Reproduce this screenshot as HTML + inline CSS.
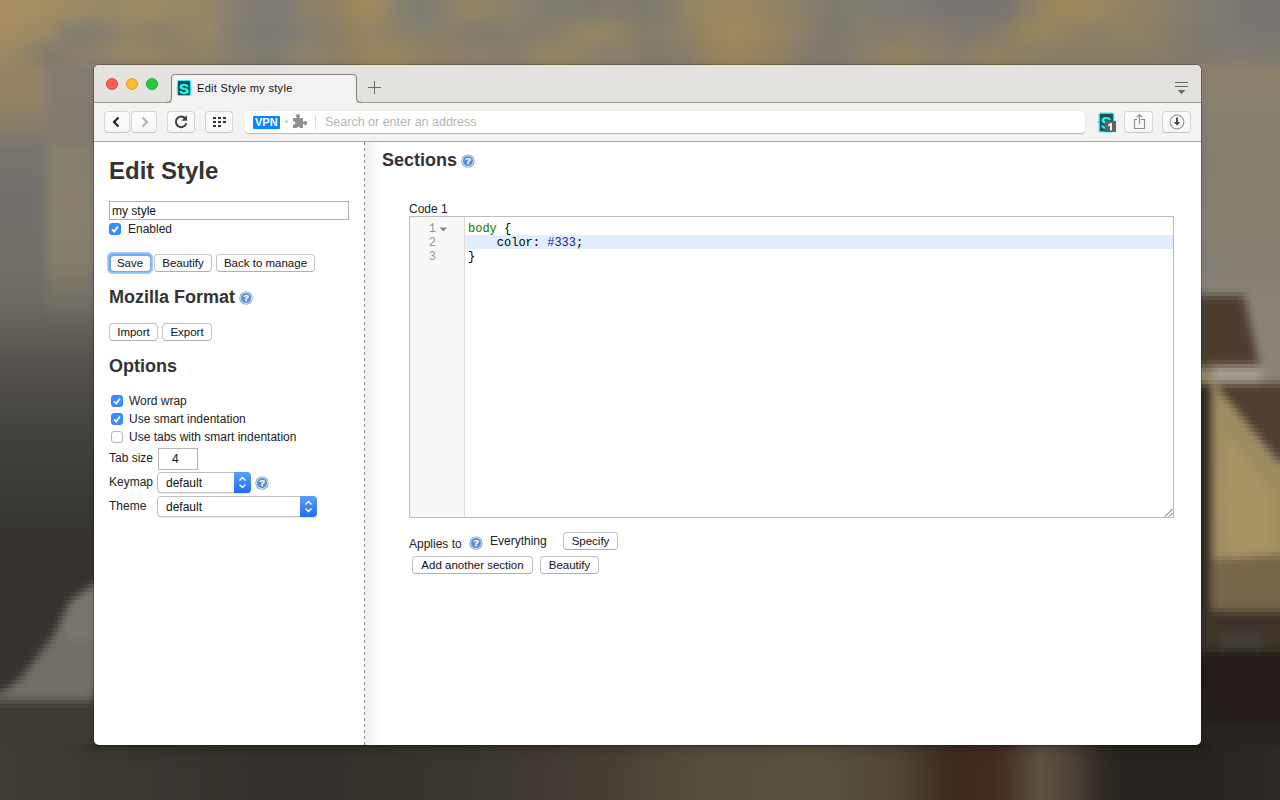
<!DOCTYPE html>
<html><head><meta charset="utf-8">
<style>
*{box-sizing:border-box;margin:0;padding:0}
html,body{width:1280px;height:800px;overflow:hidden;background:#5a554c;font-family:"Liberation Sans",sans-serif}
.a{position:absolute}
#bg{position:absolute;left:0;top:0;width:1280px;height:800px;overflow:hidden}
#bg div{position:absolute}
#win{position:absolute;left:94px;top:65px;width:1107px;height:680px;border-radius:5px;overflow:hidden;background:#fff;box-shadow:0 0 0 1px rgba(0,0,0,.25)}
#tabs{position:absolute;left:0;top:0;width:1107px;height:38px;background:#e4e2de;border-bottom:1px solid #9c9a97}
#tb{position:absolute;left:0;top:38px;width:1107px;height:39px;background:#f4f3f2;border-bottom:1px solid #a8a8a8}
.dot{position:absolute;top:13px;width:12px;height:12px;border-radius:50%}
.btn{position:absolute;background:linear-gradient(#fefefe,#f6f6f6);border:1px solid #d6d6d6;border-bottom-color:#c4c4c4;border-radius:4px}
.t{position:absolute;white-space:nowrap;line-height:1;color:#222}
.pb{position:absolute;height:18px;background:#fff;border:1px solid #c4c4c4;border-bottom-color:#b0b0b0;border-radius:4px;font-size:11.5px;line-height:16px;text-align:center;color:#111}
.cb{position:absolute;width:12px;height:12px;border-radius:3px;background:#3a8cff;border:1px solid #3583f5}
.cb svg{position:absolute;left:0px;top:0px}
.cbu{position:absolute;width:12px;height:12px;border-radius:3px;background:#fff;border:1px solid #b8b8b8}
.help{position:absolute;width:14px;height:14px;border-radius:50%;background:radial-gradient(circle,#5f8fcd 0,#5b8ccb 4.3px,#e2ebf7 4.6px,#d6e3f4 5.6px,#6c9ad3 6px,#4a7ec4 7px)}
.help:after{content:"?";position:absolute;left:0;top:1px;width:14px;height:12px;line-height:12px;text-align:center;font-size:9px;font-weight:bold;color:#fff}
h1,h2{position:absolute;white-space:nowrap;line-height:1;color:#333;font-weight:bold}
.cm{font-family:"Liberation Mono",monospace;font-size:12px;line-height:14px;white-space:pre;position:absolute}
</style></head><body>
<div id="bg"><div style="left:0px;top:0px;width:1280px;height:4px;background:linear-gradient(90deg,#a79162 0.0%,#a79163 1.3%,#a58f65 2.5%,#a38d62 3.8%,#a08d64 5.0%,#9c8b64 6.3%,#988964 7.5%,#968966 8.8%,#998b66 10.0%,#9b8b64 11.3%,#988a65 12.5%,#978965 13.8%,#988963 15.0%,#938665 16.3%,#8c836c 17.5%,#857f71 18.8%,#807c73 20.0%,#7f7a73 21.3%,#827d72 22.5%,#88816d 23.8%,#8c8269 25.0%,#918364 26.3%,#9a865d 27.5%,#9f895d 28.8%,#968762 30.0%,#87816c 31.3%,#7e7d73 32.5%,#817e72 33.8%,#89826c 35.0%,#918566 36.3%,#918566 37.5%,#8d8468 38.8%,#8a826b 40.0%,#86806f 41.3%,#807c71 42.5%,#7f7b70 43.8%,#807c70 45.0%,#7f7a71 46.3%,#827d70 47.5%,#817b70 48.8%,#7f7a71 50.0%,#807b6f 51.3%,#857f6b 52.5%,#918565 53.8%,#978762 55.0%,#9b8861 56.3%,#9b8861 57.5%,#988761 58.8%,#938464 60.0%,#8f8266 61.3%,#89816a 62.5%,#847e6e 63.8%,#7e7a71 65.0%,#807b70 66.3%,#827d70 67.5%,#807c72 68.8%,#7e7b73 70.0%,#7d7a73 71.3%,#7a7773 72.5%,#787572 73.8%,#777470 75.0%,#77746f 76.3%,#78746f 77.5%,#7b776f 78.8%,#877e68 80.0%,#938461 81.3%,#9a875d 82.5%,#9a875d 83.8%,#9c895e 85.0%,#988760 86.3%,#938463 87.5%,#8f8265 88.8%,#8c8267 90.0%,#87806a 91.3%,#847e6c 92.5%,#807c6f 93.8%,#7e7b70 95.0%,#7b7871 96.3%,#78756f 97.5%,#75726f 98.8%,#75726f 100.0%)"></div>
<div style="left:0px;top:4px;width:1280px;height:4px;background:linear-gradient(90deg,#a79162 0.0%,#a79163 1.3%,#a58f65 2.5%,#a38d62 3.8%,#a08d64 5.0%,#9c8b64 6.3%,#988964 7.5%,#968966 8.8%,#998b66 10.0%,#9b8b64 11.3%,#988a65 12.5%,#978965 13.8%,#988963 15.0%,#938665 16.3%,#8c836c 17.5%,#857f71 18.8%,#807c73 20.0%,#7f7a73 21.3%,#827d72 22.5%,#88816d 23.8%,#8c8269 25.0%,#918364 26.3%,#9a865d 27.5%,#9f895d 28.8%,#968762 30.0%,#87816c 31.3%,#7e7d73 32.5%,#817e72 33.8%,#89826c 35.0%,#918566 36.3%,#918566 37.5%,#8d8468 38.8%,#8a826b 40.0%,#86806f 41.3%,#807c71 42.5%,#7f7b70 43.8%,#807c70 45.0%,#7f7a71 46.3%,#827d70 47.5%,#817b70 48.8%,#7f7a71 50.0%,#807b6f 51.3%,#857f6b 52.5%,#918565 53.8%,#978762 55.0%,#9b8861 56.3%,#9b8861 57.5%,#988761 58.8%,#938464 60.0%,#8f8266 61.3%,#89816a 62.5%,#847e6e 63.8%,#7e7a71 65.0%,#807b70 66.3%,#827d70 67.5%,#807c72 68.8%,#7e7b73 70.0%,#7d7a73 71.3%,#7a7773 72.5%,#787572 73.8%,#777470 75.0%,#77746f 76.3%,#78746f 77.5%,#7b776f 78.8%,#877e68 80.0%,#938461 81.3%,#9a875d 82.5%,#9a875d 83.8%,#9c895e 85.0%,#988760 86.3%,#938463 87.5%,#8f8265 88.8%,#8c8267 90.0%,#87806a 91.3%,#847e6c 92.5%,#807c6f 93.8%,#7e7b70 95.0%,#7b7871 96.3%,#78756f 97.5%,#75726f 98.8%,#75726f 100.0%)"></div>
<div style="left:0px;top:8px;width:1280px;height:4px;background:linear-gradient(90deg,#a79162 0.0%,#a79163 1.3%,#a58f65 2.5%,#a38d62 3.8%,#9f8c64 5.0%,#9b8a65 6.3%,#978865 7.5%,#958966 8.8%,#998b66 10.0%,#9a8b64 11.3%,#978a65 12.5%,#978965 13.8%,#988963 15.0%,#938665 16.3%,#8c836c 17.5%,#857f71 18.8%,#807c73 20.0%,#7f7a73 21.3%,#827d72 22.5%,#88816d 23.8%,#8c8269 25.0%,#918364 26.3%,#9a865d 27.5%,#9e895d 28.8%,#968762 30.0%,#87816c 31.3%,#7e7d73 32.5%,#817e72 33.8%,#89826c 35.0%,#908566 36.3%,#908566 37.5%,#8c8468 38.8%,#8a826b 40.0%,#86806f 41.3%,#807c71 42.5%,#807b70 43.8%,#817c6f 45.0%,#807b70 46.3%,#837d6f 47.5%,#827b70 48.8%,#7f7a71 50.0%,#807b6f 51.3%,#857f6b 52.5%,#918565 53.8%,#978762 55.0%,#9b8861 56.3%,#9b8861 57.5%,#988761 58.8%,#938464 60.0%,#8f8266 61.3%,#89816a 62.5%,#847e6e 63.8%,#7e7a71 65.0%,#807b70 66.3%,#827d70 67.5%,#807c72 68.8%,#7e7b73 70.0%,#7d7a73 71.3%,#7b7773 72.5%,#797572 73.8%,#777470 75.0%,#77746f 76.3%,#79746f 77.5%,#7c776e 78.8%,#887e68 80.0%,#938461 81.3%,#9a875d 82.5%,#99875d 83.8%,#9b895e 85.0%,#978760 86.3%,#938463 87.5%,#8f8265 88.8%,#8c8267 90.0%,#87806a 91.3%,#847e6c 92.5%,#807c6f 93.8%,#7e7b70 95.0%,#7b7871 96.3%,#78756f 97.5%,#75726f 98.8%,#75726f 100.0%)"></div>
<div style="left:0px;top:12px;width:1280px;height:4px;background:linear-gradient(90deg,#a79162 0.0%,#a69063 1.3%,#a48e65 2.5%,#a28c62 3.8%,#9c8b65 5.0%,#988966 6.3%,#958766 7.5%,#948867 8.8%,#988a66 10.0%,#998a64 11.3%,#968965 12.5%,#968866 13.8%,#978864 15.0%,#938665 16.3%,#8c836c 17.5%,#857f71 18.8%,#807c73 20.0%,#7f7a73 21.3%,#827d72 22.5%,#87816d 23.8%,#8b816a 25.0%,#908265 26.3%,#99855e 27.5%,#9d885e 28.8%,#958663 30.0%,#87816c 31.3%,#7f7e72 32.5%,#827e71 33.8%,#89826c 35.0%,#8f8467 36.3%,#8f8467 37.5%,#8b8369 38.8%,#89826b 40.0%,#86806f 41.3%,#817c70 42.5%,#817c6f 43.8%,#837d6e 45.0%,#837c6f 46.3%,#857e6e 47.5%,#837c6f 48.8%,#807a70 50.0%,#807b6f 51.3%,#857f6b 52.5%,#918565 53.8%,#978762 55.0%,#9b8860 56.3%,#9c8860 57.5%,#988761 58.8%,#948464 60.0%,#908266 61.3%,#8a8169 62.5%,#847e6d 63.8%,#7e7a71 65.0%,#807b70 66.3%,#827d70 67.5%,#817c71 68.8%,#7f7b72 70.0%,#7e7b72 71.3%,#7c7872 72.5%,#7a7671 73.8%,#787570 75.0%,#78756f 76.3%,#7a756e 77.5%,#7e786d 78.8%,#897f67 80.0%,#948461 81.3%,#99875d 82.5%,#98865e 83.8%,#9a885f 85.0%,#968661 86.3%,#928463 87.5%,#8f8265 88.8%,#8c8267 90.0%,#87806a 91.3%,#847e6c 92.5%,#807c6f 93.8%,#7e7b70 95.0%,#7b7871 96.3%,#78756f 97.5%,#76736f 98.8%,#76736f 100.0%)"></div>
<div style="left:0px;top:16px;width:1280px;height:4px;background:linear-gradient(90deg,#a79062 0.0%,#a69063 1.3%,#a38e65 2.5%,#a08c62 3.8%,#988967 5.0%,#938669 6.3%,#918568 7.5%,#928768 8.8%,#978966 10.0%,#978964 11.3%,#948766 12.5%,#948767 13.8%,#968864 15.0%,#938665 16.3%,#8c836c 17.5%,#847f71 18.8%,#807c73 20.0%,#7f7a73 21.3%,#827d72 22.5%,#87816e 23.8%,#8a816a 25.0%,#8f8266 26.3%,#98855f 27.5%,#9b885f 28.8%,#948663 30.0%,#87816c 31.3%,#807f71 32.5%,#837e70 33.8%,#89826b 35.0%,#8d8368 36.3%,#8c8269 37.5%,#89826a 38.8%,#88816b 40.0%,#857f6f 41.3%,#827d70 42.5%,#837d6e 43.8%,#857e6c 45.0%,#877e6c 46.3%,#87806c 47.5%,#857d6d 48.8%,#817b6f 50.0%,#817b6f 51.3%,#857f6b 52.5%,#908465 53.8%,#978761 55.0%,#9b8860 56.3%,#9c8860 57.5%,#998760 58.8%,#948463 60.0%,#918265 61.3%,#8a8169 62.5%,#847e6d 63.8%,#7e7a70 65.0%,#807b70 66.3%,#827d70 67.5%,#817c70 68.8%,#807c71 70.0%,#807c71 71.3%,#7e7971 72.5%,#7c7770 73.8%,#79766f 75.0%,#79766f 76.3%,#7c766d 77.5%,#807a6b 78.8%,#8b8065 80.0%,#948561 81.3%,#98875e 82.5%,#96855f 83.8%,#978660 85.0%,#948562 86.3%,#928463 87.5%,#8f8265 88.8%,#8c8267 90.0%,#87806a 91.3%,#847e6c 92.5%,#807c6f 93.8%,#7e7b70 95.0%,#7b7871 96.3%,#78756f 97.5%,#76746f 98.8%,#76746f 100.0%)"></div>
<div style="left:0px;top:20px;width:1280px;height:4px;background:linear-gradient(90deg,#a68f62 0.0%,#a58f62 1.3%,#a18d64 2.5%,#9e8b63 3.8%,#938669 5.0%,#8e836c 6.3%,#8c836b 7.5%,#8f856a 8.8%,#958865 10.0%,#958765 11.3%,#918567 12.5%,#928568 13.8%,#958765 15.0%,#948765 16.3%,#8b826c 17.5%,#837e71 18.8%,#7f7b73 20.0%,#7e7a73 21.3%,#817c73 22.5%,#86806f 23.8%,#89806b 25.0%,#8e8167 26.3%,#968460 27.5%,#998761 28.8%,#928564 30.0%,#88826b 31.3%,#82806f 32.5%,#847f6e 33.8%,#89816a 35.0%,#8b816a 36.3%,#89806b 37.5%,#87806c 38.8%,#87806c 40.0%,#847e6f 41.3%,#837e6f 42.5%,#857e6c 43.8%,#89806a 45.0%,#8c8169 46.3%,#8b826a 47.5%,#877f6b 48.8%,#827c6e 50.0%,#827c6e 51.3%,#86806b 52.5%,#8f8365 53.8%,#978660 55.0%,#9c885f 56.3%,#9d895f 57.5%,#9a885f 58.8%,#958562 60.0%,#928364 61.3%,#8b8168 62.5%,#847d6c 63.8%,#7e796f 65.0%,#807b70 66.3%,#837e6f 67.5%,#827d6f 68.8%,#817d70 70.0%,#827d6f 71.3%,#817a6f 72.5%,#7e786f 73.8%,#7b776e 75.0%,#7b776e 76.3%,#7e786c 77.5%,#847c69 78.8%,#8e8163 80.0%,#958660 81.3%,#97865f 82.5%,#948460 83.8%,#948462 85.0%,#918363 86.3%,#918363 87.5%,#908364 88.8%,#8b8166 90.0%,#877f69 91.3%,#837d6c 92.5%,#7f7b6e 93.8%,#7e7a6f 95.0%,#7c7971 96.3%,#797670 97.5%,#777570 98.8%,#777570 100.0%)"></div>
<div style="left:0px;top:24px;width:1280px;height:4px;background:linear-gradient(90deg,#a58f62 0.0%,#a48e62 1.3%,#a08c63 2.5%,#9c8a64 3.8%,#8e836b 5.0%,#88806f 6.3%,#88806e 7.5%,#8c836c 8.8%,#938765 10.0%,#928565 11.3%,#8e8367 12.5%,#908469 13.8%,#948666 15.0%,#958865 16.3%,#8a826c 17.5%,#837d71 18.8%,#7e7a73 20.0%,#7e7a73 21.3%,#807b73 22.5%,#857f6f 23.8%,#887f6c 25.0%,#8d8068 26.3%,#958361 27.5%,#968662 28.8%,#918465 30.0%,#89826a 31.3%,#84816e 32.5%,#85806d 33.8%,#89806a 35.0%,#88806c 36.3%,#857e6d 37.5%,#857e6d 38.8%,#86806d 40.0%,#847e6f 41.3%,#847e6e 42.5%,#877f6b 43.8%,#8c8268 45.0%,#918466 46.3%,#8e8467 47.5%,#898069 48.8%,#837c6d 50.0%,#827d6e 51.3%,#87806b 52.5%,#8f8365 53.8%,#978560 55.0%,#9d885e 56.3%,#9e895e 57.5%,#9a885f 58.8%,#968562 60.0%,#938464 61.3%,#8c8167 62.5%,#847c6b 63.8%,#7e796f 65.0%,#807b70 66.3%,#847f6e 67.5%,#837e6e 68.8%,#827d6f 70.0%,#847e6e 71.3%,#847b6d 72.5%,#80796e 73.8%,#7d786e 75.0%,#7d786d 76.3%,#80796b 77.5%,#877e67 78.8%,#918261 80.0%,#96865f 81.3%,#96855f 82.5%,#928361 83.8%,#908263 85.0%,#8e8264 86.3%,#908363 87.5%,#908363 88.8%,#8b8065 90.0%,#877e68 91.3%,#837c6c 92.5%,#7f7a6e 93.8%,#7e796f 95.0%,#7d7971 96.3%,#7a7671 97.5%,#787671 98.8%,#787671 100.0%)"></div>
<div style="left:0px;top:28px;width:1280px;height:4px;background:linear-gradient(90deg,#a58e62 0.0%,#a38d62 1.3%,#9e8b63 2.5%,#998964 3.8%,#8b816d 5.0%,#847e71 6.3%,#857e70 7.5%,#8a826d 8.8%,#928665 10.0%,#908465 11.3%,#8d8268 12.5%,#8e8369 13.8%,#938567 15.0%,#958865 16.3%,#8a826c 17.5%,#827d71 18.8%,#7e7a73 20.0%,#7e7a73 21.3%,#807b73 22.5%,#857f70 23.8%,#887e6d 25.0%,#8c7f68 26.3%,#948261 27.5%,#948563 28.8%,#908365 30.0%,#89826a 31.3%,#85816d 32.5%,#86806c 33.8%,#898069 35.0%,#867f6d 36.3%,#837c6f 37.5%,#837d6e 38.8%,#867f6d 40.0%,#837d6f 41.3%,#857f6d 42.5%,#89806a 43.8%,#8f8366 45.0%,#958664 46.3%,#918566 47.5%,#8b8168 48.8%,#847d6c 50.0%,#837d6e 51.3%,#87806b 52.5%,#8e8265 53.8%,#97855f 55.0%,#9d885d 56.3%,#9e895d 57.5%,#9b885e 58.8%,#978561 60.0%,#938463 61.3%,#8c8166 62.5%,#847c6a 63.8%,#7e796e 65.0%,#807b70 66.3%,#847f6e 67.5%,#847e6d 68.8%,#847e6d 70.0%,#857f6d 71.3%,#867c6c 72.5%,#827a6e 73.8%,#7e796d 75.0%,#7e796d 76.3%,#827a6a 77.5%,#8a7f65 78.8%,#928360 80.0%,#96875f 81.3%,#958560 82.5%,#908362 83.8%,#8e8164 85.0%,#8c8164 86.3%,#8f8363 87.5%,#908363 88.8%,#8b8065 90.0%,#877e68 91.3%,#837c6c 92.5%,#7f7a6e 93.8%,#7e796f 95.0%,#7d7971 96.3%,#7a7671 97.5%,#797671 98.8%,#797671 100.0%)"></div>
<div style="left:0px;top:32px;width:1280px;height:4px;background:linear-gradient(90deg,#a48e62 0.0%,#a28d62 1.3%,#9d8a63 2.5%,#978865 3.8%,#89806e 5.0%,#837d72 6.3%,#847e71 7.5%,#89826d 8.8%,#928565 10.0%,#908365 11.3%,#8c8268 12.5%,#8d826a 13.8%,#938567 15.0%,#948865 16.3%,#8a826c 17.5%,#827d71 18.8%,#7e7a73 20.0%,#7e7a73 21.3%,#807b73 22.5%,#857f70 23.8%,#877e6d 25.0%,#8b7f69 26.3%,#938262 27.5%,#948563 28.8%,#908365 30.0%,#8a8269 31.3%,#87826b 32.5%,#87806b 33.8%,#898069 35.0%,#867e6d 36.3%,#827c6f 37.5%,#837c6e 38.8%,#857f6d 40.0%,#847d6e 41.3%,#867f6c 42.5%,#8a8169 43.8%,#908465 45.0%,#968763 46.3%,#918565 47.5%,#8b8268 48.8%,#857d6b 50.0%,#837d6e 51.3%,#87806b 52.5%,#8d8265 53.8%,#96855f 55.0%,#9d885d 56.3%,#9e895d 57.5%,#9b885e 58.8%,#978561 60.0%,#938463 61.3%,#8c8166 62.5%,#847c6a 63.8%,#7e796e 65.0%,#807b70 66.3%,#847f6e 67.5%,#857e6d 68.8%,#857e6c 70.0%,#86806c 71.3%,#877d6b 72.5%,#837b6d 73.8%,#807a6d 75.0%,#80796c 76.3%,#847b6a 77.5%,#8b8064 78.8%,#938460 80.0%,#968660 81.3%,#948461 82.5%,#8f8262 83.8%,#8c8065 85.0%,#8b8065 86.3%,#8e8363 87.5%,#8f8363 88.8%,#8b8065 90.0%,#877e68 91.3%,#837c6c 92.5%,#7f7a6e 93.8%,#7e796f 95.0%,#7d7971 96.3%,#7a7671 97.5%,#797771 98.8%,#797771 100.0%)"></div>
<div style="left:0px;top:36px;width:1280px;height:4px;background:linear-gradient(90deg,#a28d62 0.0%,#a08c62 1.3%,#9a8964 2.5%,#938667 3.8%,#877f6e 5.0%,#837d71 6.3%,#857e70 7.5%,#8b826c 8.8%,#928565 10.0%,#908465 11.3%,#8c8268 12.5%,#8d8269 13.8%,#928467 15.0%,#938765 16.3%,#8a826c 17.5%,#827d70 18.8%,#7f7b72 20.0%,#7f7a72 21.3%,#817c72 22.5%,#85806f 23.8%,#887f6c 25.0%,#8b7f68 26.3%,#938262 27.5%,#948563 28.8%,#918464 30.0%,#8c8368 31.3%,#89826a 32.5%,#88806a 33.8%,#8a8068 35.0%,#867e6d 36.3%,#837c6f 37.5%,#837c6e 38.8%,#857e6d 40.0%,#857e6d 41.3%,#88806b 42.5%,#8c8268 43.8%,#918465 45.0%,#958763 46.3%,#908566 47.5%,#8b8268 48.8%,#857d6b 50.0%,#827d6e 51.3%,#86806b 52.5%,#8c8166 53.8%,#958460 55.0%,#9c875d 56.3%,#9e885d 57.5%,#9a875e 58.8%,#968461 60.0%,#928363 61.3%,#8b8067 62.5%,#837b6b 63.8%,#7e796f 65.0%,#817b70 66.3%,#857f6d 67.5%,#877f6b 68.8%,#877f6b 70.0%,#88806a 71.3%,#887e6a 72.5%,#847c6c 73.8%,#817b6c 75.0%,#827b6b 76.3%,#867d68 77.5%,#8c8064 78.8%,#928360 80.0%,#948561 81.3%,#928362 82.5%,#8d8163 83.8%,#8b8066 85.0%,#8a8066 86.3%,#8d8264 87.5%,#8e8264 88.8%,#8a8066 90.0%,#867d69 91.3%,#837c6c 92.5%,#7f7a6e 93.8%,#7e796f 95.0%,#7e7971 96.3%,#7b7771 97.5%,#7a7771 98.8%,#7a7771 100.0%)"></div>
<div style="left:0px;top:40px;width:1280px;height:4px;background:linear-gradient(90deg,#a08c62 0.0%,#9d8a62 1.3%,#968765 2.5%,#8e8369 3.8%,#877e6e 5.0%,#847d70 6.3%,#877f6e 7.5%,#8d836a 8.8%,#938665 10.0%,#918465 11.3%,#8d8267 12.5%,#8d8269 13.8%,#908466 15.0%,#928665 16.3%,#89826b 17.5%,#837d70 18.8%,#807b72 20.0%,#7f7b72 21.3%,#837d71 22.5%,#87816e 23.8%,#89806b 25.0%,#8b7f68 26.3%,#928262 27.5%,#948561 28.8%,#938562 30.0%,#8e8466 31.3%,#8b8268 32.5%,#8a8068 33.8%,#8b8067 35.0%,#877e6c 36.3%,#847d6d 37.5%,#857d6c 38.8%,#857e6c 40.0%,#877f6b 41.3%,#8a8269 42.5%,#8d8367 43.8%,#908465 45.0%,#938565 46.3%,#8e8367 47.5%,#8b8168 48.8%,#857d6b 50.0%,#827c6e 51.3%,#857f6b 52.5%,#8b8066 53.8%,#948361 55.0%,#9a865e 56.3%,#9c885d 57.5%,#99865e 58.8%,#958461 60.0%,#918263 61.3%,#8a7f67 62.5%,#827b6c 63.8%,#7e796f 65.0%,#817b70 66.3%,#867f6c 67.5%,#897f6a 68.8%,#8a8069 70.0%,#898169 71.3%,#887e6a 72.5%,#857c6c 73.8%,#837c6b 75.0%,#857c69 76.3%,#887e67 77.5%,#8c8064 78.8%,#908262 80.0%,#918462 81.3%,#8f8263 82.5%,#8c8065 83.8%,#8a7f66 85.0%,#897f66 86.3%,#8c8165 87.5%,#8c8165 88.8%,#897f66 90.0%,#857d69 91.3%,#827b6c 92.5%,#7f7a6e 93.8%,#7e796f 95.0%,#7e7a71 96.3%,#7d7871 97.5%,#7b7871 98.8%,#7a7871 100.0%)"></div>
<div style="left:0px;top:44px;width:1280px;height:4px;background:linear-gradient(90deg,#9d8b63 0.0%,#9a8963 1.3%,#928566 2.5%,#89806b 3.8%,#867d6d 5.0%,#867e6e 6.3%,#89806c 7.5%,#8f8468 8.8%,#948664 10.0%,#928564 11.3%,#8e8367 12.5%,#8d8268 13.8%,#8f8366 15.0%,#918565 16.3%,#89816b 17.5%,#837e6f 18.8%,#817c71 20.0%,#807b71 21.3%,#847e70 22.5%,#88826d 23.8%,#8a816a 25.0%,#8c8067 26.3%,#928162 27.5%,#958560 28.8%,#958660 30.0%,#918564 31.3%,#8d8366 32.5%,#8b8067 33.8%,#8c8066 35.0%,#887e6b 36.3%,#867e6c 37.5%,#867d6b 38.8%,#857d6c 40.0%,#898069 41.3%,#8d8367 42.5%,#8e8466 43.8%,#908465 45.0%,#908466 46.3%,#8b8268 47.5%,#8a8169 48.8%,#847c6c 50.0%,#817c6e 51.3%,#847f6b 52.5%,#8a7f67 53.8%,#938262 55.0%,#99855e 56.3%,#9b875d 57.5%,#98855f 58.8%,#948362 60.0%,#908164 61.3%,#897e68 62.5%,#817a6d 63.8%,#7f7870 65.0%,#827c70 66.3%,#877f6b 67.5%,#8b8068 68.8%,#8d8167 70.0%,#8b8168 71.3%,#897f69 72.5%,#867d6b 73.8%,#857d6a 75.0%,#887d67 76.3%,#8b7f65 77.5%,#8d8063 78.8%,#8e8163 80.0%,#8e8264 81.3%,#8c8165 82.5%,#8a7f66 83.8%,#897f67 85.0%,#887f67 86.3%,#8a8066 87.5%,#8a8066 88.8%,#887f67 90.0%,#847c6a 91.3%,#827b6d 92.5%,#7f796e 93.8%,#7e796e 95.0%,#7f7a70 96.3%,#7e7970 97.5%,#7c7871 98.8%,#7b7871 100.0%)"></div>
<div style="left:0px;top:48px;width:1280px;height:4px;background:linear-gradient(90deg,#9b8a63 0.0%,#978863 1.3%,#8f8366 2.5%,#857e6d 3.8%,#857d6d 5.0%,#887f6c 6.3%,#8b816b 7.5%,#918566 8.8%,#958764 10.0%,#938664 11.3%,#8f8466 12.5%,#8d8267 13.8%,#8e8265 15.0%,#8f8565 16.3%,#88816a 17.5%,#847e6e 18.8%,#817d70 20.0%,#817c70 21.3%,#857f70 22.5%,#89826d 23.8%,#8a816a 25.0%,#8c8066 26.3%,#918162 27.5%,#96855f 28.8%,#97865f 30.0%,#948562 31.3%,#8f8365 32.5%,#8c8066 33.8%,#8c8066 35.0%,#887e6b 36.3%,#887e6b 37.5%,#877e6a 38.8%,#857c6b 40.0%,#8a8068 41.3%,#8f8466 42.5%,#908466 43.8%,#8f8465 45.0%,#8e8367 46.3%,#89816a 47.5%,#89806a 48.8%,#847c6c 50.0%,#807b6e 51.3%,#847e6b 52.5%,#887f68 53.8%,#918263 55.0%,#98855f 56.3%,#9a865d 57.5%,#97855f 58.8%,#948262 60.0%,#8e8164 61.3%,#877e69 62.5%,#81796d 63.8%,#7f7871 65.0%,#837c70 66.3%,#877f6b 67.5%,#8d8166 68.8%,#908165 70.0%,#8d8266 71.3%,#8a8068 72.5%,#877e6a 73.8%,#877e69 75.0%,#8b7f66 76.3%,#8d8163 77.5%,#8d8063 78.8%,#8d8164 80.0%,#8b8066 81.3%,#897f67 82.5%,#887f67 83.8%,#887e68 85.0%,#887e68 86.3%,#887f67 87.5%,#897f67 88.8%,#877e68 90.0%,#847c6b 91.3%,#817a6d 92.5%,#7f796e 93.8%,#7e796e 95.0%,#807b70 96.3%,#7f7a70 97.5%,#7c7971 98.8%,#7c7971 100.0%)"></div>
<div style="left:0px;top:52px;width:1280px;height:4px;background:linear-gradient(90deg,#9a8963 0.0%,#968763 1.3%,#8d8267 2.5%,#827c6e 3.8%,#857c6d 5.0%,#887f6c 6.3%,#8b816a 7.5%,#918566 8.8%,#948665 10.0%,#938664 11.3%,#908466 12.5%,#8d8267 13.8%,#8d8265 15.0%,#8e8465 16.3%,#88816a 17.5%,#847e6e 18.8%,#827d70 20.0%,#817c70 21.3%,#86806f 22.5%,#8a836c 23.8%,#8b8269 25.0%,#8c8066 26.3%,#918162 27.5%,#96855e 28.8%,#98875e 30.0%,#958661 31.3%,#908364 32.5%,#8d8065 33.8%,#8d8065 35.0%,#897e6a 36.3%,#897f6a 37.5%,#887e69 38.8%,#857c6b 40.0%,#8b8167 41.3%,#908565 42.5%,#918565 43.8%,#8f8465 45.0%,#8d8268 46.3%,#88806b 47.5%,#89806a 48.8%,#847c6c 50.0%,#807b6e 51.3%,#837e6b 52.5%,#877e68 53.8%,#908164 55.0%,#97845f 56.3%,#99865d 57.5%,#96845f 58.8%,#938262 60.0%,#8d8064 61.3%,#867d69 62.5%,#80796e 63.8%,#7f7871 65.0%,#837c70 66.3%,#887f6a 67.5%,#8e8165 68.8%,#918264 70.0%,#8e8265 71.3%,#8a8068 72.5%,#887e6a 73.8%,#887f68 75.0%,#8c8065 76.3%,#8e8262 77.5%,#8d8063 78.8%,#8c8065 80.0%,#8a7f67 81.3%,#887e68 82.5%,#877e68 83.8%,#877e68 85.0%,#877e68 86.3%,#877e68 87.5%,#887e68 88.8%,#877e68 90.0%,#847c6b 91.3%,#827a6d 92.5%,#807a6e 93.8%,#7f7a6e 95.0%,#817b70 96.3%,#807b70 97.5%,#7e7a71 98.8%,#7d7a71 100.0%)"></div>
<div style="left:0px;top:56px;width:1280px;height:4px;background:linear-gradient(90deg,#988863 0.0%,#958763 1.3%,#8d8267 2.5%,#827c6f 3.8%,#857c6e 5.0%,#887f6c 6.3%,#8a806a 7.5%,#8f8366 8.8%,#928465 10.0%,#928564 11.3%,#8f8365 12.5%,#8c8166 13.8%,#8c8164 15.0%,#8d8364 16.3%,#878069 17.5%,#837d6d 18.8%,#817c6f 20.0%,#807b6f 21.3%,#857f6e 22.5%,#89826b 23.8%,#8a8168 25.0%,#8b7f65 26.3%,#908061 27.5%,#95845d 28.8%,#98865c 30.0%,#95855f 31.3%,#908262 32.5%,#8c7f64 33.8%,#8c7f64 35.0%,#887d69 36.3%,#887e69 37.5%,#877d68 38.8%,#847b6a 40.0%,#8b8065 41.3%,#908463 42.5%,#908464 43.8%,#8e8364 45.0%,#8b8167 46.3%,#867f6a 47.5%,#887f69 48.8%,#837b6b 50.0%,#7f7a6d 51.3%,#827d6a 52.5%,#867d67 53.8%,#8f8063 55.0%,#96835e 56.3%,#98855c 57.5%,#95835e 58.8%,#928161 60.0%,#8c7f63 61.3%,#857c68 62.5%,#7f786d 63.8%,#7e7770 65.0%,#827b6f 66.3%,#877e69 67.5%,#8e8064 68.8%,#918162 70.0%,#8d8164 71.3%,#897f67 72.5%,#877d69 73.8%,#887e67 75.0%,#8c7f63 76.3%,#8e8161 77.5%,#8c7f62 78.8%,#8a7f64 80.0%,#887e66 81.3%,#867d67 82.5%,#867d67 83.8%,#867d67 85.0%,#867d67 86.3%,#867d67 87.5%,#867d67 88.8%,#867d67 90.0%,#847b6a 91.3%,#827a6c 92.5%,#807a6d 93.8%,#817b6e 95.0%,#827c6f 96.3%,#827c6f 97.5%,#807b70 98.8%,#7f7b70 100.0%)"></div>
<div style="left:0px;top:60px;width:1280px;height:4px;background:linear-gradient(90deg,#978764 0.0%,#958664 1.3%,#8e8266 2.5%,#837d6e 3.8%,#847c6e 5.0%,#877e6d 6.3%,#857c69 7.5%,#897f66 8.8%,#8b7f66 10.0%,#8e8162 11.3%,#8c8063 12.5%,#897e64 13.8%,#897e62 15.0%,#8a8062 16.3%,#847d67 17.5%,#807a6b 18.8%,#7e796d 20.0%,#7d786d 21.3%,#827c6c 22.5%,#867f69 23.8%,#877e66 25.0%,#887c63 26.3%,#8d7d5f 27.5%,#92815b 28.8%,#94835a 30.0%,#92825d 31.3%,#8d7f60 32.5%,#897c62 33.8%,#897c62 35.0%,#857a67 36.3%,#857b67 37.5%,#847a66 38.8%,#817868 40.0%,#887d63 41.3%,#8d8161 42.5%,#8d8162 43.8%,#8b8062 45.0%,#887e65 46.3%,#837c68 47.5%,#857c67 48.8%,#807869 50.0%,#7c776b 51.3%,#7f7a68 52.5%,#837a65 53.8%,#8c7d61 55.0%,#92805c 56.3%,#94825a 57.5%,#92805c 58.8%,#8f7e5f 60.0%,#897c61 61.3%,#827966 62.5%,#7c756b 63.8%,#7b746e 65.0%,#7f786d 66.3%,#847b67 67.5%,#8b7d62 68.8%,#8e7e60 70.0%,#8a7e62 71.3%,#867c65 72.5%,#847a67 73.8%,#857b65 75.0%,#897c61 76.3%,#8b7e5f 77.5%,#897c60 78.8%,#877c62 80.0%,#857b64 81.3%,#837a65 82.5%,#837a65 83.8%,#837a65 85.0%,#837a65 86.3%,#837a65 87.5%,#837a65 88.8%,#847b66 90.0%,#827a68 91.3%,#817969 92.5%,#80786a 93.8%,#837c6d 95.0%,#847e6e 96.3%,#847e6e 97.5%,#837c6f 98.8%,#827c6f 100.0%)"></div>
<div style="left:0px;top:64px;width:1280px;height:4px;background:linear-gradient(90deg,#968664 0.0%,#948564 1.3%,#908366 2.5%,#857e6e 3.8%,#847d6f 5.0%,#867e6e 6.3%,#88806f 7.5%,#8b826d 8.8%,#8d826d 10.0%,#928567 11.3%,#918567 12.5%,#8e8368 13.8%,#8e8366 15.0%,#8f8566 16.3%,#89826b 17.5%,#857f6f 18.8%,#837e71 20.0%,#827d71 21.3%,#878170 22.5%,#8b846d 23.8%,#8c836a 25.0%,#8d8167 26.3%,#928263 27.5%,#97865f 28.8%,#9a885e 30.0%,#978761 31.3%,#928464 32.5%,#8e8166 33.8%,#8e8166 35.0%,#8a7f6b 36.3%,#8a806b 37.5%,#897f6a 38.8%,#867d6c 40.0%,#8d8267 41.3%,#928665 42.5%,#928666 43.8%,#908566 45.0%,#8d8369 46.3%,#88816c 47.5%,#8a816b 48.8%,#857d6d 50.0%,#817c6f 51.3%,#847f6c 52.5%,#887f69 53.8%,#918265 55.0%,#988560 56.3%,#9a875e 57.5%,#978560 58.8%,#948363 60.0%,#8e8165 61.3%,#877e6a 62.5%,#817a6f 63.8%,#807972 65.0%,#847d71 66.3%,#89806b 67.5%,#908266 68.8%,#938364 70.0%,#8f8366 71.3%,#8b8169 72.5%,#897f6b 73.8%,#8a8069 75.0%,#8e8165 76.3%,#908363 77.5%,#8e8164 78.8%,#8c8166 80.0%,#8a8068 81.3%,#887f69 82.5%,#887f69 83.8%,#887f69 85.0%,#887f69 86.3%,#887f69 87.5%,#887f69 88.8%,#89816a 90.0%,#89806c 91.3%,#88806d 92.5%,#887f6d 93.8%,#867e6c 95.0%,#877f6d 96.3%,#877f6d 97.5%,#867e6e 98.8%,#857e6e 100.0%)"></div>
<div style="left:0px;top:68px;width:96px;height:4px;background:linear-gradient(90deg,#948465 0.5%,#948465 4.7%,#948465 8.9%,#948465 13.0%,#948465 17.2%,#948465 21.4%,#948465 25.5%,#938465 29.7%,#938465 33.9%,#938465 38.0%,#918366 42.2%,#8d8169 46.4%,#877f6e 50.5%,#847d70 54.7%,#837d71 58.9%,#837d71 63.0%,#837d71 67.2%,#837d71 71.4%,#837d71 75.5%,#837d71 79.7%,#837d71 83.9%,#847d71 88.0%,#827c70 92.2%,#7f786d 96.4%,#857e71 99.5%)"></div>
<div style="left:1199px;top:68px;width:81px;height:4px;background:linear-gradient(90deg,#8c826c 0.6%,#867c67 5.6%,#897f6a 10.5%,#8b816b 15.4%,#8b816b 20.4%,#8b816b 25.3%,#8b816c 30.2%,#8b816c 35.2%,#8b816c 40.1%,#8b816c 45.1%,#8b816c 50.0%,#8b816c 54.9%,#8b816c 59.9%,#8b816c 64.8%,#8b816c 69.8%,#8b816c 74.7%,#8b816c 79.6%,#8a816c 84.6%,#8a816c 89.5%,#8a816c 94.4%,#8a816c 99.4%)"></div>
<div style="left:0px;top:72px;width:96px;height:4px;background:linear-gradient(90deg,#948465 0.5%,#948465 4.7%,#948465 8.9%,#948465 13.0%,#948465 17.2%,#948465 21.4%,#948465 25.5%,#948465 29.7%,#948465 33.9%,#948465 38.0%,#928366 42.2%,#8e8169 46.4%,#887f6e 50.5%,#847d70 54.7%,#837d71 58.9%,#837d71 63.0%,#837d71 67.2%,#837d71 71.4%,#837d71 75.5%,#837d71 79.7%,#837d71 83.9%,#837d71 88.0%,#817c70 92.2%,#7e786d 96.4%,#847e72 99.5%)"></div>
<div style="left:1199px;top:72px;width:81px;height:4px;background:linear-gradient(90deg,#8d836d 0.6%,#877d68 5.6%,#8a806b 10.5%,#8c826c 15.4%,#8c826c 20.4%,#8c826c 25.3%,#8c826c 30.2%,#8c826c 35.2%,#8c826c 40.1%,#8c826c 45.1%,#8c826c 50.0%,#8c826c 54.9%,#8c826c 59.9%,#8c826c 64.8%,#8c826c 69.8%,#8c826c 74.7%,#8c826c 79.6%,#8c826c 84.6%,#8c826c 89.5%,#8c826c 94.4%,#8c826c 99.4%)"></div>
<div style="left:0px;top:76px;width:96px;height:4px;background:linear-gradient(90deg,#948465 0.5%,#948465 4.7%,#948465 8.9%,#948465 13.0%,#948465 17.2%,#948465 21.4%,#948465 25.5%,#948465 29.7%,#948465 33.9%,#948465 38.0%,#928366 42.2%,#8e8169 46.4%,#887f6e 50.5%,#847d70 54.7%,#837d71 58.9%,#837d71 63.0%,#837d71 67.2%,#837d71 71.4%,#837d71 75.5%,#837d71 79.7%,#837d71 83.9%,#837d71 88.0%,#817c70 92.2%,#7e786d 96.4%,#847e72 99.5%)"></div>
<div style="left:1199px;top:76px;width:81px;height:4px;background:linear-gradient(90deg,#8c836d 0.6%,#867d68 5.6%,#89806b 10.5%,#8b826c 15.4%,#8b826c 20.4%,#8b826c 25.3%,#8b826c 30.2%,#8b826c 35.2%,#8b826c 40.1%,#8b826c 45.1%,#8b826c 50.0%,#8b826c 54.9%,#8b826c 59.9%,#8b826c 64.8%,#8b826c 69.8%,#8b826c 74.7%,#8b826c 79.6%,#8b826c 84.6%,#8b826c 89.5%,#8b826c 94.4%,#8b826c 99.4%)"></div>
<div style="left:0px;top:80px;width:96px;height:4px;background:linear-gradient(90deg,#948465 0.5%,#948465 4.7%,#948465 8.9%,#948465 13.0%,#948465 17.2%,#948465 21.4%,#948465 25.5%,#948465 29.7%,#948465 33.9%,#948465 38.0%,#928366 42.2%,#8e8169 46.4%,#887f6e 50.5%,#847d70 54.7%,#837d71 58.9%,#837d71 63.0%,#837d71 67.2%,#837d71 71.4%,#837d71 75.5%,#837d71 79.7%,#837d71 83.9%,#837d71 88.0%,#817c70 92.2%,#7e786d 96.4%,#847e72 99.5%)"></div>
<div style="left:1199px;top:80px;width:81px;height:4px;background:linear-gradient(90deg,#8c836e 0.6%,#867d69 5.6%,#89806c 10.5%,#8b826d 15.4%,#8b826d 20.4%,#8b826d 25.3%,#8b826d 30.2%,#8b826d 35.2%,#8b826d 40.1%,#8b826d 45.1%,#8b826d 50.0%,#8b826d 54.9%,#8b826d 59.9%,#8b826d 64.8%,#8b826d 69.8%,#8b826d 74.7%,#8b826d 79.6%,#8b826d 84.6%,#8b826d 89.5%,#8b826d 94.4%,#8b826d 99.4%)"></div>
<div style="left:0px;top:84px;width:96px;height:4px;background:linear-gradient(90deg,#938465 0.5%,#938465 4.7%,#938465 8.9%,#938465 13.0%,#938465 17.2%,#938465 21.4%,#938465 25.5%,#938465 29.7%,#938465 33.9%,#938465 38.0%,#918366 42.2%,#8d8169 46.4%,#887f6e 50.5%,#847d70 54.7%,#837d71 58.9%,#837d71 63.0%,#837d71 67.2%,#837d71 71.4%,#837d71 75.5%,#837d71 79.7%,#837d71 83.9%,#837d71 88.0%,#817c70 92.2%,#7e786d 96.4%,#847e72 99.5%)"></div>
<div style="left:1199px;top:84px;width:81px;height:4px;background:linear-gradient(90deg,#8c836e 0.6%,#867d69 5.6%,#89806c 10.5%,#8b826d 15.4%,#8b826d 20.4%,#8b826d 25.3%,#8b826d 30.2%,#8b826d 35.2%,#8b826d 40.1%,#8b826d 45.1%,#8b826d 50.0%,#8b826d 54.9%,#8b826d 59.9%,#8b826d 64.8%,#8b826d 69.8%,#8b826d 74.7%,#8b826d 79.6%,#8b826d 84.6%,#8b826d 89.5%,#8b826d 94.4%,#8b826d 99.4%)"></div>
<div style="left:0px;top:88px;width:96px;height:4px;background:linear-gradient(90deg,#938465 0.5%,#938465 4.7%,#938465 8.9%,#938465 13.0%,#938465 17.2%,#938465 21.4%,#938465 25.5%,#938465 29.7%,#938465 33.9%,#938465 38.0%,#918366 42.2%,#8d8169 46.4%,#887f6e 50.5%,#847d70 54.7%,#837d71 58.9%,#837d71 63.0%,#837d71 67.2%,#837d71 71.4%,#837d71 75.5%,#837d71 79.7%,#837d71 83.9%,#837d71 88.0%,#817c70 92.2%,#7e786d 96.4%,#847e72 99.5%)"></div>
<div style="left:1199px;top:88px;width:81px;height:4px;background:linear-gradient(90deg,#8b826f 0.6%,#857c6a 5.6%,#887f6d 10.5%,#8a816e 15.4%,#8a816e 20.4%,#8a816e 25.3%,#8a816e 30.2%,#8a816e 35.2%,#8a816e 40.1%,#8a816e 45.1%,#8a816e 50.0%,#8a816e 54.9%,#8a816e 59.9%,#8a816e 64.8%,#8a816e 69.8%,#8a816e 74.7%,#8a816e 79.6%,#8a816e 84.6%,#8a816e 89.5%,#8a816e 94.4%,#8a816e 99.4%)"></div>
<div style="left:0px;top:92px;width:96px;height:4px;background:linear-gradient(90deg,#938465 0.5%,#938465 4.7%,#938465 8.9%,#938465 13.0%,#938465 17.2%,#938465 21.4%,#938465 25.5%,#938465 29.7%,#938465 33.9%,#938465 38.0%,#918366 42.2%,#8d8169 46.4%,#887f6e 50.5%,#847d70 54.7%,#837d71 58.9%,#837d71 63.0%,#837d71 67.2%,#837d71 71.4%,#837d71 75.5%,#837d71 79.7%,#837d71 83.9%,#837d71 88.0%,#817c70 92.2%,#7e786d 96.4%,#847e72 99.5%)"></div>
<div style="left:1199px;top:92px;width:81px;height:4px;background:linear-gradient(90deg,#8b826f 0.6%,#857c6a 5.6%,#887f6d 10.5%,#8a816e 15.4%,#8a816e 20.4%,#8a816e 25.3%,#8a816e 30.2%,#8a816e 35.2%,#8a816e 40.1%,#8a816e 45.1%,#8a816e 50.0%,#8a816e 54.9%,#8a816e 59.9%,#8a816e 64.8%,#8a816e 69.8%,#8a816e 74.7%,#8a816e 79.6%,#8a816e 84.6%,#8a816e 89.5%,#8a816e 94.4%,#8a816e 99.4%)"></div>
<div style="left:0px;top:96px;width:96px;height:4px;background:linear-gradient(90deg,#938465 0.5%,#938465 4.7%,#938465 8.9%,#938465 13.0%,#938465 17.2%,#938465 21.4%,#938465 25.5%,#938465 29.7%,#938465 33.9%,#938465 38.0%,#918366 42.2%,#8d8169 46.4%,#887f6e 50.5%,#847d70 54.7%,#837d71 58.9%,#837d71 63.0%,#837d71 67.2%,#837d71 71.4%,#837d71 75.5%,#837d71 79.7%,#837d71 83.9%,#837d71 88.0%,#817c70 92.2%,#7e786d 96.4%,#847e72 99.5%)"></div>
<div style="left:1199px;top:96px;width:81px;height:4px;background:linear-gradient(90deg,#8b8270 0.6%,#857c6b 5.6%,#887f6e 10.5%,#8a816f 15.4%,#8a816f 20.4%,#8a816f 25.3%,#8a816f 30.2%,#8a816f 35.2%,#8a816f 40.1%,#8a816f 45.1%,#8a816f 50.0%,#8a816f 54.9%,#8a816f 59.9%,#8a816f 64.8%,#8a816f 69.8%,#8a816f 74.7%,#8a816f 79.6%,#8a816f 84.6%,#8a816f 89.5%,#8a816f 94.4%,#8a816f 99.4%)"></div>
<div style="left:0px;top:100px;width:96px;height:4px;background:linear-gradient(90deg,#928365 0.5%,#928365 4.7%,#928365 8.9%,#928365 13.0%,#928365 17.2%,#928365 21.4%,#928365 25.5%,#928365 29.7%,#928365 33.9%,#928365 38.0%,#908266 42.2%,#8c8069 46.4%,#877e6d 50.5%,#837c6f 54.7%,#827c70 58.9%,#827c70 63.0%,#827c70 67.2%,#827c70 71.4%,#827c70 75.5%,#827c70 79.7%,#827c70 83.9%,#827c70 88.0%,#807b6f 92.2%,#7d776c 96.4%,#837d71 99.5%)"></div>
<div style="left:1199px;top:100px;width:81px;height:4px;background:linear-gradient(90deg,#8a8270 0.6%,#847c6b 5.6%,#877f6e 10.5%,#89816f 15.4%,#89816f 20.4%,#89816f 25.3%,#89816f 30.2%,#89816f 35.2%,#89816f 40.1%,#89816f 45.1%,#89816f 50.0%,#89816f 54.9%,#89816f 59.9%,#89816f 64.8%,#89816f 69.8%,#89816f 74.7%,#89816f 79.6%,#89816f 84.6%,#89816f 89.5%,#89816f 94.4%,#89816f 99.4%)"></div>
<div style="left:0px;top:104px;width:96px;height:4px;background:linear-gradient(90deg,#908266 0.5%,#908266 4.7%,#908266 8.9%,#908266 13.0%,#908266 17.2%,#908266 21.4%,#908266 25.5%,#908266 29.7%,#908266 33.9%,#908266 38.0%,#8f8267 42.2%,#8b806a 46.4%,#867e6d 50.5%,#837c6f 54.7%,#827c70 58.9%,#827c70 63.0%,#827c70 67.2%,#827c70 71.4%,#827c70 75.5%,#827c70 79.7%,#827c70 83.9%,#827c70 88.0%,#807b6f 92.2%,#7d776c 96.4%,#837d71 99.5%)"></div>
<div style="left:1199px;top:104px;width:81px;height:4px;background:linear-gradient(90deg,#8a8271 0.6%,#847c6c 5.6%,#877f6f 10.5%,#898170 15.4%,#898170 20.4%,#898170 25.3%,#898170 30.2%,#898170 35.2%,#898170 40.1%,#898170 45.1%,#898170 50.0%,#898170 54.9%,#898170 59.9%,#898170 64.8%,#898170 69.8%,#898170 74.7%,#898170 79.6%,#898170 84.6%,#898170 89.5%,#898170 94.4%,#898170 99.4%)"></div>
<div style="left:0px;top:108px;width:96px;height:4px;background:linear-gradient(90deg,#8e8166 0.5%,#8e8166 4.7%,#8e8166 8.9%,#8e8166 13.0%,#8e8166 17.2%,#8e8166 21.4%,#8e8166 25.5%,#8e8166 29.7%,#8e8166 33.9%,#8e8166 38.0%,#8d8167 42.2%,#8a7f6a 46.4%,#857d6d 50.5%,#837c6f 54.7%,#827c70 58.9%,#827c70 63.0%,#827c70 67.2%,#827c70 71.4%,#827c70 75.5%,#827c70 79.7%,#827c70 83.9%,#827c70 88.0%,#807b6f 92.2%,#7d776c 96.4%,#837d71 99.5%)"></div>
<div style="left:1199px;top:108px;width:81px;height:4px;background:linear-gradient(90deg,#8a8272 0.6%,#847c6d 5.6%,#877f70 10.5%,#898171 15.4%,#898171 20.4%,#898171 25.3%,#898171 30.2%,#898171 35.2%,#898171 40.1%,#898171 45.1%,#898171 50.0%,#898171 54.9%,#898171 59.9%,#898171 64.8%,#898171 69.8%,#898171 74.7%,#898171 79.6%,#898171 84.6%,#898171 89.5%,#898171 94.4%,#898171 99.4%)"></div>
<div style="left:0px;top:112px;width:96px;height:4px;background:linear-gradient(90deg,#8c8067 0.5%,#8c8067 4.7%,#8c8067 8.9%,#8c8067 13.0%,#8c8067 17.2%,#8c8067 21.4%,#8c8067 25.5%,#8c8067 29.7%,#8c8067 33.9%,#8c8067 38.0%,#8b8068 42.2%,#887f6a 46.4%,#857d6d 50.5%,#837c6f 54.7%,#827c70 58.9%,#827c70 63.0%,#827c70 67.2%,#827c70 71.4%,#827c70 75.5%,#827c70 79.7%,#827c70 83.9%,#827c70 88.0%,#807b6f 92.2%,#7d776c 96.4%,#837d71 99.5%)"></div>
<div style="left:1199px;top:112px;width:81px;height:4px;background:linear-gradient(90deg,#898172 0.6%,#837b6d 5.6%,#867e70 10.5%,#888071 15.4%,#888071 20.4%,#888071 25.3%,#888071 30.2%,#888071 35.2%,#888071 40.1%,#888071 45.1%,#888071 50.0%,#888071 54.9%,#888071 59.9%,#888071 64.8%,#888071 69.8%,#888071 74.7%,#888071 79.6%,#888071 84.6%,#888071 89.5%,#888071 94.4%,#888071 99.4%)"></div>
<div style="left:0px;top:116px;width:96px;height:4px;background:linear-gradient(90deg,#8a7f68 0.5%,#8a7f68 4.7%,#8a7f68 8.9%,#8a7f68 13.0%,#8a7f68 17.2%,#8a7f68 21.4%,#8a7f68 25.5%,#8a7f68 29.7%,#8a7f68 33.9%,#8a7f68 38.0%,#897f69 42.2%,#877e6b 46.4%,#847c6d 50.5%,#827b6f 54.7%,#817b6f 58.9%,#817b6f 63.0%,#817b6f 67.2%,#817b6f 71.4%,#817b6f 75.5%,#817b6f 79.7%,#817b6f 83.9%,#817b6f 88.0%,#7f7a6e 92.2%,#7c766b 96.4%,#827c70 99.5%)"></div>
<div style="left:1199px;top:116px;width:81px;height:4px;background:linear-gradient(90deg,#898172 0.6%,#837b6d 5.6%,#867e70 10.5%,#888071 15.4%,#888071 20.4%,#888071 25.3%,#888071 30.2%,#888071 35.2%,#888071 40.1%,#888071 45.1%,#888071 50.0%,#888071 54.9%,#888071 59.9%,#888071 64.8%,#888071 69.8%,#888071 74.7%,#888071 79.6%,#888071 84.6%,#888071 89.5%,#888071 94.4%,#888071 99.4%)"></div>
<div style="left:0px;top:120px;width:96px;height:4px;background:linear-gradient(90deg,#887e68 0.5%,#887e68 4.7%,#887e68 8.9%,#887e68 13.0%,#887e68 17.2%,#887e68 21.4%,#887e68 25.5%,#887e68 29.7%,#887e68 33.9%,#887e68 38.0%,#887e69 42.2%,#867d6b 46.4%,#837c6d 50.5%,#817b6f 54.7%,#817b6f 58.9%,#817b6f 63.0%,#817b6f 67.2%,#817b6f 71.4%,#817b6f 75.5%,#817b6f 79.7%,#817b6f 83.9%,#817b6f 88.0%,#7f7a6e 92.2%,#7c766b 96.4%,#827c70 99.5%)"></div>
<div style="left:1199px;top:120px;width:81px;height:4px;background:linear-gradient(90deg,#898172 0.6%,#837b6d 5.6%,#867e70 10.5%,#888071 15.4%,#888071 20.4%,#888071 25.3%,#888071 30.2%,#888071 35.2%,#888071 40.1%,#888071 45.1%,#888071 50.0%,#888071 54.9%,#888071 59.9%,#888071 64.8%,#888071 69.8%,#888071 74.7%,#888071 79.6%,#888071 84.6%,#888071 89.5%,#888071 94.4%,#888071 99.4%)"></div>
<div style="left:0px;top:124px;width:96px;height:4px;background:linear-gradient(90deg,#877d69 0.5%,#877d69 4.7%,#877d69 8.9%,#877d69 13.0%,#877d69 17.2%,#877d69 21.4%,#877d69 25.5%,#877d69 29.7%,#877d69 33.9%,#877d69 38.0%,#867d69 42.2%,#857c6b 46.4%,#837b6d 50.5%,#817b6f 54.7%,#817b6f 58.9%,#817b6f 63.0%,#817b6f 67.2%,#817b6f 71.4%,#817b6f 75.5%,#817b6f 79.7%,#817b6f 83.9%,#817b6f 88.0%,#7f7a6e 92.2%,#7c766b 96.4%,#827c70 99.5%)"></div>
<div style="left:1199px;top:124px;width:81px;height:4px;background:linear-gradient(90deg,#888172 0.6%,#827b6d 5.6%,#857e70 10.5%,#878071 15.4%,#878071 20.4%,#878071 25.3%,#878071 30.2%,#878071 35.2%,#878071 40.1%,#878071 45.1%,#878071 50.0%,#878071 54.9%,#878071 59.9%,#878071 64.8%,#878071 69.8%,#878071 74.7%,#878071 79.6%,#878071 84.6%,#878071 89.5%,#878071 94.4%,#878071 99.4%)"></div>
<div style="left:0px;top:128px;width:96px;height:4px;background:linear-gradient(90deg,#857c6a 0.5%,#857c6a 4.7%,#857c6a 8.9%,#857c6a 13.0%,#857c6a 17.2%,#857c6a 21.4%,#857c6a 25.5%,#857c6a 29.7%,#857c6a 33.9%,#857c6a 38.0%,#857c6a 42.2%,#837c6c 46.4%,#827b6e 50.5%,#817b6f 54.7%,#817b6f 58.9%,#817b6f 63.0%,#817b6f 67.2%,#817b6f 71.4%,#817b6f 75.5%,#817b6f 79.7%,#817b6f 83.9%,#817b6f 88.0%,#7f7a6e 92.2%,#7c766b 96.4%,#827c70 99.5%)"></div>
<div style="left:1199px;top:128px;width:81px;height:4px;background:linear-gradient(90deg,#888172 0.6%,#827b6d 5.6%,#857e70 10.5%,#878071 15.4%,#878071 20.4%,#878071 25.3%,#878071 30.2%,#878071 35.2%,#878071 40.1%,#878071 45.1%,#878071 50.0%,#878071 54.9%,#878071 59.9%,#878071 64.8%,#878071 69.8%,#878071 74.7%,#878071 79.6%,#878071 84.6%,#878071 89.5%,#878071 94.4%,#878071 99.4%)"></div>
<div style="left:0px;top:132px;width:96px;height:4px;background:linear-gradient(90deg,#837b6a 0.5%,#837b6a 4.7%,#837b6a 8.9%,#837b6a 13.0%,#837b6a 17.2%,#837b6a 21.4%,#837b6a 25.5%,#837b6a 29.7%,#837b6a 33.9%,#837b6a 38.0%,#837b6a 42.2%,#827b6c 46.4%,#817b6e 50.5%,#817b6f 54.7%,#817b6f 58.9%,#817b6f 63.0%,#817b6f 67.2%,#817b6f 71.4%,#817b6f 75.5%,#817b6f 79.7%,#817b6f 83.9%,#817b6f 88.0%,#7f7a6e 92.2%,#7c766b 96.4%,#827c70 99.5%)"></div>
<div style="left:1199px;top:132px;width:81px;height:4px;background:linear-gradient(90deg,#888172 0.6%,#827b6d 5.6%,#857e70 10.5%,#878071 15.4%,#878071 20.4%,#878071 25.3%,#878071 30.2%,#878071 35.2%,#878071 40.1%,#878071 45.1%,#878071 50.0%,#878071 54.9%,#878071 59.9%,#878071 64.8%,#878071 69.8%,#878071 74.7%,#878071 79.6%,#878071 84.6%,#878071 89.5%,#878071 94.4%,#878071 99.4%)"></div>
<div style="left:0px;top:136px;width:96px;height:4px;background:linear-gradient(90deg,#80796b 0.5%,#80796b 4.7%,#80796b 8.9%,#80796b 13.0%,#80796b 17.2%,#80796b 21.4%,#80796b 25.5%,#80796b 29.7%,#80796b 33.9%,#80796b 38.0%,#80796b 42.2%,#817a6c 46.4%,#817b6e 50.5%,#817b6f 54.7%,#817b6f 58.9%,#817b6f 63.0%,#817b6f 67.2%,#817b6f 71.4%,#817b6f 75.5%,#817b6f 79.7%,#817b6f 83.9%,#817b6f 88.0%,#7f7a6e 92.2%,#7c766b 96.4%,#827c70 99.5%)"></div>
<div style="left:1199px;top:136px;width:81px;height:4px;background:linear-gradient(90deg,#878073 0.6%,#817a6e 5.6%,#847e71 10.5%,#867f72 15.4%,#867f72 20.4%,#867f72 25.3%,#867f72 30.2%,#867f72 35.2%,#867f72 40.1%,#867f72 45.1%,#867f72 50.0%,#867f72 54.9%,#867f72 59.9%,#867f72 64.8%,#867f72 69.8%,#867f72 74.7%,#867f72 79.6%,#867f72 84.6%,#867f72 89.5%,#867f72 94.4%,#867f72 99.4%)"></div>
<div style="left:0px;top:140px;width:96px;height:4px;background:linear-gradient(90deg,#7d776c 0.5%,#7d776c 4.7%,#7d776c 8.9%,#7d776c 13.0%,#7d776c 17.2%,#7d776c 21.4%,#7d776c 25.5%,#7d776c 29.7%,#7d776c 33.9%,#7d776c 38.0%,#7d786c 42.2%,#7f796d 46.4%,#817b6e 50.5%,#827c6f 54.7%,#827c6f 58.9%,#827c6f 63.0%,#827c6f 67.2%,#827c6f 71.4%,#827c6f 75.5%,#827c6f 79.7%,#827c6f 83.9%,#827c6f 88.0%,#807b6e 92.2%,#7d776b 96.4%,#837d70 99.5%)"></div>
<div style="left:1199px;top:140px;width:81px;height:4px;background:linear-gradient(90deg,#878073 0.6%,#817a6e 5.6%,#847e71 10.5%,#867f72 15.4%,#867f72 20.4%,#867f72 25.3%,#867f72 30.2%,#867f72 35.2%,#867f72 40.1%,#867f72 45.1%,#867f72 50.0%,#867f72 54.9%,#867f72 59.9%,#867f72 64.8%,#867f72 69.8%,#867f72 74.7%,#867f72 79.6%,#867f72 84.6%,#867f72 89.5%,#867f72 94.4%,#867f72 99.4%)"></div>
<div style="left:0px;top:144px;width:96px;height:4px;background:linear-gradient(90deg,#7a756d 0.5%,#7a756d 4.7%,#7a756d 8.9%,#7a756d 13.0%,#7a756d 17.2%,#7a756d 21.4%,#7a756d 25.5%,#7a756d 29.7%,#7a756d 33.9%,#7a756d 38.0%,#7b766d 42.2%,#7d786e 46.4%,#817b6f 50.5%,#837d6f 54.7%,#837d6f 58.9%,#837d6f 63.0%,#837d6f 67.2%,#837d6f 71.4%,#837d6f 75.5%,#837d6f 79.7%,#837d6f 83.9%,#837d6f 88.0%,#817c6e 92.2%,#7e786b 96.4%,#847e70 99.5%)"></div>
<div style="left:1199px;top:144px;width:81px;height:4px;background:linear-gradient(90deg,#878073 0.6%,#817a6e 5.6%,#847e71 10.5%,#867f72 15.4%,#867f72 20.4%,#867f72 25.3%,#867f72 30.2%,#867f72 35.2%,#867f72 40.1%,#867f72 45.1%,#867f72 50.0%,#867f72 54.9%,#867f72 59.9%,#867f72 64.8%,#867f72 69.8%,#867f72 74.7%,#867f72 79.6%,#867f72 84.6%,#867f72 89.5%,#867f72 94.4%,#867f72 99.4%)"></div>
<div style="left:0px;top:148px;width:96px;height:4px;background:linear-gradient(90deg,#78746d 0.5%,#78746d 4.7%,#78746d 8.9%,#78746d 13.0%,#78746d 17.2%,#78746d 21.4%,#78746d 25.5%,#78746d 29.7%,#78746d 33.9%,#78746d 38.0%,#78756d 42.2%,#7c786e 46.4%,#817c6f 50.5%,#847e6f 54.7%,#857f6f 58.9%,#857f6f 63.0%,#857f6f 67.2%,#857f6f 71.4%,#857f6f 75.5%,#857f6f 79.7%,#857f6f 83.9%,#857f6f 88.0%,#837e6e 92.2%,#807a6b 96.4%,#868070 99.5%)"></div>
<div style="left:1199px;top:148px;width:81px;height:4px;background:linear-gradient(90deg,#868073 0.6%,#807a6e 5.6%,#837e71 10.5%,#857f72 15.4%,#857f72 20.4%,#857f72 25.3%,#857f72 30.2%,#857f72 35.2%,#857f72 40.1%,#857f72 45.1%,#857f72 50.0%,#857f72 54.9%,#857f72 59.9%,#857f72 64.8%,#857f72 69.8%,#857f72 74.7%,#857f72 79.6%,#857f72 84.6%,#857f72 89.5%,#857f72 94.4%,#857f72 99.4%)"></div>
<div style="left:0px;top:152px;width:96px;height:4px;background:linear-gradient(90deg,#76736d 0.5%,#76736d 4.7%,#76736d 8.9%,#76736d 13.0%,#76736d 17.2%,#76736d 21.4%,#76736d 25.5%,#76736d 29.7%,#76736d 33.9%,#76736d 38.0%,#77746d 42.2%,#7b776d 46.4%,#817c6e 50.5%,#847e6e 54.7%,#857f6e 58.9%,#857f6e 63.0%,#857f6e 67.2%,#857f6e 71.4%,#857f6e 75.5%,#857f6e 79.7%,#857f6e 83.9%,#857f6e 88.0%,#837e6d 92.2%,#807a6a 96.4%,#86806f 99.5%)"></div>
<div style="left:1199px;top:152px;width:81px;height:4px;background:linear-gradient(90deg,#868073 0.6%,#807a6e 5.6%,#837e71 10.5%,#857f72 15.4%,#857f72 20.4%,#857f72 25.3%,#857f72 30.2%,#857f72 35.2%,#857f72 40.1%,#857f72 45.1%,#857f72 50.0%,#857f72 54.9%,#857f72 59.9%,#857f72 64.8%,#857f72 69.8%,#857f72 74.7%,#857f72 79.6%,#857f72 84.6%,#857f72 89.5%,#857f72 94.4%,#857f72 99.4%)"></div>
<div style="left:0px;top:156px;width:96px;height:4px;background:linear-gradient(90deg,#76736d 0.5%,#76736d 4.7%,#76736d 8.9%,#76736d 13.0%,#76736d 17.2%,#76736d 21.4%,#76736d 25.5%,#76736d 29.7%,#76736d 33.9%,#76736d 38.0%,#77746d 42.2%,#7b776d 46.4%,#817c6e 50.5%,#847e6e 54.7%,#857f6e 58.9%,#857f6e 63.0%,#857f6e 67.2%,#857f6e 71.4%,#857f6e 75.5%,#857f6e 79.7%,#857f6e 83.9%,#857f6e 88.0%,#837e6d 92.2%,#807a6a 96.4%,#86806f 99.5%)"></div>
<div style="left:1199px;top:156px;width:81px;height:4px;background:linear-gradient(90deg,#868073 0.6%,#807a6e 5.6%,#837e71 10.5%,#857f72 15.4%,#857f72 20.4%,#857f72 25.3%,#857f72 30.2%,#857f72 35.2%,#857f72 40.1%,#857f72 45.1%,#857f72 50.0%,#857f72 54.9%,#857f72 59.9%,#857f72 64.8%,#857f72 69.8%,#857f72 74.7%,#857f72 79.6%,#857f72 84.6%,#857f72 89.5%,#857f72 94.4%,#857f72 99.4%)"></div>
<div style="left:0px;top:160px;width:96px;height:4px;background:linear-gradient(90deg,#76736d 0.5%,#76736d 4.7%,#76736d 8.9%,#76736d 13.0%,#76736d 17.2%,#76736d 21.4%,#76736d 25.5%,#76736d 29.7%,#76736d 33.9%,#76736d 38.0%,#77746d 42.2%,#7b776d 46.4%,#817c6e 50.5%,#847e6e 54.7%,#857f6e 58.9%,#857f6e 63.0%,#857f6e 67.2%,#857f6e 71.4%,#857f6e 75.5%,#857f6e 79.7%,#857f6e 83.9%,#857f6e 88.0%,#837e6d 92.2%,#807a6a 96.4%,#86806f 99.5%)"></div>
<div style="left:1199px;top:160px;width:81px;height:4px;background:linear-gradient(90deg,#868073 0.6%,#807a6e 5.6%,#837e71 10.5%,#857f72 15.4%,#857f72 20.4%,#857f72 25.3%,#857f72 30.2%,#857f72 35.2%,#857f72 40.1%,#857f72 45.1%,#857f72 50.0%,#857f72 54.9%,#857f72 59.9%,#857f72 64.8%,#857f72 69.8%,#857f72 74.7%,#857f72 79.6%,#857f72 84.6%,#857f72 89.5%,#857f72 94.4%,#857f72 99.4%)"></div>
<div style="left:0px;top:164px;width:96px;height:4px;background:linear-gradient(90deg,#75726d 0.5%,#75726d 4.7%,#75726d 8.9%,#75726d 13.0%,#75726d 17.2%,#75726d 21.4%,#75726d 25.5%,#75726d 29.7%,#75726d 33.9%,#75726d 38.0%,#77736d 42.2%,#7b776d 46.4%,#817b6e 50.5%,#857e6e 54.7%,#867f6e 58.9%,#867f6e 63.0%,#867f6e 67.2%,#867f6e 71.4%,#867f6e 75.5%,#867f6e 79.7%,#867f6e 83.9%,#867f6e 88.0%,#847e6d 92.2%,#817a6a 96.4%,#87806f 99.5%)"></div>
<div style="left:1199px;top:164px;width:81px;height:4px;background:linear-gradient(90deg,#868073 0.6%,#807a6e 5.6%,#837e71 10.5%,#857f72 15.4%,#857f72 20.4%,#857f72 25.3%,#857f72 30.2%,#857f72 35.2%,#857f72 40.1%,#857f72 45.1%,#857f72 50.0%,#857f72 54.9%,#857f72 59.9%,#857f72 64.8%,#857f72 69.8%,#857f72 74.7%,#857f72 79.6%,#857f72 84.6%,#857f72 89.5%,#857f72 94.4%,#857f72 99.4%)"></div>
<div style="left:0px;top:168px;width:96px;height:4px;background:linear-gradient(90deg,#75726c 0.5%,#75726c 4.7%,#75726c 8.9%,#75726c 13.0%,#75726c 17.2%,#75726c 21.4%,#75726c 25.5%,#75726c 29.7%,#75726c 33.9%,#75726c 38.0%,#77736c 42.2%,#7b776d 46.4%,#817b6e 50.5%,#857e6e 54.7%,#867f6e 58.9%,#867f6e 63.0%,#867f6e 67.2%,#867f6e 71.4%,#867f6e 75.5%,#867f6e 79.7%,#867f6e 83.9%,#867f6e 88.0%,#847e6d 92.2%,#817a6a 96.4%,#87806f 99.5%)"></div>
<div style="left:1199px;top:168px;width:81px;height:4px;background:linear-gradient(90deg,#868073 0.6%,#807a6e 5.6%,#837e71 10.5%,#857f72 15.4%,#857f72 20.4%,#857f72 25.3%,#857f72 30.2%,#857f72 35.2%,#857f72 40.1%,#857f72 45.1%,#857f72 50.0%,#857f72 54.9%,#857f72 59.9%,#857f72 64.8%,#857f72 69.8%,#857f72 74.7%,#857f72 79.6%,#857f72 84.6%,#857f72 89.5%,#857f72 94.4%,#857f72 99.4%)"></div>
<div style="left:0px;top:172px;width:96px;height:4px;background:linear-gradient(90deg,#75726c 0.5%,#75726c 4.7%,#75726c 8.9%,#75726c 13.0%,#75726c 17.2%,#75726c 21.4%,#75726c 25.5%,#75726c 29.7%,#75726c 33.9%,#75726c 38.0%,#77736c 42.2%,#7b776d 46.4%,#817b6e 50.5%,#857e6e 54.7%,#867f6e 58.9%,#867f6e 63.0%,#867f6e 67.2%,#867f6e 71.4%,#867f6e 75.5%,#867f6e 79.7%,#867f6e 83.9%,#867f6e 88.0%,#847e6d 92.2%,#817a6a 96.4%,#87806f 99.5%)"></div>
<div style="left:1199px;top:172px;width:81px;height:4px;background:linear-gradient(90deg,#868073 0.6%,#807a6e 5.6%,#837e71 10.5%,#857f72 15.4%,#857f72 20.4%,#857f72 25.3%,#857f72 30.2%,#857f72 35.2%,#857f72 40.1%,#857f72 45.1%,#857f72 50.0%,#857f72 54.9%,#857f72 59.9%,#857f72 64.8%,#857f72 69.8%,#857f72 74.7%,#857f72 79.6%,#857f72 84.6%,#857f72 89.5%,#857f72 94.4%,#857f72 99.4%)"></div>
<div style="left:0px;top:176px;width:96px;height:4px;background:linear-gradient(90deg,#74716c 0.5%,#74716c 4.7%,#74716c 8.9%,#74716c 13.0%,#74716c 17.2%,#74716c 21.4%,#74716c 25.5%,#74716c 29.7%,#74716c 33.9%,#74716c 38.0%,#76726c 42.2%,#7b766c 46.4%,#827c6d 50.5%,#867f6d 54.7%,#87806d 58.9%,#87806d 63.0%,#87806d 67.2%,#87806d 71.4%,#87806d 75.5%,#87806d 79.7%,#87806d 83.9%,#87806d 88.0%,#857e6c 92.2%,#827b69 96.4%,#88816e 99.5%)"></div>
<div style="left:1199px;top:176px;width:81px;height:4px;background:linear-gradient(90deg,#878073 0.6%,#817a6e 5.6%,#847e71 10.5%,#867f72 15.4%,#867f72 20.4%,#867f72 25.3%,#867f72 30.2%,#867f72 35.2%,#867f72 40.1%,#867f72 45.1%,#867f72 50.0%,#867f72 54.9%,#867f72 59.9%,#867f72 64.8%,#867f72 69.8%,#867f72 74.7%,#867f72 79.6%,#867f72 84.6%,#867f72 89.5%,#867f72 94.4%,#867f72 99.4%)"></div>
<div style="left:0px;top:180px;width:96px;height:4px;background:linear-gradient(90deg,#74716c 0.5%,#74716c 4.7%,#74716c 8.9%,#74716c 13.0%,#74716c 17.2%,#74716c 21.4%,#74716c 25.5%,#74716c 29.7%,#74716c 33.9%,#74716c 38.0%,#76726c 42.2%,#7b766c 46.4%,#827c6d 50.5%,#867f6d 54.7%,#87806d 58.9%,#87806d 63.0%,#87806d 67.2%,#87806d 71.4%,#87806d 75.5%,#87806d 79.7%,#87806d 83.9%,#87806d 88.0%,#857e6c 92.2%,#827b69 96.4%,#88816e 99.5%)"></div>
<div style="left:1199px;top:180px;width:81px;height:4px;background:linear-gradient(90deg,#878073 0.6%,#817a6e 5.6%,#847e71 10.5%,#867f72 15.4%,#867f72 20.4%,#867f72 25.3%,#867f72 30.2%,#867f72 35.2%,#867f72 40.1%,#867f72 45.1%,#867f72 50.0%,#867f72 54.9%,#867f72 59.9%,#867f72 64.8%,#867f72 69.8%,#867f72 74.7%,#867f72 79.6%,#867f72 84.6%,#867f72 89.5%,#867f72 94.4%,#867f72 99.4%)"></div>
<div style="left:0px;top:184px;width:96px;height:4px;background:linear-gradient(90deg,#74716b 0.5%,#74716b 4.7%,#74716b 8.9%,#74716b 13.0%,#74716b 17.2%,#74716b 21.4%,#74716b 25.5%,#74716b 29.7%,#74716b 33.9%,#74716b 38.0%,#76726b 42.2%,#7b766c 46.4%,#827c6d 50.5%,#867f6d 54.7%,#87806d 58.9%,#87806d 63.0%,#87806d 67.2%,#87806d 71.4%,#87806d 75.5%,#87806d 79.7%,#87806d 83.9%,#87806d 88.0%,#857e6c 92.2%,#827b69 96.4%,#88816e 99.5%)"></div>
<div style="left:1199px;top:184px;width:81px;height:4px;background:linear-gradient(90deg,#878073 0.6%,#817a6e 5.6%,#847e71 10.5%,#867f72 15.4%,#867f72 20.4%,#867f72 25.3%,#867f72 30.2%,#867f72 35.2%,#867f72 40.1%,#867f72 45.1%,#867f72 50.0%,#867f72 54.9%,#867f72 59.9%,#867f72 64.8%,#867f72 69.8%,#867f72 74.7%,#867f72 79.6%,#867f72 84.6%,#867f72 89.5%,#867f72 94.4%,#867f72 99.4%)"></div>
<div style="left:0px;top:188px;width:96px;height:4px;background:linear-gradient(90deg,#73706b 0.5%,#73706b 4.7%,#73706b 8.9%,#73706b 13.0%,#73706b 17.2%,#73706b 21.4%,#73706b 25.5%,#73706b 29.7%,#73706b 33.9%,#73706b 38.0%,#75726b 42.2%,#7b766c 46.4%,#827b6d 50.5%,#877f6d 54.7%,#88806d 58.9%,#88806d 63.0%,#88806d 67.2%,#88806d 71.4%,#88806d 75.5%,#88806d 79.7%,#88806d 83.9%,#88806d 88.0%,#867e6c 92.2%,#837b69 96.4%,#89816e 99.5%)"></div>
<div style="left:1199px;top:188px;width:81px;height:4px;background:linear-gradient(90deg,#888173 0.6%,#827b6e 5.6%,#857e71 10.5%,#878072 15.4%,#878072 20.4%,#878072 25.3%,#878072 30.2%,#878072 35.2%,#878072 40.1%,#878072 45.1%,#878072 50.0%,#878072 54.9%,#878072 59.9%,#878072 64.8%,#878072 69.8%,#878072 74.7%,#878072 79.6%,#878072 84.6%,#878072 89.5%,#878072 94.4%,#878072 99.4%)"></div>
<div style="left:0px;top:192px;width:96px;height:4px;background:linear-gradient(90deg,#73706b 0.5%,#73706b 4.7%,#73706b 8.9%,#73706b 13.0%,#73706b 17.2%,#73706b 21.4%,#73706b 25.5%,#73706b 29.7%,#73706b 33.9%,#73706b 38.0%,#75726b 42.2%,#7b766c 46.4%,#827b6d 50.5%,#877f6d 54.7%,#88806d 58.9%,#88806d 63.0%,#88806d 67.2%,#88806d 71.4%,#88806d 75.5%,#88806d 79.7%,#88806d 83.9%,#88806d 88.0%,#867e6c 92.2%,#837b69 96.4%,#89816e 99.5%)"></div>
<div style="left:1199px;top:192px;width:81px;height:4px;background:linear-gradient(90deg,#888172 0.6%,#827b6d 5.6%,#857e70 10.5%,#878071 15.4%,#878071 20.4%,#878071 25.3%,#878071 30.2%,#878071 35.2%,#878071 40.1%,#878071 45.1%,#878071 50.0%,#878071 54.9%,#878071 59.9%,#878071 64.8%,#878071 69.8%,#878071 74.7%,#878071 79.6%,#878071 84.6%,#878071 89.5%,#878071 94.4%,#878071 99.4%)"></div>
<div style="left:0px;top:196px;width:96px;height:4px;background:linear-gradient(90deg,#73706b 0.5%,#73706b 4.7%,#73706b 8.9%,#73706b 13.0%,#73706b 17.2%,#73706b 21.4%,#73706b 25.5%,#73706b 29.7%,#73706b 33.9%,#73706b 38.0%,#75726b 42.2%,#7b766c 46.4%,#827b6d 50.5%,#877f6d 54.7%,#88806d 58.9%,#88806d 63.0%,#88806d 67.2%,#88806d 71.4%,#88806d 75.5%,#88806d 79.7%,#88806d 83.9%,#88806d 88.0%,#867e6c 92.2%,#837b69 96.4%,#89816e 99.5%)"></div>
<div style="left:1199px;top:196px;width:81px;height:4px;background:linear-gradient(90deg,#888172 0.6%,#827b6d 5.6%,#857e70 10.5%,#878071 15.4%,#878071 20.4%,#878071 25.3%,#878071 30.2%,#878071 35.2%,#878071 40.1%,#878071 45.1%,#878071 50.0%,#878071 54.9%,#878071 59.9%,#878071 64.8%,#878071 69.8%,#878071 74.7%,#878071 79.6%,#878071 84.6%,#878071 89.5%,#878071 94.4%,#878071 99.4%)"></div>
<div style="left:0px;top:200px;width:96px;height:4px;background:linear-gradient(90deg,#736f6a 0.5%,#736f6a 4.7%,#736f6a 8.9%,#736f6a 13.0%,#736f6a 17.2%,#736f6a 21.4%,#736f6a 25.5%,#736f6a 29.7%,#736f6a 33.9%,#736f6a 38.0%,#75716a 42.2%,#7b756b 46.4%,#827b6c 50.5%,#877f6d 54.7%,#88806d 58.9%,#88806d 63.0%,#88806d 67.2%,#88806d 71.4%,#88806d 75.5%,#88806d 79.7%,#88806d 83.9%,#88806d 88.0%,#867e6c 92.2%,#837b69 96.4%,#89816e 99.5%)"></div>
<div style="left:1199px;top:200px;width:81px;height:4px;background:linear-gradient(90deg,#888172 0.6%,#827b6d 5.6%,#857e70 10.5%,#878071 15.4%,#878071 20.4%,#878071 25.3%,#878071 30.2%,#878071 35.2%,#878071 40.1%,#878071 45.1%,#878071 50.0%,#878071 54.9%,#878071 59.9%,#878071 64.8%,#878071 69.8%,#878071 74.7%,#878071 79.6%,#878071 84.6%,#878071 89.5%,#878071 94.4%,#878071 99.4%)"></div>
<div style="left:0px;top:204px;width:96px;height:4px;background:linear-gradient(90deg,#736f6a 0.5%,#736f6a 4.7%,#736f6a 8.9%,#736f6a 13.0%,#736f6a 17.2%,#736f6a 21.4%,#736f6a 25.5%,#736f6a 29.7%,#736f6a 33.9%,#736f6a 38.0%,#75716a 42.2%,#7b756b 46.4%,#827b6c 50.5%,#877f6d 54.7%,#88806d 58.9%,#88806d 63.0%,#88806d 67.2%,#88806d 71.4%,#88806d 75.5%,#88806d 79.7%,#88806d 83.9%,#88806d 88.0%,#867e6c 92.2%,#837b69 96.4%,#89816e 99.5%)"></div>
<div style="left:1199px;top:204px;width:81px;height:4px;background:linear-gradient(90deg,#898172 0.6%,#837b6d 5.6%,#867e70 10.5%,#888071 15.4%,#888071 20.4%,#888071 25.3%,#888071 30.2%,#888071 35.2%,#888071 40.1%,#888071 45.1%,#888071 50.0%,#888071 54.9%,#888071 59.9%,#888071 64.8%,#888071 69.8%,#888071 74.7%,#888071 79.6%,#888071 84.6%,#888071 89.5%,#888071 94.4%,#888071 99.4%)"></div>
<div style="left:0px;top:208px;width:96px;height:4px;background:linear-gradient(90deg,#736f6a 0.5%,#736f6a 4.7%,#736f6a 8.9%,#736f6a 13.0%,#736f6a 17.2%,#736f6a 21.4%,#736f6a 25.5%,#736f6a 29.7%,#736f6a 33.9%,#736f6a 38.0%,#75716a 42.2%,#7b756b 46.4%,#827b6c 50.5%,#877f6d 54.7%,#88806d 58.9%,#88806d 63.0%,#88806d 67.2%,#88806d 71.4%,#88806d 75.5%,#88806d 79.7%,#88806d 83.9%,#88806d 88.0%,#867e6c 92.2%,#837b69 96.4%,#89816e 99.5%)"></div>
<div style="left:1199px;top:208px;width:81px;height:4px;background:linear-gradient(90deg,#898172 0.6%,#837b6d 5.6%,#867e70 10.5%,#888071 15.4%,#888071 20.4%,#888071 25.3%,#888071 30.2%,#888071 35.2%,#888071 40.1%,#888071 45.1%,#888071 50.0%,#888071 54.9%,#888071 59.9%,#888071 64.8%,#888071 69.8%,#888071 74.7%,#888071 79.6%,#888071 84.6%,#888071 89.5%,#888071 94.4%,#888071 99.4%)"></div>
<div style="left:0px;top:212px;width:96px;height:4px;background:linear-gradient(90deg,#736f6a 0.5%,#736f6a 4.7%,#736f6a 8.9%,#736f6a 13.0%,#736f6a 17.2%,#736f6a 21.4%,#736f6a 25.5%,#736f6a 29.7%,#736f6a 33.9%,#736f6a 38.0%,#75716a 42.2%,#7b756b 46.4%,#827b6c 50.5%,#877f6d 54.7%,#88806d 58.9%,#88806d 63.0%,#88806d 67.2%,#88806d 71.4%,#88806d 75.5%,#88806d 79.7%,#88806d 83.9%,#88806d 88.0%,#867e6c 92.2%,#837b69 96.4%,#89816e 99.5%)"></div>
<div style="left:1199px;top:212px;width:81px;height:4px;background:linear-gradient(90deg,#898172 0.6%,#837b6d 5.6%,#867e70 10.5%,#888071 15.4%,#888071 20.4%,#888071 25.3%,#888071 30.2%,#888071 35.2%,#888071 40.1%,#888071 45.1%,#888071 50.0%,#888071 54.9%,#888071 59.9%,#888071 64.8%,#888071 69.8%,#888071 74.7%,#888071 79.6%,#888071 84.6%,#888071 89.5%,#888071 94.4%,#888071 99.4%)"></div>
<div style="left:0px;top:216px;width:96px;height:4px;background:linear-gradient(90deg,#736f6a 0.5%,#736f6a 4.7%,#736f6a 8.9%,#736f6a 13.0%,#736f6a 17.2%,#736f6a 21.4%,#736f6a 25.5%,#736f6a 29.7%,#736f6a 33.9%,#736f6a 38.0%,#75716a 42.2%,#7a756b 46.4%,#817b6c 50.5%,#867f6d 54.7%,#87806d 58.9%,#87806d 63.0%,#87806d 67.2%,#87806d 71.4%,#87806d 75.5%,#87806d 79.7%,#87806d 83.9%,#87806d 88.0%,#857e6c 92.2%,#827b69 96.4%,#88816e 99.5%)"></div>
<div style="left:1199px;top:216px;width:81px;height:4px;background:linear-gradient(90deg,#898172 0.6%,#837b6d 5.6%,#867e70 10.5%,#888071 15.4%,#888071 20.4%,#888071 25.3%,#888071 30.2%,#888071 35.2%,#888071 40.1%,#888071 45.1%,#888071 50.0%,#888071 54.9%,#888071 59.9%,#888071 64.8%,#888071 69.8%,#888071 74.7%,#888071 79.6%,#888071 84.6%,#888071 89.5%,#888071 94.4%,#888071 99.4%)"></div>
<div style="left:0px;top:220px;width:96px;height:4px;background:linear-gradient(90deg,#736f6a 0.5%,#736f6a 4.7%,#736f6a 8.9%,#736f6a 13.0%,#736f6a 17.2%,#736f6a 21.4%,#736f6a 25.5%,#736f6a 29.7%,#736f6a 33.9%,#736f6a 38.0%,#75716a 42.2%,#7a756b 46.4%,#817a6c 50.5%,#867e6d 54.7%,#877f6d 58.9%,#877f6d 63.0%,#877f6d 67.2%,#877f6d 71.4%,#877f6d 75.5%,#877f6d 79.7%,#877f6d 83.9%,#877f6d 88.0%,#857e6c 92.2%,#827a69 96.4%,#88806e 99.5%)"></div>
<div style="left:1199px;top:220px;width:81px;height:4px;background:linear-gradient(90deg,#898172 0.6%,#837b6d 5.6%,#867e70 10.5%,#888071 15.4%,#888071 20.4%,#888071 25.3%,#888071 30.2%,#888071 35.2%,#888071 40.1%,#888071 45.1%,#888071 50.0%,#888071 54.9%,#888071 59.9%,#888071 64.8%,#888071 69.8%,#888071 74.7%,#888071 79.6%,#888071 84.6%,#888071 89.5%,#888071 94.4%,#888071 99.4%)"></div>
<div style="left:0px;top:224px;width:96px;height:4px;background:linear-gradient(90deg,#736f6a 0.5%,#736f6a 4.7%,#736f6a 8.9%,#736f6a 13.0%,#736f6a 17.2%,#736f6a 21.4%,#736f6a 25.5%,#736f6a 29.7%,#736f6a 33.9%,#736f6a 38.0%,#75716a 42.2%,#7a756b 46.4%,#817a6c 50.5%,#867e6d 54.7%,#877f6d 58.9%,#877f6d 63.0%,#877f6d 67.2%,#877f6d 71.4%,#877f6d 75.5%,#877f6d 79.7%,#877f6d 83.9%,#877f6d 88.0%,#857e6c 92.2%,#827a69 96.4%,#88806e 99.5%)"></div>
<div style="left:1199px;top:224px;width:81px;height:4px;background:linear-gradient(90deg,#898172 0.6%,#837b6d 5.6%,#867e70 10.5%,#888071 15.4%,#888071 20.4%,#888071 25.3%,#888071 30.2%,#888071 35.2%,#888071 40.1%,#888071 45.1%,#888071 50.0%,#888071 54.9%,#888071 59.9%,#888071 64.8%,#888071 69.8%,#888071 74.7%,#888071 79.6%,#888071 84.6%,#888071 89.5%,#888071 94.4%,#888071 99.4%)"></div>
<div style="left:0px;top:228px;width:96px;height:4px;background:linear-gradient(90deg,#736f6a 0.5%,#736f6a 4.7%,#736f6a 8.9%,#736f6a 13.0%,#736f6a 17.2%,#736f6a 21.4%,#736f6a 25.5%,#736f6a 29.7%,#736f6a 33.9%,#736f6a 38.0%,#75716a 42.2%,#7a756b 46.4%,#817a6c 50.5%,#867e6d 54.7%,#877f6d 58.9%,#877f6d 63.0%,#877f6d 67.2%,#877f6d 71.4%,#877f6d 75.5%,#877f6d 79.7%,#877f6d 83.9%,#877f6d 88.0%,#857e6c 92.2%,#827a69 96.4%,#88806e 99.5%)"></div>
<div style="left:1199px;top:228px;width:81px;height:4px;background:linear-gradient(90deg,#898173 0.6%,#837b6e 5.6%,#867e71 10.5%,#888072 15.4%,#888072 20.4%,#888072 25.3%,#888072 30.2%,#888072 35.2%,#888072 40.1%,#888072 45.1%,#888072 50.0%,#888072 54.9%,#888072 59.9%,#888072 64.8%,#888072 69.8%,#888072 74.7%,#888072 79.6%,#888072 84.6%,#888072 89.5%,#888072 94.4%,#888072 99.4%)"></div>
<div style="left:0px;top:232px;width:96px;height:4px;background:linear-gradient(90deg,#736f69 0.5%,#736f69 4.7%,#736f69 8.9%,#736f69 13.0%,#736f69 17.2%,#736f69 21.4%,#736f69 25.5%,#736f69 29.7%,#736f69 33.9%,#736f69 38.0%,#757169 42.2%,#7a756a 46.4%,#817a6c 50.5%,#857e6d 54.7%,#867f6d 58.9%,#867f6d 63.0%,#867f6d 67.2%,#867f6d 71.4%,#867f6d 75.5%,#867f6d 79.7%,#867f6d 83.9%,#867f6d 88.0%,#847e6c 92.2%,#817a69 96.4%,#87806e 99.5%)"></div>
<div style="left:1199px;top:232px;width:81px;height:4px;background:linear-gradient(90deg,#888173 0.6%,#827b6e 5.6%,#857e71 10.5%,#878072 15.4%,#878072 20.4%,#878072 25.3%,#878072 30.2%,#878072 35.2%,#878072 40.1%,#878072 45.1%,#878072 50.0%,#878072 54.9%,#878072 59.9%,#878072 64.8%,#878072 69.8%,#878072 74.7%,#878072 79.6%,#878072 84.6%,#878072 89.5%,#878072 94.4%,#878072 99.4%)"></div>
<div style="left:0px;top:236px;width:96px;height:4px;background:linear-gradient(90deg,#736f69 0.5%,#736f69 4.7%,#736f69 8.9%,#736f69 13.0%,#736f69 17.2%,#736f69 21.4%,#736f69 25.5%,#736f69 29.7%,#736f69 33.9%,#736f69 38.0%,#757169 42.2%,#7a756a 46.4%,#817a6c 50.5%,#857e6d 54.7%,#867f6d 58.9%,#867f6d 63.0%,#867f6d 67.2%,#867f6d 71.4%,#867f6d 75.5%,#867f6d 79.7%,#867f6d 83.9%,#867f6d 88.0%,#847e6c 92.2%,#817a69 96.4%,#87806e 99.5%)"></div>
<div style="left:1199px;top:236px;width:81px;height:4px;background:linear-gradient(90deg,#888173 0.6%,#827b6e 5.6%,#857e71 10.5%,#878072 15.4%,#878072 20.4%,#878072 25.3%,#878072 30.2%,#878072 35.2%,#878072 40.1%,#878072 45.1%,#878072 50.0%,#878072 54.9%,#878072 59.9%,#878072 64.8%,#878072 69.8%,#878072 74.7%,#878072 79.6%,#878072 84.6%,#878072 89.5%,#878072 94.4%,#878072 99.4%)"></div>
<div style="left:0px;top:240px;width:96px;height:4px;background:linear-gradient(90deg,#736f69 0.5%,#736f69 4.7%,#736f69 8.9%,#736f69 13.0%,#736f69 17.2%,#736f69 21.4%,#736f69 25.5%,#736f69 29.7%,#736f69 33.9%,#736f69 38.0%,#757069 42.2%,#7a746a 46.4%,#817a6c 50.5%,#857d6d 54.7%,#867e6d 58.9%,#867e6d 63.0%,#867e6d 67.2%,#867e6d 71.4%,#867e6d 75.5%,#867e6d 79.7%,#867e6d 83.9%,#867e6d 88.0%,#847d6c 92.2%,#817969 96.4%,#877f6e 99.5%)"></div>
<div style="left:1199px;top:240px;width:81px;height:4px;background:linear-gradient(90deg,#878074 0.6%,#817a6f 5.6%,#847e72 10.5%,#867f73 15.4%,#867f73 20.4%,#867f73 25.3%,#867f73 30.2%,#867f73 35.2%,#867f73 40.1%,#867f73 45.1%,#867f73 50.0%,#867f73 54.9%,#867f73 59.9%,#867f73 64.8%,#867f73 69.8%,#867f73 74.7%,#867f73 79.6%,#867f73 84.6%,#867f73 89.5%,#867f73 94.4%,#867f73 99.4%)"></div>
<div style="left:0px;top:244px;width:96px;height:4px;background:linear-gradient(90deg,#736f69 0.5%,#736f69 4.7%,#736f69 8.9%,#736f69 13.0%,#736f69 17.2%,#736f69 21.4%,#736f69 25.5%,#736f69 29.7%,#736f69 33.9%,#736f69 38.0%,#757069 42.2%,#7a746a 46.4%,#807a6c 50.5%,#847d6d 54.7%,#857e6d 58.9%,#857e6d 63.0%,#857e6d 67.2%,#857e6d 71.4%,#857e6d 75.5%,#857e6d 79.7%,#857e6d 83.9%,#857e6d 88.0%,#837d6c 92.2%,#807969 96.4%,#867f6e 99.5%)"></div>
<div style="left:1199px;top:244px;width:81px;height:4px;background:linear-gradient(90deg,#878074 0.6%,#817a6f 5.6%,#847e72 10.5%,#867f73 15.4%,#867f73 20.4%,#867f73 25.3%,#867f73 30.2%,#867f73 35.2%,#867f73 40.1%,#867f73 45.1%,#867f73 50.0%,#867f73 54.9%,#867f73 59.9%,#867f73 64.8%,#867f73 69.8%,#867f73 74.7%,#867f73 79.6%,#867f73 84.6%,#867f73 89.5%,#867f73 94.4%,#867f73 99.4%)"></div>
<div style="left:0px;top:248px;width:96px;height:4px;background:linear-gradient(90deg,#736f69 0.5%,#736f69 4.7%,#736f69 8.9%,#736f69 13.0%,#736f69 17.2%,#736f69 21.4%,#736f69 25.5%,#736f69 29.7%,#736f69 33.9%,#736f69 38.0%,#757069 42.2%,#7a746a 46.4%,#807a6c 50.5%,#847d6d 54.7%,#857e6d 58.9%,#857e6d 63.0%,#857e6d 67.2%,#857e6d 71.4%,#857e6d 75.5%,#857e6d 79.7%,#857e6d 83.9%,#857e6d 88.0%,#837d6c 92.2%,#807969 96.4%,#867f6e 99.5%)"></div>
<div style="left:1199px;top:248px;width:81px;height:4px;background:linear-gradient(90deg,#878075 0.6%,#817a70 5.6%,#847e73 10.5%,#867f74 15.4%,#867f74 20.4%,#867f74 25.3%,#867f74 30.2%,#867f74 35.2%,#867f74 40.1%,#867f74 45.1%,#867f74 50.0%,#867f74 54.9%,#867f74 59.9%,#867f74 64.8%,#867f74 69.8%,#867f74 74.7%,#867f74 79.6%,#867f74 84.6%,#867f74 89.5%,#867f74 94.4%,#867f74 99.4%)"></div>
<div style="left:0px;top:252px;width:96px;height:4px;background:linear-gradient(90deg,#736f69 0.5%,#736f69 4.7%,#736f69 8.9%,#736f69 13.0%,#736f69 17.2%,#736f69 21.4%,#736f69 25.5%,#736f69 29.7%,#736f69 33.9%,#736f69 38.0%,#757069 42.2%,#7a746a 46.4%,#807a6c 50.5%,#847d6d 54.7%,#857e6d 58.9%,#857e6d 63.0%,#857e6d 67.2%,#857e6d 71.4%,#857e6d 75.5%,#857e6d 79.7%,#857e6d 83.9%,#857e6d 88.0%,#837d6c 92.2%,#807969 96.4%,#867f6e 99.5%)"></div>
<div style="left:1199px;top:252px;width:81px;height:4px;background:linear-gradient(90deg,#868075 0.6%,#807a70 5.6%,#837e73 10.5%,#857f74 15.4%,#857f74 20.4%,#857f74 25.3%,#857f74 30.2%,#857f74 35.2%,#857f74 40.1%,#857f74 45.1%,#857f74 50.0%,#857f74 54.9%,#857f74 59.9%,#857f74 64.8%,#857f74 69.8%,#857f74 74.7%,#857f74 79.6%,#857f74 84.6%,#857f74 89.5%,#857f74 94.4%,#857f74 99.4%)"></div>
<div style="left:0px;top:256px;width:96px;height:4px;background:linear-gradient(90deg,#736f69 0.5%,#736f69 4.7%,#736f69 8.9%,#736f69 13.0%,#736f69 17.2%,#736f69 21.4%,#736f69 25.5%,#736f69 29.7%,#736f69 33.9%,#736f69 38.0%,#757069 42.2%,#7a746a 46.4%,#807a6c 50.5%,#847d6d 54.7%,#857e6d 58.9%,#857e6d 63.0%,#857e6d 67.2%,#857e6d 71.4%,#857e6d 75.5%,#857e6d 79.7%,#857e6d 83.9%,#857e6d 88.0%,#837d6c 92.2%,#807969 96.4%,#867f6e 99.5%)"></div>
<div style="left:1199px;top:256px;width:81px;height:4px;background:linear-gradient(90deg,#868075 0.6%,#807a70 5.6%,#837e73 10.5%,#857f74 15.4%,#857f74 20.4%,#857f74 25.3%,#857f74 30.2%,#857f74 35.2%,#857f74 40.1%,#857f74 45.1%,#857f74 50.0%,#857f74 54.9%,#857f74 59.9%,#857f74 64.8%,#857f74 69.8%,#857f74 74.7%,#857f74 79.6%,#857f74 84.6%,#857f74 89.5%,#857f74 94.4%,#857f74 99.4%)"></div>
<div style="left:0px;top:260px;width:96px;height:4px;background:linear-gradient(90deg,#726e68 0.5%,#726e68 4.7%,#726e68 8.9%,#726e68 13.0%,#726e68 17.2%,#726e68 21.4%,#726e68 25.5%,#726e68 29.7%,#726e68 33.9%,#726e68 38.0%,#746f68 42.2%,#797369 46.4%,#7f796b 50.5%,#837c6c 54.7%,#847d6c 58.9%,#847d6c 63.0%,#847d6c 67.2%,#847d6c 71.4%,#847d6c 75.5%,#847d6c 79.7%,#847d6c 83.9%,#847d6c 88.0%,#827c6b 92.2%,#7f7868 96.4%,#857e6d 99.5%)"></div>
<div style="left:1199px;top:260px;width:81px;height:4px;background:linear-gradient(90deg,#868076 0.6%,#807a70 5.6%,#837e74 10.5%,#857f75 15.4%,#857f75 20.4%,#857f75 25.3%,#857f75 30.2%,#857f75 35.2%,#857f75 40.1%,#857f75 45.1%,#857f75 50.0%,#857f75 54.9%,#857f75 59.9%,#857f75 64.8%,#857f75 69.8%,#857f75 74.7%,#857f75 79.6%,#857f75 84.6%,#857f75 89.5%,#857f75 94.4%,#857f75 99.4%)"></div>
<div style="left:0px;top:264px;width:96px;height:4px;background:linear-gradient(90deg,#726e68 0.5%,#726e68 4.7%,#726e68 8.9%,#726e68 13.0%,#726e68 17.2%,#726e68 21.4%,#726e68 25.5%,#726e68 29.7%,#726e68 33.9%,#726e68 38.0%,#746f68 42.2%,#787369 46.4%,#7d776b 50.5%,#817a6c 54.7%,#827b6c 58.9%,#827b6c 63.0%,#827b6c 67.2%,#827b6c 71.4%,#827b6c 75.5%,#827b6c 79.7%,#827b6c 83.9%,#827b6c 88.0%,#807a6b 92.2%,#7d7668 96.4%,#837c6d 99.5%)"></div>
<div style="left:1199px;top:264px;width:81px;height:4px;background:linear-gradient(90deg,#868076 0.6%,#807a70 5.6%,#837e74 10.5%,#857f75 15.4%,#857f75 20.4%,#857f75 25.3%,#857f75 30.2%,#857f75 35.2%,#857f75 40.1%,#857f75 45.1%,#857f75 50.0%,#857f75 54.9%,#857f75 59.9%,#857f75 64.8%,#857f75 69.8%,#857f75 74.7%,#857f75 79.6%,#857f75 84.6%,#857f75 89.5%,#857f75 94.4%,#857f75 99.4%)"></div>
<div style="left:0px;top:268px;width:96px;height:4px;background:linear-gradient(90deg,#726e67 0.5%,#726e67 4.7%,#726e67 8.9%,#726e67 13.0%,#726e67 17.2%,#726e67 21.4%,#726e67 25.5%,#726e67 29.7%,#726e67 33.9%,#726e67 38.0%,#736f67 42.2%,#777268 46.4%,#7c776a 50.5%,#80796b 54.7%,#817a6b 58.9%,#817a6b 63.0%,#817a6b 67.2%,#817a6b 71.4%,#817a6b 75.5%,#817a6b 79.7%,#817a6b 83.9%,#817a6b 88.0%,#7f796a 92.2%,#7c7567 96.4%,#827b6c 99.5%)"></div>
<div style="left:1199px;top:268px;width:81px;height:4px;background:linear-gradient(90deg,#878177 0.6%,#817b71 5.6%,#847e75 10.5%,#868076 15.4%,#868076 20.4%,#868076 25.3%,#868076 30.2%,#868076 35.2%,#868076 40.1%,#868076 45.1%,#868076 50.0%,#868076 54.9%,#868076 59.9%,#868076 64.8%,#868076 69.8%,#868076 74.7%,#868076 79.6%,#868076 84.6%,#868076 89.5%,#868076 94.4%,#868076 99.4%)"></div>
<div style="left:0px;top:272px;width:96px;height:4px;background:linear-gradient(90deg,#716d67 0.5%,#716d67 4.7%,#716d67 8.9%,#716d67 13.0%,#716d67 17.2%,#716d67 21.4%,#716d67 25.5%,#716d67 29.7%,#716d67 33.9%,#716d67 38.0%,#726e67 42.2%,#767168 46.4%,#7b7669 50.5%,#7e786a 54.7%,#7f796a 58.9%,#7f796a 63.0%,#7f796a 67.2%,#7f796a 71.4%,#7f796a 75.5%,#7f796a 79.7%,#7f796a 83.9%,#7f796a 88.0%,#7e7869 92.2%,#7a7466 96.4%,#807a6b 99.5%)"></div>
<div style="left:1199px;top:272px;width:81px;height:4px;background:linear-gradient(90deg,#878177 0.6%,#817b71 5.6%,#847e75 10.5%,#868076 15.4%,#868076 20.4%,#868076 25.3%,#868076 30.2%,#868076 35.2%,#868076 40.1%,#868076 45.1%,#868076 50.0%,#868076 54.9%,#868076 59.9%,#868076 64.8%,#868076 69.8%,#868076 74.7%,#868076 79.6%,#868076 84.6%,#868076 89.5%,#868076 94.4%,#868076 99.4%)"></div>
<div style="left:0px;top:276px;width:96px;height:4px;background:linear-gradient(90deg,#716d66 0.5%,#716d66 4.7%,#716d66 8.9%,#716d66 13.0%,#716d66 17.2%,#716d66 21.4%,#716d66 25.5%,#716d66 29.7%,#716d66 33.9%,#716d66 38.0%,#726e66 42.2%,#757167 46.4%,#7a7469 50.5%,#7c766a 54.7%,#7d776a 58.9%,#7d776a 63.0%,#7d776a 67.2%,#7d776a 71.4%,#7d776a 75.5%,#7d776a 79.7%,#7d776a 83.9%,#7d776a 88.0%,#7c7669 92.2%,#787266 96.4%,#7e786b 99.5%)"></div>
<div style="left:1199px;top:276px;width:81px;height:4px;background:linear-gradient(90deg,#878177 0.6%,#817b71 5.6%,#847e75 10.5%,#868076 15.4%,#868076 20.4%,#868076 25.3%,#868076 30.2%,#868076 35.2%,#868076 40.1%,#868076 45.1%,#868076 50.0%,#868076 54.9%,#868076 59.9%,#868076 64.8%,#868076 69.8%,#868076 74.7%,#868076 79.6%,#868076 84.6%,#868076 89.5%,#868076 94.4%,#868076 99.4%)"></div>
<div style="left:0px;top:280px;width:96px;height:4px;background:linear-gradient(90deg,#706c66 0.5%,#706c66 4.7%,#706c66 8.9%,#706c66 13.0%,#706c66 17.2%,#706c66 21.4%,#706c66 25.5%,#706c66 29.7%,#706c66 33.9%,#706c66 38.0%,#716d66 42.2%,#747067 46.4%,#797368 50.5%,#7b7569 54.7%,#7c7669 58.9%,#7c7669 63.0%,#7c7669 67.2%,#7c7669 71.4%,#7c7669 75.5%,#7c7669 79.7%,#7c7669 83.9%,#7c7669 88.0%,#7b7568 92.2%,#777165 96.4%,#7d776a 99.5%)"></div>
<div style="left:1199px;top:280px;width:81px;height:4px;background:linear-gradient(90deg,#888278 0.6%,#827c72 5.6%,#857f76 10.5%,#878177 15.4%,#878177 20.4%,#878177 25.3%,#878177 30.2%,#878177 35.2%,#878177 40.1%,#878177 45.1%,#878177 50.0%,#878177 54.9%,#878177 59.9%,#878177 64.8%,#878177 69.8%,#878177 74.7%,#878177 79.6%,#878177 84.6%,#878177 89.5%,#878177 94.4%,#878177 99.4%)"></div>
<div style="left:0px;top:284px;width:96px;height:4px;background:linear-gradient(90deg,#706c65 0.5%,#706c65 4.7%,#706c65 8.9%,#706c65 13.0%,#706c65 17.2%,#706c65 21.4%,#706c65 25.5%,#706c65 29.7%,#706c65 33.9%,#706c65 38.0%,#716d65 42.2%,#746f66 46.4%,#777268 50.5%,#797469 54.7%,#7a7469 58.9%,#7a7469 63.0%,#7a7469 67.2%,#7a7469 71.4%,#7a7469 75.5%,#7a7469 79.7%,#7a7469 83.9%,#7a7469 88.0%,#797368 92.2%,#757065 96.4%,#7b756a 99.5%)"></div>
<div style="left:1199px;top:284px;width:81px;height:4px;background:linear-gradient(90deg,#888278 0.6%,#827c72 5.6%,#857f76 10.5%,#878177 15.4%,#878177 20.4%,#878177 25.3%,#878177 30.2%,#878177 35.2%,#878177 40.1%,#878177 45.1%,#878177 50.0%,#878177 54.9%,#878177 59.9%,#878177 64.8%,#878177 69.8%,#878177 74.7%,#878177 79.6%,#878177 84.6%,#878177 89.5%,#878177 94.4%,#878177 99.4%)"></div>
<div style="left:0px;top:288px;width:96px;height:4px;background:linear-gradient(90deg,#706c65 0.5%,#706c65 4.7%,#706c65 8.9%,#706c65 13.0%,#706c65 17.2%,#706c65 21.4%,#706c65 25.5%,#706c65 29.7%,#706c65 33.9%,#706c65 38.0%,#716d65 42.2%,#736f66 46.4%,#767167 50.5%,#787368 54.7%,#797368 58.9%,#797368 63.0%,#797368 67.2%,#797368 71.4%,#797368 75.5%,#797368 79.7%,#797368 83.9%,#797368 88.0%,#787267 92.2%,#746f64 96.4%,#7a7469 99.5%)"></div>
<div style="left:1199px;top:288px;width:81px;height:4px;background:linear-gradient(90deg,#837c72 0.6%,#7d766d 5.6%,#807a70 10.5%,#827b71 15.4%,#827b71 20.4%,#827b71 25.3%,#827b71 30.2%,#827b71 35.2%,#827b71 40.1%,#827b71 45.1%,#837c72 50.0%,#857e74 54.9%,#868076 59.9%,#878177 64.8%,#888278 69.8%,#888278 74.7%,#888278 79.6%,#888278 84.6%,#888278 89.5%,#888278 94.4%,#888278 99.4%)"></div>
<div style="left:0px;top:292px;width:96px;height:4px;background:linear-gradient(90deg,#6f6b64 0.5%,#6f6b64 4.7%,#6f6b64 8.9%,#6f6b64 13.0%,#6f6b64 17.2%,#6f6b64 21.4%,#6f6b64 25.5%,#6f6b64 29.7%,#6f6b64 33.9%,#6f6b64 38.0%,#706c64 42.2%,#726e65 46.4%,#757066 50.5%,#777267 54.7%,#777267 58.9%,#777267 63.0%,#777267 67.2%,#777267 71.4%,#777267 75.5%,#777267 79.7%,#777267 83.9%,#777267 88.0%,#767166 92.2%,#726e63 96.4%,#787368 99.5%)"></div>
<div style="left:1199px;top:292px;width:81px;height:4px;background:linear-gradient(90deg,#746a5f 0.6%,#6f655a 5.6%,#72685d 10.5%,#73695e 15.4%,#73695e 20.4%,#73695e 25.3%,#73695e 30.2%,#73695e 35.2%,#73695e 40.1%,#73695e 45.1%,#756c61 50.0%,#7c7369 54.9%,#837c72 59.9%,#878177 64.8%,#888278 69.8%,#888278 74.7%,#888278 79.6%,#888278 84.6%,#888278 89.5%,#888278 94.4%,#888278 99.4%)"></div>
<div style="left:0px;top:296px;width:96px;height:4px;background:linear-gradient(90deg,#6f6b64 0.5%,#6f6b64 4.7%,#6f6b64 8.9%,#6f6b64 13.0%,#6f6b64 17.2%,#6f6b64 21.4%,#6f6b64 25.5%,#6f6b64 29.7%,#6f6b64 33.9%,#6f6b64 38.0%,#6f6b64 42.2%,#716d65 46.4%,#736f66 50.5%,#757067 54.7%,#757067 58.9%,#757067 63.0%,#757067 67.2%,#757067 71.4%,#757067 75.5%,#757067 79.7%,#757067 83.9%,#757067 88.0%,#746f66 92.2%,#706c63 96.4%,#767168 99.5%)"></div>
<div style="left:1199px;top:296px;width:81px;height:4px;background:linear-gradient(90deg,#5e5145 0.6%,#5a4d42 5.6%,#5c4f43 10.5%,#5d5044 15.4%,#5d5044 20.4%,#5d5044 25.3%,#5d5044 30.2%,#5d5044 35.2%,#5d5044 40.1%,#5e5044 45.1%,#62554a 50.0%,#6e6358 54.9%,#7d756a 59.9%,#868076 64.8%,#888278 69.8%,#888278 74.7%,#888278 79.6%,#888278 84.6%,#888278 89.5%,#888278 94.4%,#888278 99.4%)"></div>
<div style="left:0px;top:300px;width:96px;height:4px;background:linear-gradient(90deg,#6e6a63 0.5%,#6e6a63 4.7%,#6e6a63 8.9%,#6e6a63 13.0%,#6e6a63 17.2%,#6e6a63 21.4%,#6e6a63 25.5%,#6e6a63 29.7%,#6e6a63 33.9%,#6e6a63 38.0%,#6e6a63 42.2%,#706b64 46.4%,#726d65 50.5%,#736e66 54.7%,#736e66 58.9%,#736e66 63.0%,#736e66 67.2%,#736e66 71.4%,#736e66 75.5%,#736e66 79.7%,#736e66 83.9%,#736e66 88.0%,#726d65 92.2%,#6f6a62 96.4%,#746f67 99.5%)"></div>
<div style="left:1199px;top:300px;width:81px;height:4px;background:linear-gradient(90deg,#514236 0.6%,#4d3f33 5.6%,#4f4035 10.5%,#504135 15.4%,#504135 20.4%,#504135 25.3%,#504135 30.2%,#504135 35.2%,#504135 40.1%,#504135 45.1%,#54463a 50.0%,#63564b 54.9%,#776e63 59.9%,#857e74 64.8%,#898379 69.8%,#898379 74.7%,#898379 79.6%,#898379 84.6%,#898379 89.5%,#898379 94.4%,#898379 99.4%)"></div>
<div style="left:0px;top:304px;width:96px;height:4px;background:linear-gradient(90deg,#6c6861 0.5%,#6c6861 4.7%,#6c6861 8.9%,#6c6861 13.0%,#6c6861 17.2%,#6c6861 21.4%,#6c6861 25.5%,#6c6861 29.7%,#6c6861 33.9%,#6c6861 38.0%,#6c6861 42.2%,#6e6962 46.4%,#706b63 50.5%,#716c64 54.7%,#716c64 58.9%,#716c64 63.0%,#716c64 67.2%,#716c64 71.4%,#716c64 75.5%,#716c64 79.7%,#716c64 83.9%,#716c64 88.0%,#706b63 92.2%,#6d6860 96.4%,#726d65 99.5%)"></div>
<div style="left:1199px;top:304px;width:81px;height:4px;background:linear-gradient(90deg,#4e3e32 0.6%,#4a3b2f 5.6%,#4c3d31 10.5%,#4d3d31 15.4%,#4d3d31 20.4%,#4d3d31 25.3%,#4d3d31 30.2%,#4d3d31 35.2%,#4d3d31 40.1%,#4d3d31 45.1%,#504135 50.0%,#5d4f43 54.9%,#72685d 59.9%,#837c71 64.8%,#898378 69.8%,#898379 74.7%,#898379 79.6%,#898379 84.6%,#898379 89.5%,#898379 94.4%,#898379 99.4%)"></div>
<div style="left:0px;top:308px;width:96px;height:4px;background:linear-gradient(90deg,#6b6760 0.5%,#6b6760 4.7%,#6b6760 8.9%,#6b6760 13.0%,#6b6760 17.2%,#6b6760 21.4%,#6b6760 25.5%,#6b6760 29.7%,#6b6760 33.9%,#6b6760 38.0%,#6b6760 42.2%,#6c6861 46.4%,#6e6962 50.5%,#6f6a62 54.7%,#6f6a62 58.9%,#6f6a62 63.0%,#6f6a62 67.2%,#6f6a62 71.4%,#6f6a62 75.5%,#6f6a62 79.7%,#6f6a62 83.9%,#6f6a62 88.0%,#6e6961 92.2%,#6b665e 96.4%,#706b63 99.5%)"></div>
<div style="left:1199px;top:308px;width:81px;height:4px;background:linear-gradient(90deg,#4e3e32 0.6%,#4a3b2f 5.6%,#4c3d31 10.5%,#4d3d31 15.4%,#4d3d31 20.4%,#4d3d31 25.3%,#4d3d31 30.2%,#4d3d31 35.2%,#4d3d31 40.1%,#4d3d31 45.1%,#4f3f33 50.0%,#594b3f 54.9%,#6d6358 59.9%,#80786e 64.8%,#888278 69.8%,#898379 74.7%,#898379 79.6%,#898379 84.6%,#898379 89.5%,#898379 94.4%,#898379 99.4%)"></div>
<div style="left:0px;top:312px;width:96px;height:4px;background:linear-gradient(90deg,#69655e 0.5%,#69655e 4.7%,#69655e 8.9%,#69655e 13.0%,#69655e 17.2%,#69655e 21.4%,#69655e 25.5%,#69655e 29.7%,#69655e 33.9%,#69655e 38.0%,#69655e 42.2%,#6a665f 46.4%,#6c6760 50.5%,#6d6860 54.7%,#6d6860 58.9%,#6d6860 63.0%,#6d6860 67.2%,#6d6860 71.4%,#6d6860 75.5%,#6d6860 79.7%,#6d6860 83.9%,#6d6860 88.0%,#6c675f 92.2%,#69645c 96.4%,#6e6961 99.5%)"></div>
<div style="left:1199px;top:312px;width:81px;height:4px;background:linear-gradient(90deg,#4e3e32 0.6%,#4a3b2f 5.6%,#4c3d31 10.5%,#4d3d31 15.4%,#4d3d31 20.4%,#4d3d31 25.3%,#4d3d31 30.2%,#4d3d31 35.2%,#4d3d31 40.1%,#4d3d31 45.1%,#4e3e32 50.0%,#55473b 54.9%,#685d52 59.9%,#7d756a 64.8%,#878177 69.8%,#898379 74.7%,#898379 79.6%,#898379 84.6%,#898379 89.5%,#898379 94.4%,#898379 99.4%)"></div>
<div style="left:0px;top:316px;width:96px;height:4px;background:linear-gradient(90deg,#67635d 0.5%,#67635d 4.7%,#67635d 8.9%,#67635d 13.0%,#67635d 17.2%,#67635d 21.4%,#67635d 25.5%,#67635d 29.7%,#67635d 33.9%,#67635d 38.0%,#67635d 42.2%,#68645d 46.4%,#69655e 50.5%,#6a665e 54.7%,#6a665e 58.9%,#6a665e 63.0%,#6a665e 67.2%,#6a665e 71.4%,#6a665e 75.5%,#6a665e 79.7%,#6a665e 83.9%,#6a665e 88.0%,#69655d 92.2%,#66625a 96.4%,#6b675f 99.5%)"></div>
<div style="left:1199px;top:316px;width:81px;height:4px;background:linear-gradient(90deg,#4e3e32 0.6%,#4a3b2f 5.6%,#4c3d31 10.5%,#4d3d31 15.4%,#4d3d31 20.4%,#4d3d31 25.3%,#4d3d31 30.2%,#4d3d31 35.2%,#4d3d31 40.1%,#4d3d31 45.1%,#4d3d31 50.0%,#534438 54.9%,#64584c 59.9%,#797166 64.8%,#867f75 69.8%,#898379 74.7%,#898379 79.6%,#898379 84.6%,#898379 89.5%,#898379 94.4%,#898379 99.4%)"></div>
<div style="left:0px;top:320px;width:96px;height:4px;background:linear-gradient(90deg,#66625b 0.5%,#66625b 4.7%,#66625b 8.9%,#66625b 13.0%,#66625b 17.2%,#66625b 21.4%,#66625b 25.5%,#66625b 29.7%,#66625b 33.9%,#66625b 38.0%,#66625b 42.2%,#67635b 46.4%,#68645c 50.5%,#68645c 54.7%,#68645c 58.9%,#68645c 63.0%,#68645c 67.2%,#68645c 71.4%,#68645c 75.5%,#68645c 79.7%,#68645c 83.9%,#68645c 88.0%,#67635b 92.2%,#646059 96.4%,#69655d 99.5%)"></div>
<div style="left:1199px;top:320px;width:81px;height:4px;background:linear-gradient(90deg,#4e3e32 0.6%,#4a3b2f 5.6%,#4c3d31 10.5%,#4d3d31 15.4%,#4d3d31 20.4%,#4d3d31 25.3%,#4d3d31 30.2%,#4d3d31 35.2%,#4d3d31 40.1%,#4d3d31 45.1%,#4d3d31 50.0%,#514236 54.9%,#605247 59.9%,#756c61 64.8%,#847d73 69.8%,#898379 74.7%,#898379 79.6%,#898379 84.6%,#898379 89.5%,#898379 94.4%,#898379 99.4%)"></div>
<div style="left:0px;top:324px;width:96px;height:4px;background:linear-gradient(90deg,#64605a 0.5%,#64605a 4.7%,#64605a 8.9%,#64605a 13.0%,#64605a 17.2%,#64605a 21.4%,#64605a 25.5%,#64605a 29.7%,#64605a 33.9%,#64605a 38.0%,#64605a 42.2%,#65605a 46.4%,#66615b 50.5%,#66615b 54.7%,#66615b 58.9%,#66615b 63.0%,#66615b 67.2%,#66615b 71.4%,#66615b 75.5%,#66615b 79.7%,#66615b 83.9%,#66615b 88.0%,#65605a 92.2%,#625d58 96.4%,#67625c 99.5%)"></div>
<div style="left:1199px;top:324px;width:81px;height:4px;background:linear-gradient(90deg,#4e3e32 0.6%,#4a3b2f 5.6%,#4c3d31 10.5%,#4d3d31 15.4%,#4d3d31 20.4%,#4d3d31 25.3%,#4d3d31 30.2%,#4d3d31 35.2%,#4d3d31 40.1%,#4d3d31 45.1%,#4d3d31 50.0%,#4f4034 54.9%,#5b4d41 59.9%,#70665b 64.8%,#827b70 69.8%,#888278 74.7%,#898379 79.6%,#898379 84.6%,#898379 89.5%,#898379 94.4%,#898379 99.4%)"></div>
<div style="left:0px;top:328px;width:96px;height:4px;background:linear-gradient(90deg,#635f58 0.5%,#635f58 4.7%,#635f58 8.9%,#635f58 13.0%,#635f58 17.2%,#635f58 21.4%,#635f58 25.5%,#635f58 29.7%,#635f58 33.9%,#635f58 38.0%,#635f58 42.2%,#635f58 46.4%,#635f59 50.5%,#635f59 54.7%,#635f59 58.9%,#635f59 63.0%,#635f59 67.2%,#635f59 71.4%,#635f59 75.5%,#635f59 79.7%,#635f59 83.9%,#635f59 88.0%,#625e58 92.2%,#5f5b56 96.4%,#64605a 99.5%)"></div>
<div style="left:1199px;top:328px;width:81px;height:4px;background:linear-gradient(90deg,#4e3e32 0.6%,#4a3b2f 5.6%,#4c3d31 10.5%,#4d3d31 15.4%,#4d3d31 20.4%,#4d3d31 25.3%,#4d3d31 30.2%,#4d3d31 35.2%,#4d3d31 40.1%,#4d3d31 45.1%,#4d3d31 50.0%,#4f3f33 54.9%,#57493d 59.9%,#6b6055 64.8%,#7f776d 69.8%,#888278 74.7%,#898379 79.6%,#898379 84.6%,#898379 89.5%,#898379 94.4%,#898379 99.4%)"></div>
<div style="left:0px;top:332px;width:96px;height:4px;background:linear-gradient(90deg,#615d57 0.5%,#615d57 4.7%,#615d57 8.9%,#615d57 13.0%,#615d57 17.2%,#615d57 21.4%,#615d57 25.5%,#615d57 29.7%,#615d57 33.9%,#615d57 38.0%,#615d57 42.2%,#615d57 46.4%,#615d57 50.5%,#615d57 54.7%,#615d57 58.9%,#615d57 63.0%,#615d57 67.2%,#615d57 71.4%,#615d57 75.5%,#615d57 79.7%,#615d57 83.9%,#615d57 88.0%,#605c56 92.2%,#5d5a54 96.4%,#625e58 99.5%)"></div>
<div style="left:1199px;top:332px;width:81px;height:4px;background:linear-gradient(90deg,#4e3e32 0.6%,#4a3b2f 5.6%,#4c3d31 10.5%,#4d3d31 15.4%,#4d3d31 20.4%,#4d3d31 25.3%,#4d3d31 30.2%,#4d3d31 35.2%,#4d3d31 40.1%,#4d3d31 45.1%,#4d3d31 50.0%,#4e3e32 54.9%,#54463a 59.9%,#665b50 64.8%,#7b7369 69.8%,#878076 74.7%,#898379 79.6%,#898379 84.6%,#898379 89.5%,#898379 94.4%,#898379 99.4%)"></div>
<div style="left:0px;top:336px;width:96px;height:4px;background:linear-gradient(90deg,#5f5c56 0.5%,#5f5c56 4.7%,#5f5c56 8.9%,#5f5c56 13.0%,#5f5c56 17.2%,#5f5c56 21.4%,#5f5c56 25.5%,#5f5c56 29.7%,#5f5c56 33.9%,#5f5c56 38.0%,#5f5c56 42.2%,#5f5c56 46.4%,#5f5c56 50.5%,#5f5c56 54.7%,#5f5c56 58.9%,#5f5c56 63.0%,#5f5c56 67.2%,#5f5c56 71.4%,#5f5c56 75.5%,#5f5c56 79.7%,#5f5c56 83.9%,#5f5c56 88.0%,#5e5b55 92.2%,#5b5953 96.4%,#605d57 99.5%)"></div>
<div style="left:1199px;top:336px;width:81px;height:4px;background:linear-gradient(90deg,#4e3e32 0.6%,#4a3b2f 5.6%,#4c3d31 10.5%,#4d3d31 15.4%,#4d3d31 20.4%,#4d3d31 25.3%,#4d3d31 30.2%,#4d3d31 35.2%,#4d3d31 40.1%,#4d3d31 45.1%,#4d3d31 50.0%,#4d3d31 54.9%,#524337 59.9%,#62554a 64.8%,#776e64 69.8%,#857e74 74.7%,#898379 79.6%,#898379 84.6%,#898379 89.5%,#898379 94.4%,#898379 99.4%)"></div>
<div style="left:0px;top:340px;width:96px;height:4px;background:linear-gradient(90deg,#5e5a54 0.5%,#5e5a54 4.7%,#5e5a54 8.9%,#5e5a54 13.0%,#5e5a54 17.2%,#5e5a54 21.4%,#5e5a54 25.5%,#5e5a54 29.7%,#5e5a54 33.9%,#5e5a54 38.0%,#5e5a54 42.2%,#5e5a54 46.4%,#5e5a54 50.5%,#5e5a54 54.7%,#5e5a54 58.9%,#5e5a54 63.0%,#5e5a54 67.2%,#5e5a54 71.4%,#5e5a54 75.5%,#5e5a54 79.7%,#5e5a54 83.9%,#5e5a54 88.0%,#5d5953 92.2%,#5a5751 96.4%,#5f5b55 99.5%)"></div>
<div style="left:1199px;top:340px;width:81px;height:4px;background:linear-gradient(90deg,#4e3e32 0.6%,#4a3b2f 5.6%,#4c3d31 10.5%,#4d3d31 15.4%,#4d3d31 20.4%,#4d3d31 25.3%,#4d3d31 30.2%,#4d3d31 35.2%,#4d3d31 40.1%,#4d3d31 45.1%,#4d3d31 50.0%,#4d3d31 54.9%,#504135 59.9%,#5d5044 64.8%,#72695e 69.8%,#837c72 74.7%,#898378 79.6%,#898379 84.6%,#898379 89.5%,#898379 94.4%,#898379 99.4%)"></div>
<div style="left:0px;top:344px;width:96px;height:4px;background:linear-gradient(90deg,#5d5953 0.5%,#5d5953 4.7%,#5d5953 8.9%,#5d5953 13.0%,#5d5953 17.2%,#5d5953 21.4%,#5d5953 25.5%,#5d5953 29.7%,#5d5953 33.9%,#5d5953 38.0%,#5d5953 42.2%,#5d5953 46.4%,#5d5953 50.5%,#5d5953 54.7%,#5d5953 58.9%,#5d5953 63.0%,#5d5953 67.2%,#5d5953 71.4%,#5d5953 75.5%,#5d5953 79.7%,#5d5953 83.9%,#5d5953 88.0%,#5c5852 92.2%,#5a5650 96.4%,#5e5a54 99.5%)"></div>
<div style="left:1199px;top:344px;width:81px;height:4px;background:linear-gradient(90deg,#4e3e32 0.6%,#4a3b2f 5.6%,#4c3d31 10.5%,#4d3d31 15.4%,#4d3d31 20.4%,#4d3d31 25.3%,#4d3d31 30.2%,#4d3d31 35.2%,#4d3d31 40.1%,#4d3d31 45.1%,#4d3d31 50.0%,#4d3d31 54.9%,#4f3f33 59.9%,#594b40 64.8%,#6e6358 69.8%,#81796f 74.7%,#888277 79.6%,#898378 84.6%,#898378 89.5%,#898378 94.4%,#898378 99.4%)"></div>
<div style="left:0px;top:348px;width:96px;height:4px;background:linear-gradient(90deg,#5b5852 0.5%,#5b5852 4.7%,#5b5852 8.9%,#5b5852 13.0%,#5b5852 17.2%,#5b5852 21.4%,#5b5852 25.5%,#5b5852 29.7%,#5b5852 33.9%,#5b5852 38.0%,#5b5852 42.2%,#5b5852 46.4%,#5b5852 50.5%,#5b5852 54.7%,#5b5852 58.9%,#5b5852 63.0%,#5b5852 67.2%,#5b5852 71.4%,#5b5852 75.5%,#5b5852 79.7%,#5b5852 83.9%,#5b5852 88.0%,#5a5751 92.2%,#58554f 96.4%,#5c5953 99.5%)"></div>
<div style="left:1199px;top:348px;width:81px;height:4px;background:linear-gradient(90deg,#4e3e32 0.6%,#4a3b2f 5.6%,#4c3d31 10.5%,#4d3d31 15.4%,#4d3d31 20.4%,#4d3d31 25.3%,#4d3d31 30.2%,#4d3d31 35.2%,#4d3d31 40.1%,#4d3d31 45.1%,#4d3d31 50.0%,#4d3d31 54.9%,#4e3e32 59.9%,#56483c 64.8%,#695e53 69.8%,#7e766b 74.7%,#878177 79.6%,#898379 84.6%,#898379 89.5%,#898379 94.4%,#898379 99.4%)"></div>
<div style="left:0px;top:352px;width:96px;height:4px;background:linear-gradient(90deg,#5a5651 0.5%,#5a5651 4.7%,#5a5651 8.9%,#5a5651 13.0%,#5a5651 17.2%,#5a5651 21.4%,#5a5651 25.5%,#5a5651 29.7%,#5a5651 33.9%,#5a5651 38.0%,#5a5651 42.2%,#5a5651 46.4%,#5a5651 50.5%,#5a5651 54.7%,#5a5651 58.9%,#5a5651 63.0%,#5a5651 67.2%,#5a5651 71.4%,#5a5651 75.5%,#5a5651 79.7%,#5a5651 83.9%,#5a5651 88.0%,#595550 92.2%,#57534e 96.4%,#5b5752 99.5%)"></div>
<div style="left:1199px;top:352px;width:81px;height:4px;background:linear-gradient(90deg,#4e3e32 0.6%,#4a3b2f 5.6%,#4c3d31 10.5%,#4d3d31 15.4%,#4d3d31 20.4%,#4d3d31 25.3%,#4d3d31 30.2%,#4d3d31 35.2%,#4d3d31 40.1%,#4d3d31 45.1%,#4d3d31 50.0%,#4d3d31 54.9%,#4d3d31 59.9%,#534539 64.8%,#65584d 69.8%,#7a7267 74.7%,#868076 79.6%,#898379 84.6%,#898379 89.5%,#898379 94.4%,#898379 99.4%)"></div>
<div style="left:0px;top:356px;width:96px;height:4px;background:linear-gradient(90deg,#585550 0.5%,#585550 4.7%,#585550 8.9%,#585550 13.0%,#585550 17.2%,#585550 21.4%,#585550 25.5%,#585550 29.7%,#585550 33.9%,#585550 38.0%,#585550 42.2%,#585550 46.4%,#585550 50.5%,#585550 54.7%,#585550 58.9%,#585550 63.0%,#585550 67.2%,#585550 71.4%,#585550 75.5%,#585550 79.7%,#585550 83.9%,#585550 88.0%,#57544f 92.2%,#55524d 96.4%,#595651 99.5%)"></div>
<div style="left:1199px;top:356px;width:81px;height:4px;background:linear-gradient(90deg,#4f3f33 0.6%,#4b3c30 5.6%,#4d3e32 10.5%,#4f3f33 15.4%,#4f4034 20.4%,#504034 25.3%,#504034 30.2%,#504034 35.2%,#504034 40.1%,#504034 45.1%,#504034 50.0%,#504034 54.9%,#504034 59.9%,#544539 64.8%,#62554a 69.8%,#766e63 74.7%,#857e74 79.6%,#898379 84.6%,#898379 89.5%,#898379 94.4%,#898379 99.4%)"></div>
<div style="left:0px;top:360px;width:96px;height:4px;background:linear-gradient(90deg,#57544e 0.5%,#57544e 4.7%,#57544e 8.9%,#57544e 13.0%,#57544e 17.2%,#57544e 21.4%,#57544e 25.5%,#57544e 29.7%,#57544e 33.9%,#57544e 38.0%,#57544e 42.2%,#57544e 46.4%,#57544e 50.5%,#57544e 54.7%,#57544e 58.9%,#57544e 63.0%,#57544e 67.2%,#57544e 71.4%,#57544e 75.5%,#57544e 79.7%,#57544e 83.9%,#57544e 88.0%,#56534d 92.2%,#54514b 96.4%,#58554f 99.5%)"></div>
<div style="left:1199px;top:360px;width:81px;height:4px;background:linear-gradient(90deg,#57483a 0.6%,#534438 5.6%,#56473b 10.5%,#5a4b3f 15.4%,#5d4f43 20.4%,#5e5045 25.3%,#5e5045 30.2%,#5e5045 35.2%,#5e5045 40.1%,#5e5045 45.1%,#5e5045 50.0%,#5e5045 54.9%,#5e5045 59.9%,#615348 64.8%,#6b5f54 69.8%,#7a7166 74.7%,#857f75 79.6%,#898379 84.6%,#898379 89.5%,#898379 94.4%,#898379 99.4%)"></div>
<div style="left:0px;top:364px;width:96px;height:4px;background:linear-gradient(90deg,#56524d 0.5%,#56524d 4.7%,#56524d 8.9%,#56524d 13.0%,#56524d 17.2%,#56524d 21.4%,#56524d 25.5%,#56524d 29.7%,#56524d 33.9%,#56524d 38.0%,#56524d 42.2%,#56524d 46.4%,#56524d 50.5%,#56524d 54.7%,#56524d 58.9%,#56524d 63.0%,#56524d 67.2%,#56524d 71.4%,#56524d 75.5%,#56524d 79.7%,#56524d 83.9%,#56524d 88.0%,#55514c 92.2%,#534f4a 96.4%,#57534e 99.5%)"></div>
<div style="left:1199px;top:364px;width:81px;height:4px;background:linear-gradient(90deg,#6c5e4a 0.6%,#665947 5.6%,#6a5d4d 10.5%,#716659 15.4%,#796f63 20.4%,#7c7267 25.3%,#7d7368 30.2%,#7d7368 35.2%,#7d7368 40.1%,#7d7368 45.1%,#7d7368 50.0%,#7d7368 54.9%,#7d7368 59.9%,#7e7469 64.8%,#81786e 69.8%,#867f74 74.7%,#898379 79.6%,#898379 84.6%,#898379 89.5%,#898379 94.4%,#898379 99.4%)"></div>
<div style="left:0px;top:368px;width:96px;height:4px;background:linear-gradient(90deg,#54514c 0.5%,#54514c 4.7%,#54514c 8.9%,#54514c 13.0%,#54514c 17.2%,#54514c 21.4%,#54514c 25.5%,#54514c 29.7%,#54514c 33.9%,#54514c 38.0%,#54514c 42.2%,#54514c 46.4%,#54514c 50.5%,#54514c 54.7%,#54514c 58.9%,#54514c 63.0%,#54514c 67.2%,#54514c 71.4%,#54514c 75.5%,#54514c 79.7%,#54514c 83.9%,#54514c 88.0%,#53504b 92.2%,#514e49 96.4%,#55524d 99.5%)"></div>
<div style="left:1199px;top:368px;width:81px;height:4px;background:linear-gradient(90deg,#88795a 0.6%,#807256 5.6%,#817660 10.5%,#8a8071 15.4%,#938c80 20.4%,#979186 25.3%,#989287 30.2%,#989287 35.2%,#989287 40.1%,#989287 45.1%,#989287 50.0%,#989287 54.9%,#989287 59.9%,#989288 64.8%,#989187 69.8%,#948e84 74.7%,#8e887e 79.6%,#8a857a 84.6%,#898379 89.5%,#898379 94.4%,#898379 99.4%)"></div>
<div style="left:0px;top:372px;width:96px;height:4px;background:linear-gradient(90deg,#53504b 0.5%,#53504b 4.7%,#53504b 8.9%,#53504b 13.0%,#53504b 17.2%,#53504b 21.4%,#53504b 25.5%,#53504b 29.7%,#53504b 33.9%,#53504b 38.0%,#53504b 42.2%,#53504b 46.4%,#53504b 50.5%,#53504b 54.7%,#53504b 58.9%,#53504b 63.0%,#53504b 67.2%,#53504b 71.4%,#53504b 75.5%,#53504b 79.7%,#53504b 83.9%,#53504b 88.0%,#524f4a 92.2%,#504d48 96.4%,#54514c 99.5%)"></div>
<div style="left:1199px;top:372px;width:81px;height:4px;background:linear-gradient(90deg,#988960 0.6%,#8f825c 5.6%,#928566 10.5%,#988e78 15.4%,#9e9789 20.4%,#a29c92 25.3%,#a29d93 30.2%,#a29d93 35.2%,#a29d93 40.1%,#a29d93 45.1%,#a29d93 50.0%,#a29d93 54.9%,#a29d93 59.9%,#a29d93 64.8%,#a09b91 69.8%,#9a948a 74.7%,#908b81 79.6%,#8a857b 84.6%,#898379 89.5%,#898379 94.4%,#898379 99.4%)"></div>
<div style="left:0px;top:376px;width:96px;height:4px;background:linear-gradient(90deg,#524f4a 0.5%,#524f4a 4.7%,#524f4a 8.9%,#524f4a 13.0%,#524f4a 17.2%,#524f4a 21.4%,#524f4a 25.5%,#524f4a 29.7%,#524f4a 33.9%,#524f4a 38.0%,#524f4a 42.2%,#524f4a 46.4%,#524f4a 50.5%,#524f4a 54.7%,#524f4a 58.9%,#524f4a 63.0%,#524f4a 67.2%,#524f4a 71.4%,#524f4a 75.5%,#524f4a 79.7%,#524f4a 83.9%,#524f4a 88.0%,#514e49 92.2%,#4f4c47 96.4%,#53504b 99.5%)"></div>
<div style="left:1199px;top:376px;width:81px;height:4px;background:linear-gradient(90deg,#94855c 0.6%,#8d7f59 5.6%,#928461 10.5%,#988d70 15.4%,#9c9481 20.4%,#9d978a 25.3%,#9d978c 30.2%,#9c968c 35.2%,#9c968c 40.1%,#9c968c 45.1%,#9c968c 50.0%,#9c968c 54.9%,#9c968c 59.9%,#9c968c 64.8%,#9b948a 69.8%,#958f85 74.7%,#8c867c 79.6%,#867f75 84.6%,#847d73 89.5%,#847d73 94.4%,#847d73 99.4%)"></div>
<div style="left:0px;top:380px;width:96px;height:4px;background:linear-gradient(90deg,#514e49 0.5%,#514e49 4.7%,#514e49 8.9%,#514e49 13.0%,#514e49 17.2%,#514e49 21.4%,#514e49 25.5%,#514e49 29.7%,#514e49 33.9%,#514e49 38.0%,#514e49 42.2%,#514e49 46.4%,#514e49 50.5%,#514e49 54.7%,#514e49 58.9%,#514e49 63.0%,#514e49 67.2%,#514e49 71.4%,#514e49 75.5%,#514e49 79.7%,#514e49 83.9%,#514e49 88.0%,#504d48 92.2%,#4e4b46 96.4%,#524f4a 99.5%)"></div>
<div style="left:1199px;top:380px;width:81px;height:4px;background:linear-gradient(90deg,#796a4a 0.6%,#746647 5.6%,#7e6f4f 10.5%,#8a7d5e 15.4%,#90856c 20.4%,#8c8373 25.3%,#877e73 30.2%,#867c72 35.2%,#857c72 40.1%,#857c72 45.1%,#857c72 50.0%,#857c72 54.9%,#857c72 59.9%,#857c72 64.8%,#857b71 69.8%,#81776d 74.7%,#7b7166 79.6%,#766c62 84.6%,#746a60 89.5%,#746a60 94.4%,#746a60 99.4%)"></div>
<div style="left:0px;top:384px;width:96px;height:4px;background:linear-gradient(90deg,#504d48 0.5%,#504d48 4.7%,#504d48 8.9%,#504d48 13.0%,#504d48 17.2%,#504d48 21.4%,#504d48 25.5%,#504d48 29.7%,#504d48 33.9%,#504d48 38.0%,#504d48 42.2%,#504d48 46.4%,#504d48 50.5%,#504d48 54.7%,#504d48 58.9%,#504d48 63.0%,#504d48 67.2%,#504d48 71.4%,#504d48 75.5%,#504d48 79.7%,#504d48 83.9%,#504d48 88.0%,#4f4c47 92.2%,#4d4a45 96.4%,#514e49 99.5%)"></div>
<div style="left:1199px;top:384px;width:81px;height:4px;background:linear-gradient(90deg,#534632 0.6%,#524431 5.6%,#60523b 10.5%,#78694c 15.4%,#847659 20.4%,#7c6e58 25.3%,#6e6152 30.2%,#685b4f 35.2%,#665a4e 40.1%,#665a4e 45.1%,#665a4e 50.0%,#665a4e 54.9%,#665a4e 59.9%,#665a4e 64.8%,#66594e 69.8%,#65574c 74.7%,#625549 79.6%,#605247 84.6%,#5f5246 89.5%,#5f5246 94.4%,#5f5246 99.4%)"></div>
<div style="left:0px;top:388px;width:96px;height:4px;background:linear-gradient(90deg,#4f4c47 0.5%,#4f4c47 4.7%,#4f4c47 8.9%,#4f4c47 13.0%,#4f4c47 17.2%,#4f4c47 21.4%,#4f4c47 25.5%,#4f4c47 29.7%,#4f4c47 33.9%,#4f4c47 38.0%,#4f4c47 42.2%,#4f4c47 46.4%,#4f4c47 50.5%,#4f4c47 54.7%,#4f4c47 58.9%,#4f4c47 63.0%,#4f4c47 67.2%,#4f4c47 71.4%,#4f4c47 75.5%,#4f4c47 79.7%,#4f4c47 83.9%,#4f4c47 88.0%,#4e4b46 92.2%,#4c4944 96.4%,#504d48 99.5%)"></div>
<div style="left:1199px;top:388px;width:81px;height:4px;background:linear-gradient(90deg,#3d2f23 0.6%,#3c2f23 5.6%,#4d402f 10.5%,#6e6044 15.4%,#847453 20.4%,#7c6d50 25.3%,#685844 30.2%,#594a3b 35.2%,#544539 40.1%,#544438 45.1%,#544438 50.0%,#544438 54.9%,#544438 59.9%,#544438 64.8%,#534438 69.8%,#534438 74.7%,#534337 79.6%,#524337 84.6%,#524337 89.5%,#524337 94.4%,#524337 99.4%)"></div>
<div style="left:0px;top:392px;width:96px;height:4px;background:linear-gradient(90deg,#4d4b46 0.5%,#4d4b46 4.7%,#4d4b46 8.9%,#4d4b46 13.0%,#4d4b46 17.2%,#4d4b46 21.4%,#4d4b46 25.5%,#4d4b46 29.7%,#4d4b46 33.9%,#4d4b46 38.0%,#4d4b46 42.2%,#4d4b46 46.4%,#4d4b46 50.5%,#4d4b46 54.7%,#4d4b46 58.9%,#4d4b46 63.0%,#4d4b46 67.2%,#4d4b46 71.4%,#4d4b46 75.5%,#4d4b46 79.7%,#4d4b46 83.9%,#4d4b46 88.0%,#4c4a45 92.2%,#4a4843 96.4%,#4e4c47 99.5%)"></div>
<div style="left:1199px;top:392px;width:81px;height:4px;background:linear-gradient(90deg,#372a20 0.6%,#372b20 5.6%,#493d2c 10.5%,#6d5f43 15.4%,#8a7a55 20.4%,#897a56 25.3%,#75664a 30.2%,#60503d 35.2%,#544436 40.1%,#504033 45.1%,#4f3f33 50.0%,#4f3f33 54.9%,#4f3f33 59.9%,#4f3f33 64.8%,#4f3f33 69.8%,#4f3f33 74.7%,#4f3f33 79.6%,#4f3f33 84.6%,#4f3f33 89.5%,#4f3f33 94.4%,#4f3f33 99.4%)"></div>
<div style="left:0px;top:396px;width:96px;height:4px;background:linear-gradient(90deg,#4c4a45 0.5%,#4c4a45 4.7%,#4c4a45 8.9%,#4c4a45 13.0%,#4c4a45 17.2%,#4c4a45 21.4%,#4c4a45 25.5%,#4c4a45 29.7%,#4c4a45 33.9%,#4c4a45 38.0%,#4c4a45 42.2%,#4c4a45 46.4%,#4c4a45 50.5%,#4c4a45 54.7%,#4c4a45 58.9%,#4c4a45 63.0%,#4c4a45 67.2%,#4c4a45 71.4%,#4c4a45 75.5%,#4c4a45 79.7%,#4c4a45 83.9%,#4c4a45 88.0%,#4b4944 92.2%,#494743 96.4%,#4d4b46 99.5%)"></div>
<div style="left:1199px;top:396px;width:81px;height:4px;background:linear-gradient(90deg,#372a20 0.6%,#372b20 5.6%,#493d2c 10.5%,#6e6043 15.4%,#8e7e58 20.4%,#95855c 25.3%,#887855 30.2%,#726247 35.2%,#5d4d3b 40.1%,#534335 45.1%,#4f3f33 50.0%,#4f3f33 54.9%,#4f3f33 59.9%,#4f3f33 64.8%,#4f3f33 69.8%,#4f3f33 74.7%,#4f3f33 79.6%,#4f3f33 84.6%,#4f3f33 89.5%,#4f3f33 94.4%,#4f3f33 99.4%)"></div>
<div style="left:0px;top:400px;width:96px;height:4px;background:linear-gradient(90deg,#4b4945 0.5%,#4b4945 4.7%,#4b4945 8.9%,#4b4945 13.0%,#4b4945 17.2%,#4b4945 21.4%,#4b4945 25.5%,#4b4945 29.7%,#4b4945 33.9%,#4b4945 38.0%,#4b4945 42.2%,#4b4945 46.4%,#4b4945 50.5%,#4b4945 54.7%,#4b4945 58.9%,#4b4945 63.0%,#4b4945 67.2%,#4b4945 71.4%,#4b4945 75.5%,#4b4945 79.7%,#4b4945 83.9%,#4b4945 88.0%,#4a4844 92.2%,#484643 96.4%,#4c4a46 99.5%)"></div>
<div style="left:1199px;top:400px;width:81px;height:4px;background:linear-gradient(90deg,#372a20 0.6%,#372b20 5.6%,#493d2c 10.5%,#6e6043 15.4%,#8f7f58 20.4%,#9a8a5f 25.3%,#95855c 30.2%,#857552 35.2%,#6e5e45 40.1%,#5b4b3a 45.1%,#524235 50.0%,#4f3f33 54.9%,#4f3f33 59.9%,#4f3f33 64.8%,#4f3f33 69.8%,#4f3f33 74.7%,#4f3f33 79.6%,#4f3f33 84.6%,#4f3f33 89.5%,#4f3f33 94.4%,#4f3f33 99.4%)"></div>
<div style="left:0px;top:404px;width:96px;height:4px;background:linear-gradient(90deg,#4a4844 0.5%,#4a4844 4.7%,#4a4844 8.9%,#4a4844 13.0%,#4a4844 17.2%,#4a4844 21.4%,#4a4844 25.5%,#4a4844 29.7%,#4a4844 33.9%,#4a4844 38.0%,#4a4844 42.2%,#4a4844 46.4%,#4a4844 50.5%,#4a4844 54.7%,#4a4844 58.9%,#4a4844 63.0%,#4a4844 67.2%,#4a4844 71.4%,#4a4844 75.5%,#4a4844 79.7%,#4a4844 83.9%,#4a4844 88.0%,#494743 92.2%,#474542 96.4%,#4b4945 99.5%)"></div>
<div style="left:1199px;top:404px;width:81px;height:4px;background:linear-gradient(90deg,#372a20 0.6%,#372b20 5.6%,#493d2c 10.5%,#6e6043 15.4%,#8f7f58 20.4%,#9c8c60 25.3%,#9b8b60 30.2%,#93835b 35.2%,#817151 40.1%,#6a5a43 45.1%,#584839 50.0%,#514134 54.9%,#4f3f33 59.9%,#4f3f33 64.8%,#4f3f33 69.8%,#4f3f33 74.7%,#4f3f33 79.6%,#4f3f33 84.6%,#4f3f33 89.5%,#4f3f33 94.4%,#4f3f33 99.4%)"></div>
<div style="left:0px;top:408px;width:96px;height:4px;background:linear-gradient(90deg,#494743 0.5%,#494743 4.7%,#494743 8.9%,#494743 13.0%,#494743 17.2%,#494743 21.4%,#494743 25.5%,#494743 29.7%,#494743 33.9%,#494743 38.0%,#494743 42.2%,#494743 46.4%,#494743 50.5%,#494743 54.7%,#494743 58.9%,#494743 63.0%,#494743 67.2%,#494743 71.4%,#494743 75.5%,#494743 79.7%,#494743 83.9%,#494743 88.0%,#484642 92.2%,#464441 96.4%,#4a4844 99.5%)"></div>
<div style="left:1199px;top:408px;width:81px;height:4px;background:linear-gradient(90deg,#372a20 0.6%,#372b20 5.6%,#493d2c 10.5%,#6e6043 15.4%,#8f7f58 20.4%,#9c8c60 25.3%,#9d8d61 30.2%,#9a8a5f 35.2%,#91815a 40.1%,#7d6d4f 45.1%,#665642 50.0%,#564738 54.9%,#504034 59.9%,#4f3f33 64.8%,#4f3f33 69.8%,#4f3f33 74.7%,#4f3f33 79.6%,#4f3f33 84.6%,#4f3f33 89.5%,#4f3f33 94.4%,#4f3f33 99.4%)"></div>
<div style="left:0px;top:412px;width:96px;height:4px;background:linear-gradient(90deg,#484642 0.5%,#484642 4.7%,#484642 8.9%,#484642 13.0%,#484642 17.2%,#484642 21.4%,#484642 25.5%,#484642 29.7%,#484642 33.9%,#484642 38.0%,#484642 42.2%,#484642 46.4%,#484642 50.5%,#484642 54.7%,#484642 58.9%,#484642 63.0%,#484642 67.2%,#484642 71.4%,#484642 75.5%,#484642 79.7%,#484642 83.9%,#484642 88.0%,#474541 92.2%,#454340 96.4%,#494743 99.5%)"></div>
<div style="left:1199px;top:412px;width:81px;height:4px;background:linear-gradient(90deg,#372a20 0.6%,#372b20 5.6%,#493d2c 10.5%,#6e6043 15.4%,#8f7f58 20.4%,#9c8c60 25.3%,#9d8d61 30.2%,#9d8d61 35.2%,#99895f 40.1%,#8e7e59 45.1%,#78694d 50.0%,#625340 54.9%,#544537 59.9%,#504034 64.8%,#4f3f33 69.8%,#4f3f33 74.7%,#4f3f33 79.6%,#4f3f33 84.6%,#4f3f33 89.5%,#4f3f33 94.4%,#4f3f33 99.4%)"></div>
<div style="left:0px;top:416px;width:96px;height:4px;background:linear-gradient(90deg,#474541 0.5%,#474541 4.7%,#474541 8.9%,#474541 13.0%,#474541 17.2%,#474541 21.4%,#474541 25.5%,#474541 29.7%,#474541 33.9%,#474541 38.0%,#474541 42.2%,#474541 46.4%,#474541 50.5%,#474541 54.7%,#474541 58.9%,#474541 63.0%,#474541 67.2%,#474541 71.4%,#474541 75.5%,#474541 79.7%,#474541 83.9%,#474541 88.0%,#464440 92.2%,#44433f 96.4%,#484642 99.5%)"></div>
<div style="left:1199px;top:416px;width:81px;height:4px;background:linear-gradient(90deg,#372a20 0.6%,#372b20 5.6%,#493d2c 10.5%,#6e6043 15.4%,#8f7f58 20.4%,#9c8c60 25.3%,#9d8d61 30.2%,#9d8d61 35.2%,#9c8c61 40.1%,#98885e 45.1%,#8a7b57 50.0%,#74654b 54.9%,#5f503f 59.9%,#534336 64.8%,#4f3f33 69.8%,#4f3f33 74.7%,#4f3f33 79.6%,#4f3f33 84.6%,#4f3f33 89.5%,#4f3f33 94.4%,#4f3f33 99.4%)"></div>
<div style="left:0px;top:420px;width:96px;height:4px;background:linear-gradient(90deg,#464440 0.5%,#464440 4.7%,#464440 8.9%,#464440 13.0%,#464440 17.2%,#464440 21.4%,#464440 25.5%,#464440 29.7%,#464440 33.9%,#464440 38.0%,#464440 42.2%,#464440 46.4%,#464440 50.5%,#464440 54.7%,#464440 58.9%,#464440 63.0%,#464440 67.2%,#464440 71.4%,#464440 75.5%,#464440 79.7%,#464440 83.9%,#464440 88.0%,#45433f 92.2%,#43423e 96.4%,#474541 99.5%)"></div>
<div style="left:1199px;top:420px;width:81px;height:4px;background:linear-gradient(90deg,#372a20 0.6%,#372b20 5.6%,#493d2c 10.5%,#6e6043 15.4%,#8f7f58 20.4%,#9c8c60 25.3%,#9d8d61 30.2%,#9d8d61 35.2%,#9d8d61 40.1%,#9c8c61 45.1%,#96865e 50.0%,#867756 54.9%,#6f604a 59.9%,#5c4d3d 64.8%,#524236 69.8%,#4f3f33 74.7%,#4f3f33 79.6%,#4f3f33 84.6%,#4f3f33 89.5%,#4f3f33 94.4%,#4f3f33 99.4%)"></div>
<div style="left:0px;top:424px;width:96px;height:4px;background:linear-gradient(90deg,#454340 0.5%,#454340 4.7%,#454340 8.9%,#454340 13.0%,#454340 17.2%,#454340 21.4%,#454340 25.5%,#454340 29.7%,#454340 33.9%,#454340 38.0%,#454340 42.2%,#454340 46.4%,#454340 50.5%,#454340 54.7%,#454340 58.9%,#454340 63.0%,#454340 67.2%,#454340 71.4%,#454340 75.5%,#454340 79.7%,#454340 83.9%,#454340 88.0%,#44423f 92.2%,#43413e 96.4%,#464441 99.5%)"></div>
<div style="left:1199px;top:424px;width:81px;height:4px;background:linear-gradient(90deg,#372a20 0.6%,#372b20 5.6%,#493d2c 10.5%,#6e6043 15.4%,#8f7f58 20.4%,#9c8c60 25.3%,#9d8d61 30.2%,#9d8d61 35.2%,#9d8d61 40.1%,#9d8d61 45.1%,#9b8b60 50.0%,#94845d 54.9%,#827355 59.9%,#6b5d48 64.8%,#5a4a3c 69.8%,#514235 74.7%,#4f3f33 79.6%,#4f3f33 84.6%,#4f3f33 89.5%,#4f3f33 94.4%,#4f3f33 99.4%)"></div>
<div style="left:0px;top:428px;width:96px;height:4px;background:linear-gradient(90deg,#45433f 0.5%,#45433f 4.7%,#45433f 8.9%,#45433f 13.0%,#45433f 17.2%,#45433f 21.4%,#45433f 25.5%,#45433f 29.7%,#45433f 33.9%,#45433f 38.0%,#45433f 42.2%,#45433f 46.4%,#45433f 50.5%,#45433f 54.7%,#45433f 58.9%,#45433f 63.0%,#45433f 67.2%,#45433f 71.4%,#45433f 75.5%,#45433f 79.7%,#45433f 83.9%,#45433f 88.0%,#44423f 92.2%,#43413d 96.4%,#464440 99.5%)"></div>
<div style="left:1199px;top:428px;width:81px;height:4px;background:linear-gradient(90deg,#372a20 0.6%,#372b20 5.6%,#493d2c 10.5%,#6e6043 15.4%,#8f7f58 20.4%,#9c8c60 25.3%,#9e8e61 30.2%,#9e8e61 35.2%,#9e8d61 40.1%,#9d8d61 45.1%,#9d8d61 50.0%,#9a8a60 54.9%,#91825d 59.9%,#7e6f54 64.8%,#685846 69.8%,#57483a 74.7%,#514135 79.6%,#4f3f33 84.6%,#4f3f33 89.5%,#4f3f33 94.4%,#4f3f33 99.4%)"></div>
<div style="left:0px;top:432px;width:96px;height:4px;background:linear-gradient(90deg,#44423e 0.5%,#44423e 4.7%,#44423e 8.9%,#44423e 13.0%,#44423e 17.2%,#44423e 21.4%,#44423e 25.5%,#44423e 29.7%,#44423e 33.9%,#44423e 38.0%,#44423e 42.2%,#44423e 46.4%,#44423e 50.5%,#44423e 54.7%,#44423e 58.9%,#44423e 63.0%,#44423e 67.2%,#44423e 71.4%,#44423e 75.5%,#44423e 79.7%,#44423e 83.9%,#44423e 88.0%,#43413e 92.2%,#42403c 96.4%,#45433f 99.5%)"></div>
<div style="left:1199px;top:432px;width:81px;height:4px;background:linear-gradient(90deg,#372a20 0.6%,#372b20 5.6%,#493d2c 10.5%,#6e6043 15.4%,#8f7f58 20.4%,#9c8c60 25.3%,#9f8f62 30.2%,#a18f62 35.2%,#9f8e61 40.1%,#9e8d61 45.1%,#9d8d61 50.0%,#9d8d61 54.9%,#998a60 59.9%,#8e7f5d 64.8%,#7a6b53 69.8%,#645545 74.7%,#564639 79.6%,#504034 84.6%,#4f3f33 89.5%,#4f3f33 94.4%,#4f3f33 99.4%)"></div>
<div style="left:0px;top:436px;width:96px;height:4px;background:linear-gradient(90deg,#43413e 0.5%,#43413e 4.7%,#43413e 8.9%,#43413e 13.0%,#43413e 17.2%,#43413e 21.4%,#43413e 25.5%,#43413e 29.7%,#43413e 33.9%,#43413e 38.0%,#43413e 42.2%,#43413e 46.4%,#43413e 50.5%,#43413e 54.7%,#43413e 58.9%,#43413e 63.0%,#43413e 67.2%,#43413e 71.4%,#43413e 75.5%,#43413e 79.7%,#43413e 83.9%,#43413e 88.0%,#42403e 92.2%,#413f3c 96.4%,#44423f 99.5%)"></div>
<div style="left:1199px;top:436px;width:81px;height:4px;background:linear-gradient(90deg,#372a20 0.6%,#372b20 5.6%,#493d2c 10.5%,#6e6043 15.4%,#8f7f58 20.4%,#9d8c60 25.3%,#a19062 30.2%,#a39163 35.2%,#a29062 40.1%,#9f8e61 45.1%,#9d8d61 50.0%,#9d8d61 54.9%,#9c8c61 59.9%,#988860 64.8%,#8a7c5c 69.8%,#756752 74.7%,#605243 79.6%,#544438 84.6%,#504034 89.5%,#4f3f33 94.4%,#4f3f33 99.4%)"></div>
<div style="left:0px;top:440px;width:96px;height:4px;background:linear-gradient(90deg,#43413d 0.5%,#43413d 4.7%,#43413d 8.9%,#43413d 13.0%,#43413d 17.2%,#43413d 21.4%,#43413d 25.5%,#43413d 29.7%,#43413d 33.9%,#43413d 38.0%,#43413d 42.2%,#43413d 46.4%,#43413d 50.5%,#43413d 54.7%,#43413d 58.9%,#43413d 63.0%,#43413d 67.2%,#43413d 71.4%,#43413d 75.5%,#43413d 79.7%,#43413d 83.9%,#43413d 88.0%,#42403d 92.2%,#413f3b 96.4%,#44423e 99.5%)"></div>
<div style="left:1199px;top:440px;width:81px;height:4px;background:linear-gradient(90deg,#372a20 0.6%,#372b20 5.6%,#493d2c 10.5%,#6e6043 15.4%,#8f7f58 20.4%,#9d8c60 25.3%,#a29062 30.2%,#a49263 35.2%,#a49263 40.1%,#a19062 45.1%,#9f8e61 50.0%,#9d8d61 54.9%,#9d8d61 59.9%,#9c8c61 64.8%,#968761 69.8%,#87795c 74.7%,#71634f 79.6%,#5d4e41 84.6%,#534337 89.5%,#4f3f33 94.4%,#4f3f33 99.4%)"></div>
<div style="left:0px;top:444px;width:96px;height:4px;background:linear-gradient(90deg,#42403c 0.5%,#42403c 4.7%,#42403c 8.9%,#42403c 13.0%,#42403c 17.2%,#42403c 21.4%,#42403c 25.5%,#42403c 29.7%,#42403c 33.9%,#42403c 38.0%,#42403c 42.2%,#42403c 46.4%,#42403c 50.5%,#42403c 54.7%,#42403c 58.9%,#42403c 63.0%,#42403c 67.2%,#42403c 71.4%,#42403c 75.5%,#42403c 79.7%,#42403c 83.9%,#42403c 88.0%,#413f3c 92.2%,#403e3a 96.4%,#43413d 99.5%)"></div>
<div style="left:1199px;top:444px;width:81px;height:4px;background:linear-gradient(90deg,#372a20 0.6%,#372b20 5.6%,#493d2c 10.5%,#6e6043 15.4%,#8f7f58 20.4%,#9d8c60 25.3%,#a29062 30.2%,#a59263 35.2%,#a69363 40.1%,#a49163 45.1%,#a18f62 50.0%,#9e8d61 54.9%,#9d8d61 59.9%,#9d8d61 64.8%,#9b8b62 69.8%,#938561 74.7%,#83755b 79.6%,#6d5f4e 84.6%,#5b4c3f 89.5%,#524236 94.4%,#4f3f33 99.4%)"></div>
<div style="left:0px;top:448px;width:96px;height:4px;background:linear-gradient(90deg,#413f3c 0.5%,#413f3c 4.7%,#413f3c 8.9%,#413f3c 13.0%,#413f3c 17.2%,#413f3c 21.4%,#413f3c 25.5%,#413f3c 29.7%,#413f3c 33.9%,#413f3c 38.0%,#413f3c 42.2%,#413f3c 46.4%,#413f3c 50.5%,#413f3c 54.7%,#413f3c 58.9%,#413f3c 63.0%,#413f3c 67.2%,#413f3c 71.4%,#413f3c 75.5%,#413f3c 79.7%,#413f3c 83.9%,#413f3c 88.0%,#403f3c 92.2%,#3f3d3a 96.4%,#42403d 99.5%)"></div>
<div style="left:1199px;top:448px;width:81px;height:4px;background:linear-gradient(90deg,#372a20 0.6%,#372b20 5.6%,#493d2c 10.5%,#6e6043 15.4%,#8f7f58 20.4%,#9d8c60 25.3%,#a29062 30.2%,#a59263 35.2%,#a79363 40.1%,#a69363 45.1%,#a39162 50.0%,#a08f61 54.9%,#9e8d61 59.9%,#9d8d61 64.8%,#9d8d61 69.8%,#9a8b62 74.7%,#918361 79.6%,#7f715a 84.6%,#695b4b 89.5%,#584a3d 94.4%,#524236 99.4%)"></div>
<div style="left:0px;top:452px;width:96px;height:4px;background:linear-gradient(90deg,#403e3b 0.5%,#403e3b 4.7%,#403e3b 8.9%,#403e3b 13.0%,#403e3b 17.2%,#403e3b 21.4%,#403e3b 25.5%,#403e3b 29.7%,#403e3b 33.9%,#403e3b 38.0%,#403e3b 42.2%,#403e3b 46.4%,#403e3b 50.5%,#403e3b 54.7%,#403e3b 58.9%,#403e3b 63.0%,#403e3b 67.2%,#403e3b 71.4%,#403e3b 75.5%,#403e3b 79.7%,#403e3b 83.9%,#403e3b 88.0%,#3f3e3b 92.2%,#3e3c39 96.4%,#413f3c 99.5%)"></div>
<div style="left:1199px;top:452px;width:81px;height:4px;background:linear-gradient(90deg,#372a20 0.6%,#372b20 5.6%,#493d2c 10.5%,#6e6043 15.4%,#8f7f58 20.4%,#9e8d60 25.3%,#a29062 30.2%,#a69263 35.2%,#a79363 40.1%,#a79363 45.1%,#a59263 50.0%,#a29062 54.9%,#9f8e61 59.9%,#9d8d61 64.8%,#9d8d61 69.8%,#9d8d61 74.7%,#998a62 79.6%,#8e8061 84.6%,#7b6e58 89.5%,#665849 94.4%,#5a4b3e 99.4%)"></div>
<div style="left:0px;top:456px;width:96px;height:4px;background:linear-gradient(90deg,#403e3a 0.5%,#403e3a 4.7%,#403e3a 8.9%,#403e3a 13.0%,#403e3a 17.2%,#403e3a 21.4%,#403e3a 25.5%,#403e3a 29.7%,#403e3a 33.9%,#403e3a 38.0%,#403e3a 42.2%,#403e3a 46.4%,#403e3a 50.5%,#403e3a 54.7%,#403e3a 58.9%,#403e3a 63.0%,#403e3a 67.2%,#403e3a 71.4%,#403e3a 75.5%,#403e3a 79.7%,#403e3a 83.9%,#403e3a 88.0%,#3f3e3a 92.2%,#3e3c38 96.4%,#413f3b 99.5%)"></div>
<div style="left:1199px;top:456px;width:81px;height:4px;background:linear-gradient(90deg,#372a20 0.6%,#372b20 5.6%,#493d2c 10.5%,#6e6043 15.4%,#8f7f58 20.4%,#9e8d60 25.3%,#a29062 30.2%,#a69263 35.2%,#a79363 40.1%,#a79363 45.1%,#a79363 50.0%,#a59263 54.9%,#a19062 59.9%,#9f8e61 64.8%,#9d8d61 69.8%,#9d8d61 74.7%,#9c8c61 79.6%,#978963 84.6%,#8b7d61 89.5%,#786b58 94.4%,#6a5d4f 99.4%)"></div>
<div style="left:0px;top:460px;width:96px;height:4px;background:linear-gradient(90deg,#3f3d3a 0.5%,#3f3d3a 4.7%,#3f3d3a 8.9%,#3f3d3a 13.0%,#3f3d3a 17.2%,#3f3d3a 21.4%,#3f3d3a 25.5%,#3f3d3a 29.7%,#3f3d3a 33.9%,#3f3d3a 38.0%,#3f3d3a 42.2%,#3f3d3a 46.4%,#3f3d3a 50.5%,#3f3d3a 54.7%,#3f3d3a 58.9%,#3f3d3a 63.0%,#3f3d3a 67.2%,#3f3d3a 71.4%,#3f3d3a 75.5%,#3f3d3a 79.7%,#3f3d3a 83.9%,#3f3d3a 88.0%,#3f3d3a 92.2%,#3d3b38 96.4%,#403e3b 99.5%)"></div>
<div style="left:1199px;top:460px;width:81px;height:4px;background:linear-gradient(90deg,#372a20 0.6%,#372b20 5.6%,#493d2c 10.5%,#6e6043 15.4%,#8f7f58 20.4%,#9e8d60 25.3%,#a29062 30.2%,#a69263 35.2%,#a79363 40.1%,#a79363 45.1%,#a79363 50.0%,#a69363 54.9%,#a49163 59.9%,#a18f62 64.8%,#9e8d61 69.8%,#9d8d61 74.7%,#9d8d61 79.6%,#9b8c62 84.6%,#958763 89.5%,#8a7d62 94.4%,#7f7460 99.4%)"></div>
<div style="left:0px;top:464px;width:96px;height:4px;background:linear-gradient(90deg,#3e3c39 0.5%,#3e3c39 4.7%,#3e3c39 8.9%,#3e3c39 13.0%,#3e3c39 17.2%,#3e3c39 21.4%,#3e3c39 25.5%,#3e3c39 29.7%,#3e3c39 33.9%,#3e3c39 38.0%,#3e3c39 42.2%,#3e3c39 46.4%,#3e3c39 50.5%,#3e3c39 54.7%,#3e3c39 58.9%,#3e3c39 63.0%,#3e3c39 67.2%,#3e3c39 71.4%,#3e3c39 75.5%,#3e3c39 79.7%,#3e3c39 83.9%,#3e3c39 88.0%,#3e3c39 92.2%,#3c3a37 96.4%,#3f3d3a 99.5%)"></div>
<div style="left:1199px;top:464px;width:81px;height:4px;background:linear-gradient(90deg,#372a20 0.6%,#372b20 5.6%,#493d2c 10.5%,#6e6043 15.4%,#8f8058 20.4%,#9e8d61 25.3%,#a39162 30.2%,#a69363 35.2%,#a79363 40.1%,#a79363 45.1%,#a79363 50.0%,#a79363 54.9%,#a69363 59.9%,#a39162 64.8%,#a08f61 69.8%,#9e8d61 74.7%,#9d8d61 79.6%,#9d8d61 84.6%,#9b8c62 89.5%,#968865 94.4%,#918466 99.4%)"></div>
<div style="left:0px;top:468px;width:96px;height:4px;background:linear-gradient(90deg,#3e3c39 0.5%,#3e3c39 4.7%,#3e3c39 8.9%,#3e3c39 13.0%,#3e3c39 17.2%,#3e3c39 21.4%,#3e3c39 25.5%,#3e3c39 29.7%,#3e3c39 33.9%,#3e3c39 38.0%,#3e3c39 42.2%,#3e3c39 46.4%,#3e3c39 50.5%,#3e3c39 54.7%,#3e3c39 58.9%,#3e3c39 63.0%,#3e3c39 67.2%,#3e3c39 71.4%,#3e3c39 75.5%,#3e3c39 79.7%,#3e3c39 83.9%,#3e3c39 88.0%,#3e3c39 92.2%,#3c3a37 96.4%,#3f3d3a 99.5%)"></div>
<div style="left:1199px;top:468px;width:81px;height:4px;background:linear-gradient(90deg,#372a20 0.6%,#372b20 5.6%,#493d2c 10.5%,#6e6043 15.4%,#8f8058 20.4%,#9e8d61 25.3%,#a39162 30.2%,#a69363 35.2%,#a79363 40.1%,#a79363 45.1%,#a79363 50.0%,#a79363 54.9%,#a79363 59.9%,#a59263 64.8%,#a29062 69.8%,#9f8e61 74.7%,#9d8d61 79.6%,#9d8d61 84.6%,#9d8d61 89.5%,#9b8c63 94.4%,#9a8b64 99.4%)"></div>
<div style="left:0px;top:472px;width:96px;height:4px;background:linear-gradient(90deg,#3d3b38 0.5%,#3d3b38 4.7%,#3d3b38 8.9%,#3d3b38 13.0%,#3d3b38 17.2%,#3d3b38 21.4%,#3d3b38 25.5%,#3d3b38 29.7%,#3d3b38 33.9%,#3d3b38 38.0%,#3d3b38 42.2%,#3d3b38 46.4%,#3d3b38 50.5%,#3d3b38 54.7%,#3d3b38 58.9%,#3d3b38 63.0%,#3d3b38 67.2%,#3d3b38 71.4%,#3d3b38 75.5%,#3d3b38 79.7%,#3d3b38 83.9%,#3d3b38 88.0%,#3d3b38 92.2%,#3b3936 96.4%,#3e3c39 99.5%)"></div>
<div style="left:1199px;top:472px;width:81px;height:4px;background:linear-gradient(90deg,#372a20 0.6%,#372b20 5.6%,#493d2c 10.5%,#6e6043 15.4%,#8f8058 20.4%,#9e8d61 25.3%,#a39162 30.2%,#a69363 35.2%,#a79363 40.1%,#a79363 45.1%,#a79363 50.0%,#a79363 54.9%,#a79363 59.9%,#a79363 64.8%,#a59263 69.8%,#a19062 74.7%,#9f8e61 79.6%,#9d8d61 84.6%,#9d8d61 89.5%,#9d8d61 94.4%,#9d8d62 99.4%)"></div>
<div style="left:0px;top:476px;width:96px;height:4px;background:linear-gradient(90deg,#3d3b37 0.5%,#3d3b37 4.7%,#3d3b37 8.9%,#3d3b37 13.0%,#3d3b37 17.2%,#3d3b37 21.4%,#3d3b37 25.5%,#3d3b37 29.7%,#3d3b37 33.9%,#3d3b37 38.0%,#3d3b37 42.2%,#3d3b37 46.4%,#3d3b37 50.5%,#3d3b37 54.7%,#3d3b37 58.9%,#3d3b37 63.0%,#3d3b37 67.2%,#3d3b37 71.4%,#3d3b37 75.5%,#3d3b37 79.7%,#3d3b37 83.9%,#3d3b37 88.0%,#3d3b37 92.2%,#3b3935 96.4%,#3e3c38 99.5%)"></div>
<div style="left:1199px;top:476px;width:81px;height:4px;background:linear-gradient(90deg,#372a20 0.6%,#372b20 5.6%,#493d2c 10.5%,#6e6043 15.4%,#8f8058 20.4%,#9e8d61 25.3%,#a39162 30.2%,#a69363 35.2%,#a79363 40.1%,#a79363 45.1%,#a79363 50.0%,#a79363 54.9%,#a79363 59.9%,#a79363 64.8%,#a69363 69.8%,#a49163 74.7%,#a18f62 79.6%,#9e8d61 84.6%,#9d8d61 89.5%,#9d8d61 94.4%,#9d8d61 99.4%)"></div>
<div style="left:0px;top:480px;width:96px;height:4px;background:linear-gradient(90deg,#3c3a37 0.5%,#3c3a37 4.7%,#3c3a37 8.9%,#3c3a37 13.0%,#3c3a37 17.2%,#3c3a37 21.4%,#3c3a37 25.5%,#3c3a37 29.7%,#3c3a37 33.9%,#3c3a37 38.0%,#3c3a37 42.2%,#3c3a37 46.4%,#3c3a37 50.5%,#3c3a37 54.7%,#3c3a37 58.9%,#3c3a37 63.0%,#3c3a37 67.2%,#3c3a37 71.4%,#3c3a37 75.5%,#3c3a37 79.7%,#3c3a37 83.9%,#3c3a37 88.0%,#3c3a37 92.2%,#3a3835 96.4%,#3d3b38 99.5%)"></div>
<div style="left:1199px;top:480px;width:81px;height:4px;background:linear-gradient(90deg,#372a20 0.6%,#372b20 5.6%,#493d2c 10.5%,#6e6043 15.4%,#908058 20.4%,#9f8e61 25.3%,#a49163 30.2%,#a69363 35.2%,#a79363 40.1%,#a79363 45.1%,#a79363 50.0%,#a79363 54.9%,#a79363 59.9%,#a79363 64.8%,#a79363 69.8%,#a69363 74.7%,#a39162 79.6%,#a08f61 84.6%,#9e8d61 89.5%,#9d8d61 94.4%,#9d8d61 99.4%)"></div>
<div style="left:0px;top:484px;width:96px;height:4px;background:linear-gradient(90deg,#3c3a36 0.5%,#3c3a36 4.7%,#3c3a36 8.9%,#3c3a36 13.0%,#3c3a36 17.2%,#3c3a36 21.4%,#3c3a36 25.5%,#3c3a36 29.7%,#3c3a36 33.9%,#3c3a36 38.0%,#3c3a36 42.2%,#3c3a36 46.4%,#3c3a36 50.5%,#3c3a36 54.7%,#3c3a36 58.9%,#3c3a36 63.0%,#3c3a36 67.2%,#3c3a36 71.4%,#3c3a36 75.5%,#3c3a36 79.7%,#3c3a36 83.9%,#3c3a36 88.0%,#3c3a36 92.2%,#3a3834 96.4%,#3d3b37 99.5%)"></div>
<div style="left:1199px;top:484px;width:81px;height:4px;background:linear-gradient(90deg,#372a20 0.6%,#372b20 5.6%,#493d2c 10.5%,#6e6043 15.4%,#908058 20.4%,#9f8e61 25.3%,#a49163 30.2%,#a69363 35.2%,#a79363 40.1%,#a79363 45.1%,#a79363 50.0%,#a79363 54.9%,#a79363 59.9%,#a79363 64.8%,#a79363 69.8%,#a79363 74.7%,#a59263 79.6%,#a29062 84.6%,#9f8e61 89.5%,#9d8d61 94.4%,#9d8d61 99.4%)"></div>
<div style="left:0px;top:488px;width:96px;height:4px;background:linear-gradient(90deg,#3b3936 0.5%,#3b3936 4.7%,#3b3936 8.9%,#3b3936 13.0%,#3b3936 17.2%,#3b3936 21.4%,#3b3936 25.5%,#3b3936 29.7%,#3b3936 33.9%,#3b3936 38.0%,#3b3936 42.2%,#3b3936 46.4%,#3b3936 50.5%,#3b3936 54.7%,#3b3936 58.9%,#3b3936 63.0%,#3b3936 67.2%,#3b3936 71.4%,#3b3936 75.5%,#3b3936 79.7%,#3b3936 83.9%,#3b3936 88.0%,#3b3936 92.2%,#393734 96.4%,#3c3a37 99.5%)"></div>
<div style="left:1199px;top:488px;width:81px;height:4px;background:linear-gradient(90deg,#372a20 0.6%,#372b20 5.6%,#493d2c 10.5%,#6e6043 15.4%,#908058 20.4%,#9f8e61 25.3%,#a49163 30.2%,#a69363 35.2%,#a79363 40.1%,#a79363 45.1%,#a79363 50.0%,#a79363 54.9%,#a79363 59.9%,#a79363 64.8%,#a79363 69.8%,#a79363 74.7%,#a79363 79.6%,#a49263 84.6%,#a19062 89.5%,#9e8e61 94.4%,#9d8d61 99.4%)"></div>
<div style="left:0px;top:492px;width:96px;height:4px;background:linear-gradient(90deg,#3b3935 0.5%,#3b3935 4.7%,#3b3935 8.9%,#3b3935 13.0%,#3b3935 17.2%,#3b3935 21.4%,#3b3935 25.5%,#3b3935 29.7%,#3b3935 33.9%,#3b3935 38.0%,#3b3935 42.2%,#3b3935 46.4%,#3b3935 50.5%,#3b3935 54.7%,#3b3935 58.9%,#3b3935 63.0%,#3b3935 67.2%,#3b3935 71.4%,#3b3935 75.5%,#3b3935 79.7%,#3b3935 83.9%,#3b3935 88.0%,#3b3935 92.2%,#393733 96.4%,#3c3a36 99.5%)"></div>
<div style="left:1199px;top:492px;width:81px;height:4px;background:linear-gradient(90deg,#372a20 0.6%,#372b20 5.6%,#493d2c 10.5%,#6e6043 15.4%,#908058 20.4%,#a08e61 25.3%,#a59263 30.2%,#a79363 35.2%,#a79363 40.1%,#a79363 45.1%,#a79363 50.0%,#a79363 54.9%,#a79363 59.9%,#a79363 64.8%,#a79363 69.8%,#a79363 74.7%,#a79363 79.6%,#a59263 84.6%,#a29062 89.5%,#9e8e61 94.4%,#9d8d61 99.4%)"></div>
<div style="left:0px;top:496px;width:96px;height:4px;background:linear-gradient(90deg,#3a3835 0.5%,#3a3835 4.7%,#3a3835 8.9%,#3a3835 13.0%,#3a3835 17.2%,#3a3835 21.4%,#3a3835 25.5%,#3a3835 29.7%,#3a3835 33.9%,#3a3835 38.0%,#3a3835 42.2%,#3a3835 46.4%,#3a3835 50.5%,#3a3835 54.7%,#3a3835 58.9%,#3a3835 63.0%,#3a3835 67.2%,#3a3835 71.4%,#3a3835 75.5%,#3a3835 79.7%,#3a3835 83.9%,#3a3835 88.0%,#3a3835 92.2%,#383633 96.4%,#3b3936 99.5%)"></div>
<div style="left:1199px;top:496px;width:81px;height:4px;background:linear-gradient(90deg,#372a20 0.6%,#372b20 5.6%,#493d2c 10.5%,#6e6043 15.4%,#908058 20.4%,#a08e61 25.3%,#a59263 30.2%,#a79363 35.2%,#a79363 40.1%,#a79363 45.1%,#a79363 50.0%,#a79363 54.9%,#a79363 59.9%,#a79363 64.8%,#a79363 69.8%,#a79363 74.7%,#a79363 79.6%,#a69263 84.6%,#a29062 89.5%,#9f8e61 94.4%,#9d8d61 99.4%)"></div>
<div style="left:0px;top:500px;width:96px;height:4px;background:linear-gradient(90deg,#3a3834 0.5%,#3a3834 4.7%,#3a3834 8.9%,#3a3834 13.0%,#3a3834 17.2%,#3a3834 21.4%,#3a3834 25.5%,#3a3834 29.7%,#3a3834 33.9%,#3a3834 38.0%,#3a3834 42.2%,#3a3834 46.4%,#3a3834 50.5%,#3a3834 54.7%,#3a3834 58.9%,#3a3834 63.0%,#3a3834 67.2%,#3a3834 71.4%,#3a3834 75.5%,#3a3834 79.7%,#3a3834 83.9%,#3a3834 88.0%,#3a3834 92.2%,#383632 96.4%,#3b3935 99.5%)"></div>
<div style="left:1199px;top:500px;width:81px;height:4px;background:linear-gradient(90deg,#372a20 0.6%,#372b20 5.6%,#493d2c 10.5%,#6e6043 15.4%,#908058 20.4%,#a08e61 25.3%,#a59263 30.2%,#a79363 35.2%,#a79363 40.1%,#a79363 45.1%,#a79363 50.0%,#a79363 54.9%,#a79363 59.9%,#a79363 64.8%,#a79363 69.8%,#a79363 74.7%,#a79363 79.6%,#a69263 84.6%,#a29062 89.5%,#9f8e61 94.4%,#9d8d61 99.4%)"></div>
<div style="left:0px;top:504px;width:96px;height:4px;background:linear-gradient(90deg,#393733 0.5%,#393733 4.7%,#393733 8.9%,#393733 13.0%,#393733 17.2%,#393733 21.4%,#393733 25.5%,#393733 29.7%,#393733 33.9%,#393733 38.0%,#393733 42.2%,#393733 46.4%,#393733 50.5%,#393733 54.7%,#393733 58.9%,#393733 63.0%,#393733 67.2%,#393733 71.4%,#393733 75.5%,#393733 79.7%,#393733 83.9%,#393733 88.0%,#393733 92.2%,#373531 96.4%,#3a3834 99.5%)"></div>
<div style="left:1199px;top:504px;width:81px;height:4px;background:linear-gradient(90deg,#372a20 0.6%,#372b20 5.6%,#493d2c 10.5%,#6e6043 15.4%,#908058 20.4%,#9f8e61 25.3%,#a49163 30.2%,#a69363 35.2%,#a79363 40.1%,#a79363 45.1%,#a79363 50.0%,#a79363 54.9%,#a79363 59.9%,#a79363 64.8%,#a79363 69.8%,#a79363 74.7%,#a79363 79.6%,#a69263 84.6%,#a29062 89.5%,#9f8e61 94.4%,#9d8d61 99.4%)"></div>
<div style="left:0px;top:508px;width:96px;height:4px;background:linear-gradient(90deg,#393733 0.5%,#393733 4.7%,#393733 8.9%,#393733 13.0%,#393733 17.2%,#393733 21.4%,#393733 25.5%,#393733 29.7%,#393733 33.9%,#393733 38.0%,#393733 42.2%,#393733 46.4%,#393733 50.5%,#393733 54.7%,#393733 58.9%,#393733 63.0%,#393733 67.2%,#393733 71.4%,#393733 75.5%,#393733 79.7%,#393733 83.9%,#393733 88.0%,#393733 92.2%,#373531 96.4%,#3a3834 99.5%)"></div>
<div style="left:1199px;top:508px;width:81px;height:4px;background:linear-gradient(90deg,#372a20 0.6%,#372b20 5.6%,#493d2c 10.5%,#6e6043 15.4%,#908058 20.4%,#9f8e61 25.3%,#a49163 30.2%,#a69363 35.2%,#a79363 40.1%,#a79363 45.1%,#a79363 50.0%,#a79363 54.9%,#a79363 59.9%,#a79363 64.8%,#a79363 69.8%,#a79363 74.7%,#a79363 79.6%,#a69263 84.6%,#a29062 89.5%,#9f8e61 94.4%,#9d8d61 99.4%)"></div>
<div style="left:0px;top:512px;width:96px;height:4px;background:linear-gradient(90deg,#383632 0.5%,#383632 4.7%,#383632 8.9%,#383632 13.0%,#383632 17.2%,#383632 21.4%,#383632 25.5%,#383632 29.7%,#383632 33.9%,#383632 38.0%,#383632 42.2%,#383632 46.4%,#383632 50.5%,#383632 54.7%,#383632 58.9%,#383632 63.0%,#383632 67.2%,#383632 71.4%,#383632 75.5%,#383632 79.7%,#383632 83.9%,#383632 88.0%,#383632 92.2%,#363430 96.4%,#393733 99.5%)"></div>
<div style="left:1199px;top:512px;width:81px;height:4px;background:linear-gradient(90deg,#372a20 0.6%,#372b20 5.6%,#493d2c 10.5%,#6e6043 15.4%,#8f8058 20.4%,#9e8d61 25.3%,#a39162 30.2%,#a69363 35.2%,#a79363 40.1%,#a79363 45.1%,#a79363 50.0%,#a79363 54.9%,#a79363 59.9%,#a79363 64.8%,#a79363 69.8%,#a79363 74.7%,#a79363 79.6%,#a69363 84.6%,#a39162 89.5%,#a08f61 94.4%,#9e8d61 99.4%)"></div>
<div style="left:0px;top:516px;width:96px;height:4px;background:linear-gradient(90deg,#383632 0.5%,#383632 4.7%,#383632 8.9%,#383632 13.0%,#383632 17.2%,#383632 21.4%,#383632 25.5%,#383632 29.7%,#383632 33.9%,#383632 38.0%,#383632 42.2%,#383632 46.4%,#383632 50.5%,#383632 54.7%,#383632 58.9%,#383632 63.0%,#383632 67.2%,#383632 71.4%,#383632 75.5%,#383632 79.7%,#383632 83.9%,#383632 88.0%,#383632 92.2%,#363430 96.4%,#393733 99.5%)"></div>
<div style="left:1199px;top:516px;width:81px;height:4px;background:linear-gradient(90deg,#372a20 0.6%,#372b20 5.6%,#493d2c 10.5%,#6e6043 15.4%,#8f8058 20.4%,#9e8d61 25.3%,#a39162 30.2%,#a69363 35.2%,#a79363 40.1%,#a79363 45.1%,#a79363 50.0%,#a79363 54.9%,#a79363 59.9%,#a79363 64.8%,#a79363 69.8%,#a79363 74.7%,#a79363 79.6%,#a69363 84.6%,#a39162 89.5%,#a08f61 94.4%,#9e8d61 99.4%)"></div>
<div style="left:0px;top:520px;width:96px;height:4px;background:linear-gradient(90deg,#373531 0.5%,#373531 4.7%,#373531 8.9%,#373531 13.0%,#373531 17.2%,#373531 21.4%,#373531 25.5%,#373531 29.7%,#373531 33.9%,#373531 38.0%,#373531 42.2%,#373531 46.4%,#373531 50.5%,#373531 54.7%,#373531 58.9%,#373531 63.0%,#373531 67.2%,#373531 71.4%,#373531 75.5%,#373531 79.7%,#373531 83.9%,#373531 88.0%,#373531 92.2%,#35332f 96.4%,#383632 99.5%)"></div>
<div style="left:1199px;top:520px;width:81px;height:4px;background:linear-gradient(90deg,#372a20 0.6%,#372b20 5.6%,#493d2c 10.5%,#6e6043 15.4%,#8f7f58 20.4%,#9e8d60 25.3%,#a29062 30.2%,#a69263 35.2%,#a79363 40.1%,#a79363 45.1%,#a79363 50.0%,#a79363 54.9%,#a79363 59.9%,#a79363 64.8%,#a79363 69.8%,#a79363 74.7%,#a79363 79.6%,#a69363 84.6%,#a39162 89.5%,#a08f61 94.4%,#9e8d61 99.4%)"></div>
<div style="left:0px;top:524px;width:96px;height:4px;background:linear-gradient(90deg,#373531 0.5%,#373531 4.7%,#373531 8.9%,#373531 13.0%,#373531 17.2%,#373531 21.4%,#373531 25.5%,#373531 29.7%,#373531 33.9%,#373531 38.0%,#373531 42.2%,#373531 46.4%,#373531 50.5%,#373531 54.7%,#373531 58.9%,#373531 63.0%,#373531 67.2%,#373531 71.4%,#373531 75.5%,#373531 79.7%,#373531 83.9%,#373531 88.0%,#373531 92.2%,#35332f 96.4%,#383632 99.5%)"></div>
<div style="left:1199px;top:524px;width:81px;height:4px;background:linear-gradient(90deg,#372a20 0.6%,#372b20 5.6%,#493d2c 10.5%,#6e6043 15.4%,#8f7f58 20.4%,#9e8d60 25.3%,#a29062 30.2%,#a69263 35.2%,#a79363 40.1%,#a79363 45.1%,#a79363 50.0%,#a79363 54.9%,#a79363 59.9%,#a79363 64.8%,#a79363 69.8%,#a79363 74.7%,#a79363 79.6%,#a69363 84.6%,#a49163 89.5%,#a18f62 94.4%,#9e8d61 99.4%)"></div>
<div style="left:0px;top:528px;width:96px;height:4px;background:linear-gradient(90deg,#373531 0.5%,#373531 4.7%,#373531 8.9%,#373531 13.0%,#373531 17.2%,#373531 21.4%,#373531 25.5%,#373531 29.7%,#373531 33.9%,#373531 38.0%,#373531 42.2%,#373531 46.4%,#373531 50.5%,#373531 54.7%,#373531 58.9%,#373531 63.0%,#373531 67.2%,#373531 71.4%,#373531 75.5%,#373531 79.7%,#373531 83.9%,#373531 88.0%,#373531 92.2%,#35332f 96.4%,#383632 99.5%)"></div>
<div style="left:1199px;top:528px;width:81px;height:4px;background:linear-gradient(90deg,#372a20 0.6%,#372b20 5.6%,#493d2c 10.5%,#6e6043 15.4%,#8f7f58 20.4%,#9d8c60 25.3%,#a29062 30.2%,#a59263 35.2%,#a79363 40.1%,#a79363 45.1%,#a79363 50.0%,#a79363 54.9%,#a79363 59.9%,#a79363 64.8%,#a79363 69.8%,#a79363 74.7%,#a79363 79.6%,#a69363 84.6%,#a49163 89.5%,#a18f62 94.4%,#9e8d61 99.4%)"></div>
<div style="left:0px;top:532px;width:96px;height:4px;background:linear-gradient(90deg,#373430 0.5%,#373430 4.7%,#373430 8.9%,#373430 13.0%,#373430 17.2%,#373430 21.4%,#373430 25.5%,#373430 29.7%,#373430 33.9%,#373430 38.0%,#373430 42.2%,#373430 46.4%,#373430 50.5%,#373430 54.7%,#373430 58.9%,#373430 63.0%,#373430 67.2%,#373430 71.4%,#373430 75.5%,#373430 79.7%,#373430 83.9%,#373430 88.0%,#373430 92.2%,#35322e 96.4%,#383531 99.5%)"></div>
<div style="left:1199px;top:532px;width:81px;height:4px;background:linear-gradient(90deg,#372a20 0.6%,#372b20 5.6%,#493d2c 10.5%,#6e6043 15.4%,#8f7f58 20.4%,#9d8c60 25.3%,#a29062 30.2%,#a59263 35.2%,#a79363 40.1%,#a79363 45.1%,#a79363 50.0%,#a79363 54.9%,#a79363 59.9%,#a79363 64.8%,#a79363 69.8%,#a79363 74.7%,#a79363 79.6%,#a69363 84.6%,#a49163 89.5%,#a18f62 94.4%,#9e8d61 99.4%)"></div>
<div style="left:0px;top:536px;width:96px;height:4px;background:linear-gradient(90deg,#373430 0.5%,#373430 4.7%,#373430 8.9%,#373430 13.0%,#373430 17.2%,#373430 21.4%,#373430 25.5%,#373430 29.7%,#373430 33.9%,#373430 38.0%,#373430 42.2%,#373430 46.4%,#373430 50.5%,#373430 54.7%,#373430 58.9%,#373430 63.0%,#373430 67.2%,#373430 71.4%,#373430 75.5%,#373430 79.7%,#373430 83.9%,#373430 88.0%,#373430 92.2%,#35322e 96.4%,#383531 99.5%)"></div>
<div style="left:1199px;top:536px;width:81px;height:4px;background:linear-gradient(90deg,#372a20 0.6%,#372b20 5.6%,#493d2c 10.5%,#6e6043 15.4%,#8f7f58 20.4%,#9c8c60 25.3%,#a18f62 30.2%,#a49163 35.2%,#a69363 40.1%,#a79363 45.1%,#a79363 50.0%,#a79363 54.9%,#a79363 59.9%,#a79363 64.8%,#a79363 69.8%,#a79363 74.7%,#a79363 79.6%,#a69363 84.6%,#a49163 89.5%,#a18f62 94.4%,#9e8d61 99.4%)"></div>
<div style="left:0px;top:540px;width:96px;height:4px;background:linear-gradient(90deg,#363430 0.5%,#363430 4.7%,#363430 8.9%,#363430 13.0%,#363430 17.2%,#363430 21.4%,#363430 25.5%,#363430 29.7%,#363430 33.9%,#363430 38.0%,#363430 42.2%,#363430 46.4%,#363430 50.5%,#363430 54.7%,#363430 58.9%,#363430 63.0%,#363430 67.2%,#363430 71.4%,#363430 75.5%,#363430 79.7%,#363430 83.9%,#363430 88.0%,#363430 92.2%,#34322e 96.4%,#373531 99.5%)"></div>
<div style="left:1199px;top:540px;width:81px;height:4px;background:linear-gradient(90deg,#372a20 0.6%,#372b20 5.6%,#493d2c 10.5%,#6e6043 15.4%,#8f7f58 20.4%,#9c8c60 25.3%,#a18f62 30.2%,#a49163 35.2%,#a69363 40.1%,#a79363 45.1%,#a79363 50.0%,#a79363 54.9%,#a79363 59.9%,#a79363 64.8%,#a79363 69.8%,#a79363 74.7%,#a79363 79.6%,#a79363 84.6%,#a59263 89.5%,#a29062 94.4%,#9f8e61 99.4%)"></div>
<div style="left:0px;top:544px;width:96px;height:4px;background:linear-gradient(90deg,#363430 0.5%,#363430 4.7%,#363430 8.9%,#363430 13.0%,#363430 17.2%,#363430 21.4%,#363430 25.5%,#363430 29.7%,#363430 33.9%,#363430 38.0%,#363430 42.2%,#363430 46.4%,#363430 50.5%,#363430 54.7%,#363430 58.9%,#363430 63.0%,#363430 67.2%,#363430 71.4%,#363430 75.5%,#363430 79.7%,#363430 83.9%,#363430 88.0%,#363430 92.2%,#34322e 96.4%,#373531 99.5%)"></div>
<div style="left:1199px;top:544px;width:81px;height:4px;background:linear-gradient(90deg,#372a20 0.6%,#372b20 5.6%,#493d2c 10.5%,#6e6043 15.4%,#8f7f58 20.4%,#9c8c60 25.3%,#a08f61 30.2%,#a39162 35.2%,#a69363 40.1%,#a79363 45.1%,#a79363 50.0%,#a79363 54.9%,#a79363 59.9%,#a79363 64.8%,#a79363 69.8%,#a79363 74.7%,#a79363 79.6%,#a79363 84.6%,#a59263 89.5%,#a29062 94.4%,#9f8e61 99.4%)"></div>
<div style="left:0px;top:548px;width:96px;height:4px;background:linear-gradient(90deg,#36332f 0.5%,#36332f 4.7%,#36332f 8.9%,#36332f 13.0%,#36332f 17.2%,#36332f 21.4%,#36332f 25.5%,#36332f 29.7%,#36332f 33.9%,#36332f 38.0%,#36332f 42.2%,#36332f 46.4%,#36332f 50.5%,#36332f 54.7%,#36332f 58.9%,#36332f 63.0%,#36332f 67.2%,#36332f 71.4%,#36332f 75.5%,#36332f 79.7%,#36332f 83.9%,#36332f 88.0%,#36332f 92.2%,#34312d 96.4%,#373430 99.5%)"></div>
<div style="left:1199px;top:548px;width:81px;height:4px;background:linear-gradient(90deg,#372a20 0.6%,#372b20 5.6%,#493d2c 10.5%,#6e6043 15.4%,#8f7f58 20.4%,#9c8c60 25.3%,#9f8e61 30.2%,#a29062 35.2%,#a59263 40.1%,#a69263 45.1%,#a69262 50.0%,#a69262 54.9%,#a59262 59.9%,#a59162 64.8%,#a59162 69.8%,#a49162 74.7%,#a49062 79.6%,#a38f61 84.6%,#a18e61 89.5%,#9e8c60 94.4%,#9b8a5f 99.4%)"></div>
<div style="left:0px;top:552px;width:96px;height:4px;background:linear-gradient(90deg,#36332f 0.5%,#36332f 4.7%,#36332f 8.9%,#36332f 13.0%,#36332f 17.2%,#36332f 21.4%,#36332f 25.5%,#36332f 29.7%,#36332f 33.9%,#36332f 38.0%,#36332f 42.2%,#36332f 46.4%,#36332f 50.5%,#36332f 54.7%,#36332f 58.9%,#36332f 63.0%,#36332f 67.2%,#36332f 71.4%,#36332f 75.5%,#36332f 79.7%,#36332f 83.9%,#36332f 88.0%,#36332f 92.2%,#34312d 96.4%,#373430 99.5%)"></div>
<div style="left:1199px;top:552px;width:81px;height:4px;background:linear-gradient(90deg,#372a20 0.6%,#372b20 5.6%,#493d2c 10.5%,#6c5e42 15.4%,#8c7c56 20.4%,#98885e 25.3%,#9b8a5e 30.2%,#9c8b5f 35.2%,#9f8c5f 40.1%,#9f8c5f 45.1%,#9e8b5f 50.0%,#9d8a5e 54.9%,#9d8a5e 59.9%,#9b895d 64.8%,#9a875d 69.8%,#99875c 74.7%,#98865c 79.6%,#96845b 84.6%,#94825a 89.5%,#928159 94.4%,#908059 99.4%)"></div>
<div style="left:0px;top:556px;width:96px;height:4px;background:linear-gradient(90deg,#36332f 0.5%,#36332f 4.7%,#36332f 8.9%,#36332f 13.0%,#36332f 17.2%,#36332f 21.4%,#36332f 25.5%,#36332f 29.7%,#36332f 33.9%,#36332f 38.0%,#36332f 42.2%,#36332f 46.4%,#36332f 50.5%,#36332f 54.7%,#36332f 58.9%,#36332f 63.0%,#36332f 67.2%,#36332f 71.4%,#36332f 75.5%,#36332f 79.7%,#36332f 83.9%,#36332f 88.0%,#36332f 92.2%,#34312d 96.4%,#373430 99.5%)"></div>
<div style="left:1199px;top:556px;width:81px;height:4px;background:linear-gradient(90deg,#372a20 0.6%,#372b20 5.6%,#483c2c 10.5%,#685a40 15.4%,#837451 20.4%,#8d7e58 25.3%,#8e7e58 30.2%,#8e7e57 35.2%,#907e58 40.1%,#8f7e57 45.1%,#8d7c56 50.0%,#8c7b55 54.9%,#8b7a55 59.9%,#897954 64.8%,#887754 69.8%,#877653 74.7%,#867552 79.6%,#847452 84.6%,#837251 89.5%,#817251 94.4%,#817150 99.4%)"></div>
<div style="left:0px;top:560px;width:96px;height:4px;background:linear-gradient(90deg,#36332f 0.5%,#36332f 4.7%,#36332f 8.9%,#36332f 13.0%,#36332f 17.2%,#36332f 21.4%,#36332f 25.5%,#36332f 29.7%,#36332f 33.9%,#36332f 38.0%,#36332f 42.2%,#36332f 46.4%,#36332f 50.5%,#36332f 54.7%,#36332f 58.9%,#36332f 63.0%,#36332f 67.2%,#36332f 71.4%,#36332f 75.5%,#36332f 79.7%,#36332f 83.9%,#36332f 88.0%,#36332f 92.2%,#34312d 96.4%,#373430 99.5%)"></div>
<div style="left:1199px;top:560px;width:81px;height:4px;background:linear-gradient(90deg,#372a20 0.6%,#372b20 5.6%,#473b2b 10.5%,#63553d 15.4%,#78694b 20.4%,#7f7050 25.3%,#7f6f50 30.2%,#7f6f4f 35.2%,#7f6f4f 40.1%,#7e6e4f 45.1%,#7d6d4e 50.0%,#7c6c4e 54.9%,#7b6c4d 59.9%,#7b6b4d 64.8%,#7a6a4c 69.8%,#796a4c 74.7%,#796a4c 79.6%,#78694c 84.6%,#78684b 89.5%,#77684b 94.4%,#77684b 99.4%)"></div>
<div style="left:0px;top:564px;width:96px;height:4px;background:linear-gradient(90deg,#36332f 0.5%,#36332f 4.7%,#36332f 8.9%,#36332f 13.0%,#36332f 17.2%,#36332f 21.4%,#36332f 25.5%,#36332f 29.7%,#36332f 33.9%,#36332f 38.0%,#36332f 42.2%,#36332f 46.4%,#36332f 50.5%,#36332f 54.7%,#36332f 58.9%,#36332f 63.0%,#36332f 67.2%,#36332f 71.4%,#36332f 75.5%,#36332f 79.7%,#36332f 83.9%,#36332f 88.0%,#36332f 92.2%,#34312d 96.4%,#373430 99.5%)"></div>
<div style="left:1199px;top:564px;width:81px;height:4px;background:linear-gradient(90deg,#372a20 0.6%,#372b20 5.6%,#463a2b 10.5%,#5f513b 15.4%,#716347 20.4%,#77684b 25.3%,#77684b 30.2%,#76674b 35.2%,#76674b 40.1%,#76674b 45.1%,#76674b 50.0%,#76674a 54.9%,#76674a 59.9%,#76664a 64.8%,#75664a 69.8%,#75664a 74.7%,#75664a 79.6%,#75664a 84.6%,#75664a 89.5%,#75664a 94.4%,#75664a 99.4%)"></div>
<div style="left:0px;top:568px;width:96px;height:4px;background:linear-gradient(90deg,#36332f 0.5%,#36332f 4.7%,#36332f 8.9%,#36332f 13.0%,#36332f 17.2%,#36332f 21.4%,#36332f 25.5%,#36332f 29.7%,#36332f 33.9%,#36332f 38.0%,#36332f 42.2%,#36332f 46.4%,#36332f 50.5%,#36332f 54.7%,#36332f 58.9%,#36332f 63.0%,#36332f 67.2%,#36332f 71.4%,#36332f 75.5%,#36332f 79.7%,#36332f 83.9%,#36332f 88.0%,#36332f 92.2%,#34312d 96.4%,#373430 99.5%)"></div>
<div style="left:1199px;top:568px;width:81px;height:4px;background:linear-gradient(90deg,#372a20 0.6%,#372b20 5.6%,#463a2b 10.5%,#5e503a 15.4%,#6f6146 20.4%,#75664a 25.3%,#75664a 30.2%,#75664a 35.2%,#75664a 40.1%,#75664a 45.1%,#75664a 50.0%,#75664a 54.9%,#75664a 59.9%,#75664a 64.8%,#75664a 69.8%,#75664a 74.7%,#75664a 79.6%,#75664a 84.6%,#75664a 89.5%,#75664a 94.4%,#75664a 99.4%)"></div>
<div style="left:0px;top:572px;width:96px;height:4px;background:linear-gradient(90deg,#36332f 0.5%,#36332f 4.7%,#36332f 8.9%,#36332f 13.0%,#36332f 17.2%,#36332f 21.4%,#36332f 25.5%,#36332f 29.7%,#36332f 33.9%,#36332f 38.0%,#36332f 42.2%,#36332f 46.4%,#36332f 50.5%,#36332f 54.7%,#36332f 58.9%,#36332f 63.0%,#36332f 67.2%,#36332f 71.4%,#36332f 75.5%,#36332f 79.7%,#36332f 83.9%,#36332f 88.0%,#36332f 92.2%,#34312d 96.4%,#373430 99.5%)"></div>
<div style="left:1199px;top:572px;width:81px;height:4px;background:linear-gradient(90deg,#372a20 0.6%,#372b20 5.6%,#463a2b 10.5%,#5e503a 15.4%,#6f6146 20.4%,#75664a 25.3%,#75664a 30.2%,#75664a 35.2%,#75664a 40.1%,#75664a 45.1%,#75664a 50.0%,#75664a 54.9%,#75664a 59.9%,#75664a 64.8%,#75664a 69.8%,#75664a 74.7%,#75664a 79.6%,#75664a 84.6%,#75664a 89.5%,#75664a 94.4%,#75664a 99.4%)"></div>
<div style="left:0px;top:576px;width:96px;height:4px;background:linear-gradient(90deg,#36332f 0.5%,#36332f 4.7%,#36332f 8.9%,#36332f 13.0%,#36332f 17.2%,#36332f 21.4%,#36332f 25.5%,#36332f 29.7%,#36332f 33.9%,#36332f 38.0%,#36332f 42.2%,#36332f 46.4%,#36332f 50.5%,#36332f 54.7%,#36332f 58.9%,#36332f 63.0%,#36332f 67.2%,#36332f 71.4%,#36332f 75.5%,#36332f 79.7%,#36332f 83.9%,#36332f 88.0%,#373430 92.2%,#37342f 96.4%,#3b3834 99.5%)"></div>
<div style="left:1199px;top:576px;width:81px;height:4px;background:linear-gradient(90deg,#372a20 0.6%,#372b20 5.6%,#463a2b 10.5%,#5e503a 15.4%,#6f6146 20.4%,#75664a 25.3%,#75664a 30.2%,#75664a 35.2%,#75664a 40.1%,#75664a 45.1%,#75664a 50.0%,#75664a 54.9%,#75664a 59.9%,#75664a 64.8%,#75664a 69.8%,#75664a 74.7%,#75664a 79.6%,#75664a 84.6%,#75664a 89.5%,#75664a 94.4%,#75664a 99.4%)"></div>
<div style="left:0px;top:580px;width:96px;height:4px;background:linear-gradient(90deg,#36332f 0.5%,#36332f 4.7%,#36332f 8.9%,#36332f 13.0%,#36332f 17.2%,#36332f 21.4%,#36332f 25.5%,#36332f 29.7%,#36332f 33.9%,#36332f 38.0%,#36332f 42.2%,#36332f 46.4%,#36332f 50.5%,#36332f 54.7%,#36332f 58.9%,#36332f 63.0%,#36332f 67.2%,#36332f 71.4%,#36332f 75.5%,#36332f 79.7%,#36332f 83.9%,#383531 88.0%,#3d3a36 92.2%,#433f3a 96.4%,#4b4742 99.5%)"></div>
<div style="left:1199px;top:580px;width:81px;height:4px;background:linear-gradient(90deg,#372a20 0.6%,#372b20 5.6%,#463a2b 10.5%,#5e503a 15.4%,#6f6146 20.4%,#75664a 25.3%,#75664a 30.2%,#75664a 35.2%,#75664a 40.1%,#75664a 45.1%,#75664a 50.0%,#75664a 54.9%,#75664a 59.9%,#75664a 64.8%,#75664a 69.8%,#75664a 74.7%,#75664a 79.6%,#75664a 84.6%,#75664a 89.5%,#75664a 94.4%,#75664a 99.4%)"></div>
<div style="left:0px;top:584px;width:96px;height:4px;background:linear-gradient(90deg,#36332f 0.5%,#36332f 4.7%,#36332f 8.9%,#36332f 13.0%,#36332f 17.2%,#36332f 21.4%,#36332f 25.5%,#36332f 29.7%,#36332f 33.9%,#36332f 38.0%,#36332f 42.2%,#36332f 46.4%,#36332f 50.5%,#36332f 54.7%,#36332f 58.9%,#36332f 63.0%,#36332f 67.2%,#36332f 71.4%,#36332f 75.5%,#373430 79.7%,#3a3733 83.9%,#413e39 88.0%,#4c4943 92.2%,#57534d 96.4%,#635e58 99.5%)"></div>
<div style="left:1199px;top:584px;width:81px;height:4px;background:linear-gradient(90deg,#372a20 0.6%,#372b20 5.6%,#463a2b 10.5%,#5e503a 15.4%,#6f6146 20.4%,#75664a 25.3%,#75664a 30.2%,#75664a 35.2%,#75664a 40.1%,#75664a 45.1%,#75664a 50.0%,#75664a 54.9%,#75664a 59.9%,#75664a 64.8%,#75664a 69.8%,#75664a 74.7%,#75664a 79.6%,#75664a 84.6%,#75664a 89.5%,#75664a 94.4%,#75664a 99.4%)"></div>
<div style="left:0px;top:588px;width:96px;height:4px;background:linear-gradient(90deg,#36332f 0.5%,#36332f 4.7%,#36332f 8.9%,#36332f 13.0%,#36332f 17.2%,#36332f 21.4%,#36332f 25.5%,#36332f 29.7%,#36332f 33.9%,#36332f 38.0%,#36332f 42.2%,#36332f 46.4%,#36332f 50.5%,#36332f 54.7%,#36332f 58.9%,#36332f 63.0%,#36332f 67.2%,#36332f 71.4%,#383531 75.5%,#3c3a35 79.7%,#46423d 83.9%,#54504a 88.0%,#625d56 92.2%,#6b665e 96.4%,#757068 99.5%)"></div>
<div style="left:1199px;top:588px;width:81px;height:4px;background:linear-gradient(90deg,#372a20 0.6%,#372b20 5.6%,#463a2b 10.5%,#5e503a 15.4%,#6f6146 20.4%,#75664a 25.3%,#75664a 30.2%,#75664a 35.2%,#75664a 40.1%,#75664a 45.1%,#75664a 50.0%,#75664a 54.9%,#75664a 59.9%,#75664a 64.8%,#75664a 69.8%,#75664a 74.7%,#75664a 79.6%,#75664a 84.6%,#75664a 89.5%,#75664a 94.4%,#75664a 99.4%)"></div>
<div style="left:0px;top:592px;width:96px;height:4px;background:linear-gradient(90deg,#36332f 0.5%,#36332f 4.7%,#36332f 8.9%,#36332f 13.0%,#36332f 17.2%,#36332f 21.4%,#36332f 25.5%,#36332f 29.7%,#36332f 33.9%,#36332f 38.0%,#36332f 42.2%,#36332f 46.4%,#36332f 50.5%,#36332f 54.7%,#36332f 58.9%,#36332f 63.0%,#37332f 67.2%,#393632 71.4%,#3f3c37 75.5%,#4b4842 79.7%,#5a564f 83.9%,#68645c 88.0%,#726d65 92.2%,#747067 96.4%,#7b766d 99.5%)"></div>
<div style="left:1199px;top:592px;width:81px;height:4px;background:linear-gradient(90deg,#372a20 0.6%,#372b20 5.6%,#463a2b 10.5%,#5e503a 15.4%,#6f6146 20.4%,#75664a 25.3%,#75664a 30.2%,#75664a 35.2%,#75664a 40.1%,#75664a 45.1%,#75664a 50.0%,#75664a 54.9%,#75664a 59.9%,#75664a 64.8%,#75664a 69.8%,#75664a 74.7%,#75664a 79.6%,#75664a 84.6%,#75664a 89.5%,#75664a 94.4%,#75664a 99.4%)"></div>
<div style="left:0px;top:596px;width:96px;height:4px;background:linear-gradient(90deg,#36332f 0.5%,#36332f 4.7%,#36332f 8.9%,#36332f 13.0%,#36332f 17.2%,#36332f 21.4%,#36332f 25.5%,#36332f 29.7%,#36332f 33.9%,#36332f 38.0%,#36332f 42.2%,#36332f 46.4%,#36332f 50.5%,#36332f 54.7%,#36332f 58.9%,#36332f 63.0%,#393531 67.2%,#413d39 71.4%,#4f4c45 75.5%,#5f5b54 79.7%,#6d6961 83.9%,#757168 88.0%,#79746b 92.2%,#767169 96.4%,#7c776e 99.5%)"></div>
<div style="left:1199px;top:596px;width:81px;height:4px;background:linear-gradient(90deg,#372a20 0.6%,#372b20 5.6%,#463a2b 10.5%,#5e503a 15.4%,#6f6146 20.4%,#75664a 25.3%,#75664a 30.2%,#75664a 35.2%,#75664a 40.1%,#75664a 45.1%,#75664a 50.0%,#75664a 54.9%,#75664a 59.9%,#75664a 64.8%,#75664a 69.8%,#75664a 74.7%,#75664a 79.6%,#75664a 84.6%,#75664a 89.5%,#75664a 94.4%,#75664a 99.4%)"></div>
<div style="left:0px;top:600px;width:96px;height:4px;background:linear-gradient(90deg,#36332f 0.5%,#36332f 4.7%,#36332f 8.9%,#36332f 13.0%,#36332f 17.2%,#36332f 21.4%,#36332f 25.5%,#36332f 29.7%,#36332f 33.9%,#36332f 38.0%,#36332f 42.2%,#36332f 46.4%,#36332f 50.5%,#36332f 54.7%,#36332f 58.9%,#373430 63.0%,#3e3a36 67.2%,#4d4944 71.4%,#615d56 75.5%,#706c63 79.7%,#78736a 83.9%,#7a756c 88.0%,#7a756c 92.2%,#767169 96.4%,#7c776e 99.5%)"></div>
<div style="left:1199px;top:600px;width:81px;height:4px;background:linear-gradient(90deg,#372a20 0.6%,#372b20 5.6%,#463a2b 10.5%,#5e503a 15.4%,#6f6146 20.4%,#75664a 25.3%,#75664a 30.2%,#75664a 35.2%,#75664a 40.1%,#75664a 45.1%,#75664a 50.0%,#75664a 54.9%,#75664a 59.9%,#75664a 64.8%,#75664a 69.8%,#75664a 74.7%,#75664a 79.6%,#75664a 84.6%,#75664a 89.5%,#75664a 94.4%,#75664a 99.4%)"></div>
<div style="left:0px;top:604px;width:96px;height:4px;background:linear-gradient(90deg,#36332f 0.5%,#36332f 4.7%,#36332f 8.9%,#36332f 13.0%,#36332f 17.2%,#36332f 21.4%,#36332f 25.5%,#36332f 29.7%,#36332f 33.9%,#36332f 38.0%,#36332f 42.2%,#36332f 46.4%,#36332f 50.5%,#36332f 54.7%,#36332f 58.9%,#393632 63.0%,#45423d 67.2%,#5a5650 71.4%,#6e6962 75.5%,#78736a 79.7%,#7b766d 83.9%,#7b766d 88.0%,#7a756c 92.2%,#767169 96.4%,#7c776e 99.5%)"></div>
<div style="left:1199px;top:604px;width:81px;height:4px;background:linear-gradient(90deg,#382b21 0.6%,#372c21 5.6%,#45392b 10.5%,#5b4d38 15.4%,#6a5d43 20.4%,#706147 25.3%,#706147 30.2%,#706147 35.2%,#706147 40.1%,#706147 45.1%,#706147 50.0%,#706147 54.9%,#706147 59.9%,#706147 64.8%,#706147 69.8%,#706147 74.7%,#706147 79.6%,#706147 84.6%,#706147 89.5%,#706147 94.4%,#706147 99.4%)"></div>
<div style="left:0px;top:608px;width:96px;height:4px;background:linear-gradient(90deg,#36332f 0.5%,#36332f 4.7%,#36332f 8.9%,#36332f 13.0%,#36332f 17.2%,#36332f 21.4%,#36332f 25.5%,#36332f 29.7%,#36332f 33.9%,#36332f 38.0%,#36332f 42.2%,#36332f 46.4%,#36332f 50.5%,#36332f 54.7%,#373430 58.9%,#3e3b36 63.0%,#4f4c46 67.2%,#66625a 71.4%,#757068 75.5%,#7b766d 79.7%,#7b766d 83.9%,#7b766d 88.0%,#7a756c 92.2%,#767169 96.4%,#7c776e 99.5%)"></div>
<div style="left:1199px;top:608px;width:81px;height:4px;background:linear-gradient(90deg,#3a2e24 0.6%,#382d23 5.6%,#42372a 10.5%,#524534 15.4%,#5d503b 20.4%,#61543e 25.3%,#61543e 30.2%,#61543e 35.2%,#61543e 40.1%,#61543e 45.1%,#61543e 50.0%,#61543e 54.9%,#61543e 59.9%,#61543e 64.8%,#61543e 69.8%,#61543e 74.7%,#61543e 79.6%,#61543e 84.6%,#61543e 89.5%,#61543e 94.4%,#61543e 99.4%)"></div>
<div style="left:0px;top:612px;width:96px;height:4px;background:linear-gradient(90deg,#36332f 0.5%,#36332f 4.7%,#36332f 8.9%,#36332f 13.0%,#36332f 17.2%,#36332f 21.4%,#36332f 25.5%,#36332f 29.7%,#36332f 33.9%,#36332f 38.0%,#36332f 42.2%,#36332f 46.4%,#36332f 50.5%,#36332f 54.7%,#393632 58.9%,#46423d 63.0%,#5b5751 67.2%,#6f6b63 71.4%,#79746b 75.5%,#7b766d 79.7%,#7b766d 83.9%,#7b766d 88.0%,#7a756c 92.2%,#767169 96.4%,#7c776e 99.5%)"></div>
<div style="left:1199px;top:612px;width:81px;height:4px;background:linear-gradient(90deg,#3c3127 0.6%,#3a2f26 5.6%,#3f3529 10.5%,#463b2e 15.4%,#4b4031 20.4%,#4c4132 25.3%,#4c4132 30.2%,#4c4132 35.2%,#4c4132 40.1%,#4c4132 45.1%,#4c4132 50.0%,#4c4132 54.9%,#4c4132 59.9%,#4c4132 64.8%,#4c4132 69.8%,#4c4132 74.7%,#4c4132 79.6%,#4c4132 84.6%,#4c4132 89.5%,#4c4132 94.4%,#4c4132 99.4%)"></div>
<div style="left:0px;top:616px;width:96px;height:4px;background:linear-gradient(90deg,#36332f 0.5%,#36332f 4.7%,#36332f 8.9%,#36332f 13.0%,#36332f 17.2%,#36332f 21.4%,#36332f 25.5%,#36332f 29.7%,#36332f 33.9%,#36332f 38.0%,#36332f 42.2%,#36332f 46.4%,#36332f 50.5%,#373430 54.7%,#3e3b36 58.9%,#4f4c46 63.0%,#66625b 67.2%,#767168 71.4%,#7b766d 75.5%,#7b766d 79.7%,#7b766d 83.9%,#7b766d 88.0%,#7a756c 92.2%,#767169 96.4%,#7c776e 99.5%)"></div>
<div style="left:1199px;top:616px;width:81px;height:4px;background:linear-gradient(90deg,#3e3329 0.6%,#3b3128 5.6%,#3e3329 10.5%,#3f352a 15.4%,#40352b 20.4%,#40362b 25.3%,#40362b 30.2%,#40362b 35.2%,#40362b 40.1%,#40362b 45.1%,#40362b 50.0%,#40362b 54.9%,#40362b 59.9%,#40362b 64.8%,#40362b 69.8%,#40362b 74.7%,#40362b 79.6%,#40362b 84.6%,#40362b 89.5%,#40362b 94.4%,#40362b 99.4%)"></div>
<div style="left:0px;top:620px;width:96px;height:4px;background:linear-gradient(90deg,#36332f 0.5%,#36332f 4.7%,#36332f 8.9%,#36332f 13.0%,#36332f 17.2%,#36332f 21.4%,#36332f 25.5%,#36332f 29.7%,#36332f 33.9%,#36332f 38.0%,#36332f 42.2%,#36332f 46.4%,#36332f 50.5%,#393631 54.7%,#44413c 58.9%,#5a564f 63.0%,#6f6a62 67.2%,#79746b 71.4%,#7b766d 75.5%,#7b766d 79.7%,#7b766d 83.9%,#7b766d 88.0%,#7a756c 92.2%,#767169 96.4%,#7c776e 99.5%)"></div>
<div style="left:1199px;top:620px;width:81px;height:4px;background:linear-gradient(90deg,#3e342a 0.6%,#3b3128 5.6%,#3d3329 10.5%,#3d3329 15.4%,#3d3329 20.4%,#3d3329 25.3%,#3d3329 30.2%,#3d3329 35.2%,#3d3329 40.1%,#3d3329 45.1%,#3d3329 50.0%,#3d3329 54.9%,#3d3329 59.9%,#3d3329 64.8%,#3d3329 69.8%,#3d3329 74.7%,#3d3329 79.6%,#3d3329 84.6%,#3d3329 89.5%,#3d3329 94.4%,#3d3329 99.4%)"></div>
<div style="left:0px;top:624px;width:96px;height:4px;background:linear-gradient(90deg,#36332f 0.5%,#36332f 4.7%,#36332f 8.9%,#36332f 13.0%,#36332f 17.2%,#36332f 21.4%,#36332f 25.5%,#36332f 29.7%,#36332f 33.9%,#36332f 38.0%,#36332f 42.2%,#36332f 46.4%,#36332f 50.5%,#3c3935 54.7%,#4c4943 58.9%,#635f58 63.0%,#746f67 67.2%,#7a756d 71.4%,#7b766d 75.5%,#7b766d 79.7%,#7b766d 83.9%,#7b766d 88.0%,#7a756c 92.2%,#767169 96.4%,#7c776e 99.5%)"></div>
<div style="left:1199px;top:624px;width:81px;height:4px;background:linear-gradient(90deg,#3e342a 0.6%,#3b3128 5.6%,#3d3329 10.5%,#3d3329 15.4%,#3d3329 20.4%,#3d332a 25.3%,#3d342a 30.2%,#3d342a 35.2%,#3d342b 40.1%,#3d342b 45.1%,#3d342b 50.0%,#3d342b 54.9%,#3d342b 59.9%,#3d342b 64.8%,#3d342a 69.8%,#3d342a 74.7%,#3d3329 79.6%,#3d3329 84.6%,#3d3329 89.5%,#3d3329 94.4%,#3d3329 99.4%)"></div>
<div style="left:0px;top:628px;width:96px;height:4px;background:linear-gradient(90deg,#36332f 0.5%,#36332f 4.7%,#36332f 8.9%,#36332f 13.0%,#36332f 17.2%,#36332f 21.4%,#36332f 25.5%,#36332f 29.7%,#36332f 33.9%,#36332f 38.0%,#36332f 42.2%,#36332f 46.4%,#383531 50.5%,#43403b 54.7%,#56534d 58.9%,#6a665f 63.0%,#767169 67.2%,#7a756d 71.4%,#7b766d 75.5%,#7b766d 79.7%,#7b766d 83.9%,#7b766d 88.0%,#7a756c 92.2%,#767169 96.4%,#7c776e 99.5%)"></div>
<div style="left:1199px;top:628px;width:81px;height:4px;background:linear-gradient(90deg,#3e342a 0.6%,#3b3128 5.6%,#3d3329 10.5%,#3d3329 15.4%,#3d342a 20.4%,#3e352c 25.3%,#3e372e 30.2%,#3e372e 35.2%,#3e372f 40.1%,#3e372f 45.1%,#3e372f 50.0%,#3e372f 54.9%,#3e372f 59.9%,#3e372f 64.8%,#3e372e 69.8%,#3e362d 74.7%,#3d342b 79.6%,#3d3329 84.6%,#3d3329 89.5%,#3d3329 94.4%,#3d3329 99.4%)"></div>
<div style="left:0px;top:632px;width:96px;height:4px;background:linear-gradient(90deg,#36332f 0.5%,#36332f 4.7%,#36332f 8.9%,#36332f 13.0%,#36332f 17.2%,#36332f 21.4%,#36332f 25.5%,#36332f 29.7%,#36332f 33.9%,#36332f 38.0%,#36332f 42.2%,#373430 46.4%,#3d3a36 50.5%,#4d4a44 54.7%,#615d56 58.9%,#6f6b63 63.0%,#767169 67.2%,#79746b 71.4%,#7a756d 75.5%,#7b766d 79.7%,#7b766d 83.9%,#7b766d 88.0%,#7a756c 92.2%,#767169 96.4%,#7c776e 99.5%)"></div>
<div style="left:1199px;top:632px;width:81px;height:4px;background:linear-gradient(90deg,#3e342a 0.6%,#3b3128 5.6%,#3d3329 10.5%,#3d3329 15.4%,#3d352b 20.4%,#3f372e 25.3%,#3f3a32 30.2%,#403c34 35.2%,#403c34 40.1%,#403c34 45.1%,#403c34 50.0%,#403c34 54.9%,#403c34 59.9%,#403c34 64.8%,#403b33 69.8%,#3f3930 74.7%,#3e352d 79.6%,#3d342a 84.6%,#3d3329 89.5%,#3d3329 94.4%,#3d3329 99.4%)"></div>
<div style="left:0px;top:636px;width:96px;height:4px;background:linear-gradient(90deg,#36332f 0.5%,#36332f 4.7%,#36332f 8.9%,#36332f 13.0%,#36332f 17.2%,#36332f 21.4%,#36332f 25.5%,#36332f 29.7%,#36332f 33.9%,#36332f 38.0%,#373430 42.2%,#3b3834 46.4%,#47433f 50.5%,#595650 54.7%,#6a665e 58.9%,#726e66 63.0%,#747068 67.2%,#77726a 71.4%,#78736b 75.5%,#79746b 79.7%,#79746b 83.9%,#79746b 88.0%,#78736a 92.2%,#747067 96.4%,#7a756c 99.5%)"></div>
<div style="left:1199px;top:636px;width:81px;height:4px;background:linear-gradient(90deg,#3e342a 0.6%,#3b3128 5.6%,#3d3329 10.5%,#3d3329 15.4%,#3d352b 20.4%,#3f3830 25.3%,#403c35 30.2%,#413e37 35.2%,#413e38 40.1%,#413e38 45.1%,#413e38 50.0%,#413e38 54.9%,#413e38 59.9%,#413e38 64.8%,#413d36 69.8%,#403b32 74.7%,#3e362e 79.6%,#3d342a 84.6%,#3d3329 89.5%,#3d3329 94.4%,#3d3329 99.4%)"></div>
<div style="left:0px;top:640px;width:96px;height:4px;background:linear-gradient(90deg,#36332f 0.5%,#36332f 4.7%,#36332f 8.9%,#36332f 13.0%,#36332f 17.2%,#36332f 21.4%,#36332f 25.5%,#36332f 29.7%,#36332f 33.9%,#36332f 38.0%,#393632 42.2%,#43403b 46.4%,#54504b 50.5%,#65615b 54.7%,#706c64 58.9%,#736f67 63.0%,#736f67 67.2%,#747068 71.4%,#757169 75.5%,#767269 79.7%,#767269 83.9%,#767269 88.0%,#757168 92.2%,#716e65 96.4%,#77736a 99.5%)"></div>
<div style="left:1199px;top:640px;width:81px;height:4px;background:linear-gradient(90deg,#3e342a 0.6%,#3b3128 5.6%,#3d3329 10.5%,#3d3329 15.4%,#3d352b 20.4%,#3f3830 25.3%,#403d36 30.2%,#413f38 35.2%,#413f39 40.1%,#413f39 45.1%,#413f39 50.0%,#413f39 54.9%,#413f39 59.9%,#413f39 64.8%,#413e37 69.8%,#403b33 74.7%,#3e362e 79.6%,#3d342a 84.6%,#3d3329 89.5%,#3d3329 94.4%,#3d3329 99.4%)"></div>
<div style="left:0px;top:644px;width:96px;height:4px;background:linear-gradient(90deg,#36332f 0.5%,#36332f 4.7%,#36332f 8.9%,#36332f 13.0%,#36332f 17.2%,#36332f 21.4%,#36332f 25.5%,#36332f 29.7%,#36332f 33.9%,#383531 38.0%,#403d38 42.2%,#504c47 46.4%,#625e57 50.5%,#6e6a62 54.7%,#726e66 58.9%,#736f67 63.0%,#736f67 67.2%,#736f67 71.4%,#736f67 75.5%,#747067 79.7%,#747067 83.9%,#747067 88.0%,#736f66 92.2%,#706c63 96.4%,#757168 99.5%)"></div>
<div style="left:1199px;top:644px;width:81px;height:4px;background:linear-gradient(90deg,#3c3228 0.6%,#392f26 5.6%,#3b3127 10.5%,#3b3127 15.4%,#3b3329 20.4%,#3c352e 25.3%,#3d3a33 30.2%,#3e3b35 35.2%,#3e3b35 40.1%,#3e3b35 45.1%,#3e3b35 50.0%,#3e3b35 54.9%,#3e3b35 59.9%,#3e3b35 64.8%,#3e3a34 69.8%,#3d3830 74.7%,#3c342c 79.6%,#3b3228 84.6%,#3b3127 89.5%,#3b3127 94.4%,#3b3127 99.4%)"></div>
<div style="left:0px;top:648px;width:96px;height:4px;background:linear-gradient(90deg,#36332f 0.5%,#36332f 4.7%,#36332f 8.9%,#36332f 13.0%,#36332f 17.2%,#36332f 21.4%,#36332f 25.5%,#36332f 29.7%,#373430 33.9%,#3e3b36 38.0%,#4c4843 42.2%,#5e5a54 46.4%,#6c6860 50.5%,#726e66 54.7%,#736f67 58.9%,#736f67 63.0%,#736f67 67.2%,#736f67 71.4%,#736f67 75.5%,#736f67 79.7%,#736f67 83.9%,#736f67 88.0%,#726e66 92.2%,#6f6b63 96.4%,#747068 99.5%)"></div>
<div style="left:1199px;top:648px;width:81px;height:4px;background:linear-gradient(90deg,#352c24 0.6%,#322a22 5.6%,#342b23 10.5%,#342b23 15.4%,#342c24 20.4%,#352d27 25.3%,#35302a 30.2%,#36312b 35.2%,#36312c 40.1%,#36312c 45.1%,#36312c 50.0%,#36312c 54.9%,#36312c 59.9%,#36312c 64.8%,#36312a 69.8%,#352f28 74.7%,#342c26 79.6%,#342b23 84.6%,#342b23 89.5%,#342b23 94.4%,#342b23 99.4%)"></div>
<div style="left:0px;top:652px;width:96px;height:4px;background:linear-gradient(90deg,#36332f 0.5%,#36332f 4.7%,#36332f 8.9%,#36332f 13.0%,#36332f 17.2%,#36332f 21.4%,#36332f 25.5%,#373430 29.7%,#3b3834 33.9%,#48453f 38.0%,#5a5650 42.2%,#69655e 46.4%,#716d65 50.5%,#736f67 54.7%,#736f67 58.9%,#736f67 63.0%,#736f67 67.2%,#736f67 71.4%,#736f67 75.5%,#736f67 79.7%,#736f67 83.9%,#736f67 88.0%,#726e66 92.2%,#6f6b63 96.4%,#747068 99.5%)"></div>
<div style="left:1199px;top:652px;width:81px;height:4px;background:linear-gradient(90deg,#2b231e 0.6%,#29211c 5.6%,#2a221d 10.5%,#2a221d 15.4%,#2a231d 20.4%,#2a231e 25.3%,#2b241f 30.2%,#2b251f 35.2%,#2b2520 40.1%,#2b2520 45.1%,#2b2520 50.0%,#2b2520 54.9%,#2b2520 59.9%,#2b2520 64.8%,#2b251f 69.8%,#2b241f 74.7%,#2a231e 79.6%,#2a221d 84.6%,#2a221d 89.5%,#2a221d 94.4%,#2a221d 99.4%)"></div>
<div style="left:0px;top:656px;width:96px;height:4px;background:linear-gradient(90deg,#36332f 0.5%,#36332f 4.7%,#36332f 8.9%,#36332f 13.0%,#36332f 17.2%,#36332f 21.4%,#36332f 25.5%,#3a3732 29.7%,#44413c 33.9%,#56524c 38.0%,#67635c 42.2%,#706c64 46.4%,#736f67 50.5%,#736f67 54.7%,#736f67 58.9%,#736f67 63.0%,#736f67 67.2%,#736f67 71.4%,#736f67 75.5%,#736f67 79.7%,#736f67 83.9%,#736f67 88.0%,#726e66 92.2%,#6f6b63 96.4%,#747068 99.5%)"></div>
<div style="left:1199px;top:656px;width:81px;height:4px;background:linear-gradient(90deg,#251e1a 0.6%,#231c18 5.6%,#241d19 10.5%,#241d19 15.4%,#241d19 20.4%,#241d19 25.3%,#241e19 30.2%,#241e19 35.2%,#241e19 40.1%,#241e19 45.1%,#241e19 50.0%,#241e19 54.9%,#241e19 59.9%,#241e19 64.8%,#241e19 69.8%,#241d19 74.7%,#241d19 79.6%,#241d19 84.6%,#241d19 89.5%,#241d19 94.4%,#241d19 99.4%)"></div>
<div style="left:0px;top:660px;width:96px;height:4px;background:linear-gradient(90deg,#36332f 0.5%,#36332f 4.7%,#36332f 8.9%,#36332f 13.0%,#36332f 17.2%,#36332f 21.4%,#383531 25.5%,#413e39 29.7%,#514e48 33.9%,#636058 38.0%,#6e6a63 42.2%,#726e66 46.4%,#736f67 50.5%,#736f67 54.7%,#736f67 58.9%,#736f67 63.0%,#736f67 67.2%,#736f67 71.4%,#736f67 75.5%,#736f67 79.7%,#736f67 83.9%,#736f67 88.0%,#726e66 92.2%,#6f6b63 96.4%,#747068 99.5%)"></div>
<div style="left:1199px;top:660px;width:81px;height:4px;background:linear-gradient(90deg,#241d19 0.6%,#221b17 5.6%,#231c18 10.5%,#231c18 15.4%,#231c18 20.4%,#231c18 25.3%,#231c18 30.2%,#231c18 35.2%,#231c18 40.1%,#231c18 45.1%,#231c18 50.0%,#231c18 54.9%,#231c18 59.9%,#231c18 64.8%,#231c18 69.8%,#231c18 74.7%,#231c18 79.6%,#231c18 84.6%,#231c18 89.5%,#231c18 94.4%,#231c18 99.4%)"></div>
<div style="left:0px;top:664px;width:96px;height:4px;background:linear-gradient(90deg,#36332f 0.5%,#36332f 4.7%,#36332f 8.9%,#36332f 13.0%,#36332f 17.2%,#383531 21.4%,#3e3b37 25.5%,#4d4a44 29.7%,#5f5c55 33.9%,#6d6961 38.0%,#726e66 42.2%,#736f67 46.4%,#736f67 50.5%,#736f67 54.7%,#736f67 58.9%,#736f67 63.0%,#736f67 67.2%,#736f67 71.4%,#736f67 75.5%,#736f67 79.7%,#736f67 83.9%,#736f67 88.0%,#726e66 92.2%,#6f6b63 96.4%,#747068 99.5%)"></div>
<div style="left:1199px;top:664px;width:81px;height:4px;background:linear-gradient(90deg,#241d19 0.6%,#221b17 5.6%,#231c18 10.5%,#231c18 15.4%,#231c18 20.4%,#231c18 25.3%,#231c18 30.2%,#231c18 35.2%,#231c18 40.1%,#231c18 45.1%,#231c18 50.0%,#231c18 54.9%,#231c18 59.9%,#231c18 64.8%,#231c18 69.8%,#231c18 74.7%,#231c18 79.6%,#231c18 84.6%,#231c18 89.5%,#231c18 94.4%,#231c18 99.4%)"></div>
<div style="left:0px;top:668px;width:96px;height:4px;background:linear-gradient(90deg,#36332f 0.5%,#36332f 4.7%,#36332f 8.9%,#36332f 13.0%,#373430 17.2%,#3c3935 21.4%,#494641 25.5%,#5c5851 29.7%,#6a665f 33.9%,#716d65 38.0%,#736f67 42.2%,#736f67 46.4%,#736f67 50.5%,#736f67 54.7%,#736f67 58.9%,#736f67 63.0%,#736f67 67.2%,#736f67 71.4%,#736f67 75.5%,#736f67 79.7%,#736f67 83.9%,#736f67 88.0%,#726e66 92.2%,#6f6b63 96.4%,#747068 99.5%)"></div>
<div style="left:1199px;top:668px;width:81px;height:4px;background:linear-gradient(90deg,#241d19 0.6%,#221b17 5.6%,#231c18 10.5%,#231c18 15.4%,#231c18 20.4%,#231c18 25.3%,#231c18 30.2%,#231c18 35.2%,#231c18 40.1%,#231c18 45.1%,#231c18 50.0%,#231c18 54.9%,#231c18 59.9%,#231c18 64.8%,#231c18 69.8%,#231c18 74.7%,#231c18 79.6%,#231c18 84.6%,#231c18 89.5%,#231c18 94.4%,#231c18 99.4%)"></div>
<div style="left:0px;top:672px;width:96px;height:4px;background:linear-gradient(90deg,#36332f 0.5%,#36332f 4.7%,#36332f 8.9%,#373430 13.0%,#3b3834 17.2%,#46433e 21.4%,#58544e 25.5%,#68645d 29.7%,#706c65 33.9%,#736f67 38.0%,#736f67 42.2%,#736f67 46.4%,#736f67 50.5%,#736f67 54.7%,#736f67 58.9%,#736f67 63.0%,#736f67 67.2%,#736f67 71.4%,#736f67 75.5%,#736f67 79.7%,#736f67 83.9%,#736f67 88.0%,#726e66 92.2%,#6f6b63 96.4%,#747068 99.5%)"></div>
<div style="left:1199px;top:672px;width:81px;height:4px;background:linear-gradient(90deg,#241d19 0.6%,#221b17 5.6%,#231c18 10.5%,#231c18 15.4%,#231c18 20.4%,#231c18 25.3%,#231c18 30.2%,#231c18 35.2%,#231c18 40.1%,#231c18 45.1%,#231c18 50.0%,#231c18 54.9%,#231c18 59.9%,#231c18 64.8%,#231c18 69.8%,#231c18 74.7%,#231c18 79.6%,#231c18 84.6%,#231c18 89.5%,#231c18 94.4%,#231c18 99.4%)"></div>
<div style="left:0px;top:676px;width:96px;height:4px;background:linear-gradient(90deg,#36332f 0.5%,#36332f 4.7%,#373430 8.9%,#3c3934 13.0%,#46423d 17.2%,#55514b 21.4%,#65615a 25.5%,#6f6b64 29.7%,#736f67 33.9%,#736f67 38.0%,#736f67 42.2%,#736f67 46.4%,#736f67 50.5%,#736f67 54.7%,#736f67 58.9%,#736f67 63.0%,#736f67 67.2%,#736f67 71.4%,#736f67 75.5%,#736f67 79.7%,#736f67 83.9%,#736f67 88.0%,#726e66 92.2%,#6f6b63 96.4%,#747068 99.5%)"></div>
<div style="left:1199px;top:676px;width:81px;height:4px;background:linear-gradient(90deg,#241d19 0.6%,#221b17 5.6%,#231c18 10.5%,#231c18 15.4%,#231c18 20.4%,#231c18 25.3%,#231c18 30.2%,#231c18 35.2%,#231c18 40.1%,#231c18 45.1%,#231c18 50.0%,#231c18 54.9%,#231c18 59.9%,#231c18 64.8%,#231c18 69.8%,#231c18 74.7%,#231c18 79.6%,#231c18 84.6%,#231c18 89.5%,#231c18 94.4%,#231c18 99.4%)"></div>
<div style="left:0px;top:680px;width:96px;height:4px;background:linear-gradient(90deg,#373430 0.5%,#393631 4.7%,#3e3b37 8.9%,#484540 13.0%,#57534d 17.2%,#64615a 21.4%,#6e6a63 25.5%,#726e66 29.7%,#736f67 33.9%,#736f67 38.0%,#736f67 42.2%,#736f67 46.4%,#736f67 50.5%,#736f67 54.7%,#736f67 58.9%,#736f67 63.0%,#736f67 67.2%,#736f67 71.4%,#736f67 75.5%,#736f67 79.7%,#736f67 83.9%,#736f67 88.0%,#726e66 92.2%,#6f6b63 96.4%,#736f67 99.5%)"></div>
<div style="left:1199px;top:680px;width:81px;height:4px;background:linear-gradient(90deg,#241d19 0.6%,#221b17 5.6%,#231c18 10.5%,#231c18 15.4%,#231c18 20.4%,#231c18 25.3%,#231c18 30.2%,#231c18 35.2%,#231c18 40.1%,#231c18 45.1%,#231c18 50.0%,#231c18 54.9%,#231c18 59.9%,#231c18 64.8%,#231c18 69.8%,#231c18 74.7%,#231c18 79.6%,#231c18 84.6%,#231c18 89.5%,#231c18 94.4%,#231c18 99.4%)"></div>
<div style="left:0px;top:684px;width:96px;height:4px;background:linear-gradient(90deg,#3c3934 0.5%,#423e3a 4.7%,#4d4a44 8.9%,#5b5751 13.0%,#67635c 17.2%,#6f6b63 21.4%,#726e66 25.5%,#736f67 29.7%,#736f67 33.9%,#736f67 38.0%,#736f67 42.2%,#736f67 46.4%,#736f67 50.5%,#736f67 54.7%,#736f67 58.9%,#736f67 63.0%,#736f67 67.2%,#736f67 71.4%,#736f67 75.5%,#736f67 79.7%,#736f67 83.9%,#736f67 88.0%,#726e66 92.2%,#6c6860 96.4%,#6e6a62 99.5%)"></div>
<div style="left:1199px;top:684px;width:81px;height:4px;background:linear-gradient(90deg,#241e1a 0.6%,#221b17 5.6%,#231c18 10.5%,#231c18 15.4%,#231c18 20.4%,#231c18 25.3%,#231c18 30.2%,#231c18 35.2%,#231c18 40.1%,#231c18 45.1%,#231c18 50.0%,#231c18 54.9%,#231c18 59.9%,#231c18 64.8%,#231c18 69.8%,#231c18 74.7%,#231c18 79.6%,#231c18 84.6%,#231c18 89.5%,#231c18 94.4%,#231c18 99.4%)"></div>
<div style="left:0px;top:688px;width:96px;height:4px;background:linear-gradient(90deg,#4b4842 0.5%,#534f49 4.7%,#5f5c55 8.9%,#6a665f 13.0%,#706c64 17.2%,#726e66 21.4%,#736f67 25.5%,#736f67 29.7%,#736f67 33.9%,#736f67 38.0%,#736f67 42.2%,#736f67 46.4%,#736f67 50.5%,#736f67 54.7%,#736f67 58.9%,#736f67 63.0%,#736f67 67.2%,#736f67 71.4%,#736f67 75.5%,#736f67 79.7%,#736f67 83.9%,#736f67 88.0%,#706c64 92.2%,#67635b 96.4%,#635f57 99.5%)"></div>
<div style="left:1199px;top:688px;width:81px;height:4px;background:linear-gradient(90deg,#261f1b 0.6%,#231c18 5.6%,#231c18 10.5%,#231c18 15.4%,#231c18 20.4%,#231c18 25.3%,#231c18 30.2%,#231c18 35.2%,#231c18 40.1%,#231c18 45.1%,#231c18 50.0%,#231c18 54.9%,#231c18 59.9%,#231c18 64.8%,#231c18 69.8%,#231c18 74.7%,#231c18 79.6%,#231c18 84.6%,#231c18 89.5%,#231c18 94.4%,#231c18 99.4%)"></div>
<div style="left:0px;top:692px;width:96px;height:4px;background:linear-gradient(90deg,#5c5a52 0.5%,#625f57 4.7%,#69665e 8.9%,#6d6a62 13.0%,#6f6b63 17.2%,#6f6c63 21.4%,#6f6c63 25.5%,#6f6c63 29.7%,#6f6c63 33.9%,#6f6c63 38.0%,#6f6c63 42.2%,#6f6c63 46.4%,#6f6c63 50.5%,#6f6c63 54.7%,#6f6c63 58.9%,#6f6c63 63.0%,#6f6c63 67.2%,#6f6c63 71.4%,#6f6c63 75.5%,#6f6c63 79.7%,#6f6c63 83.9%,#6f6c63 88.0%,#6c6860 92.2%,#5f5c54 96.4%,#57544d 99.5%)"></div>
<div style="left:1199px;top:692px;width:81px;height:4px;background:linear-gradient(90deg,#27211d 0.6%,#231d19 5.6%,#231c18 10.5%,#231c18 15.4%,#231c18 20.4%,#231c18 25.3%,#231c18 30.2%,#231c18 35.2%,#231c18 40.1%,#231c18 45.1%,#231c18 50.0%,#231c18 54.9%,#231c18 59.9%,#231c18 64.8%,#231c18 69.8%,#231c18 74.7%,#231c18 79.6%,#231c18 84.6%,#231c18 89.5%,#231c18 94.4%,#231c18 99.4%)"></div>
<div style="left:0px;top:696px;width:96px;height:4px;background:linear-gradient(90deg,#5e5d53 0.5%,#605e54 4.7%,#616056 8.9%,#626157 13.0%,#636157 17.2%,#636157 21.4%,#636157 25.5%,#636157 29.7%,#636157 33.9%,#636157 38.0%,#636157 42.2%,#636157 46.4%,#636157 50.5%,#636157 54.7%,#636157 58.9%,#636157 63.0%,#636157 67.2%,#636157 71.4%,#636157 75.5%,#636157 79.7%,#636157 83.9%,#636157 88.0%,#605e54 92.2%,#55534a 96.4%,#4e4b44 99.5%)"></div>
<div style="left:1199px;top:696px;width:81px;height:4px;background:linear-gradient(90deg,#27211d 0.6%,#231d19 5.6%,#231c18 10.5%,#231c18 15.4%,#231c18 20.4%,#231c18 25.3%,#231c18 30.2%,#231c18 35.2%,#231c18 40.1%,#231c18 45.1%,#231c18 50.0%,#231c18 54.9%,#231c18 59.9%,#231c18 64.8%,#231c18 69.8%,#231c18 74.7%,#231c18 79.6%,#231c18 84.6%,#231c18 89.5%,#231c18 94.4%,#231c18 99.4%)"></div>
<div style="left:0px;top:700px;width:96px;height:4px;background:linear-gradient(90deg,#504f45 0.5%,#504f45 4.7%,#505045 8.9%,#505045 13.0%,#505045 17.2%,#505045 21.4%,#505045 25.5%,#505045 29.7%,#505045 33.9%,#505045 38.0%,#505045 42.2%,#505045 46.4%,#505045 50.5%,#505045 54.7%,#505045 58.9%,#505045 63.0%,#505045 67.2%,#505045 71.4%,#505045 75.5%,#505045 79.7%,#505045 83.9%,#505045 88.0%,#4e4d43 92.2%,#48463e 96.4%,#45433b 99.5%)"></div>
<div style="left:1199px;top:700px;width:81px;height:4px;background:linear-gradient(90deg,#27211d 0.6%,#231d19 5.6%,#231c18 10.5%,#231c18 15.4%,#231c18 20.4%,#231c18 25.3%,#231c18 30.2%,#231c18 35.2%,#231c18 40.1%,#231c18 45.1%,#231c18 50.0%,#231c18 54.9%,#231c18 59.9%,#231c18 64.8%,#231c18 69.8%,#231c18 74.7%,#231c18 79.6%,#231c18 84.6%,#231c18 89.5%,#231c18 94.4%,#231c18 99.4%)"></div>
<div style="left:0px;top:704px;width:96px;height:4px;background:linear-gradient(90deg,#434138 0.5%,#434138 4.7%,#434138 8.9%,#434138 13.0%,#434138 17.2%,#434138 21.4%,#434138 25.5%,#434138 29.7%,#434138 33.9%,#434138 38.0%,#434138 42.2%,#434138 46.4%,#434138 50.5%,#434138 54.7%,#434138 58.9%,#434138 63.0%,#434138 67.2%,#434138 71.4%,#434138 75.5%,#434138 79.7%,#434138 83.9%,#434138 88.0%,#423f38 92.2%,#3f3c34 96.4%,#403c35 99.5%)"></div>
<div style="left:1199px;top:704px;width:81px;height:4px;background:linear-gradient(90deg,#27211d 0.6%,#231d19 5.6%,#231c18 10.5%,#231c18 15.4%,#231c18 20.4%,#231c18 25.3%,#231c18 30.2%,#231c18 35.2%,#231c18 40.1%,#231c18 45.1%,#231c18 50.0%,#231c18 54.9%,#231c18 59.9%,#231c18 64.8%,#231c18 69.8%,#231c18 74.7%,#231c18 79.6%,#231c18 84.6%,#231c18 89.5%,#231c18 94.4%,#231c18 99.4%)"></div>
<div style="left:0px;top:708px;width:96px;height:4px;background:linear-gradient(90deg,#3e3a33 0.5%,#3e3a33 4.7%,#3e3a33 8.9%,#3e3a33 13.0%,#3e3a33 17.2%,#3e3a33 21.4%,#3e3a33 25.5%,#3e3a33 29.7%,#3e3a33 33.9%,#3e3a33 38.0%,#3e3a33 42.2%,#3e3a33 46.4%,#3e3a33 50.5%,#3e3a33 54.7%,#3e3a33 58.9%,#3e3a33 63.0%,#3e3a33 67.2%,#3e3a33 71.4%,#3e3a33 75.5%,#3e3a33 79.7%,#3e3a33 83.9%,#3e3a33 88.0%,#3e3a33 92.2%,#3c3731 96.4%,#3d3932 99.5%)"></div>
<div style="left:1199px;top:708px;width:81px;height:4px;background:linear-gradient(90deg,#27211d 0.6%,#231d19 5.6%,#231c18 10.5%,#231c18 15.4%,#231c18 20.4%,#231c18 25.3%,#231c18 30.2%,#231c18 35.2%,#231c18 40.1%,#231c18 45.1%,#231c18 50.0%,#231c18 54.9%,#231c18 59.9%,#231c18 64.8%,#231c18 69.8%,#231c18 74.7%,#231c18 79.6%,#231c18 84.6%,#231c18 89.5%,#231c18 94.4%,#231c18 99.4%)"></div>
<div style="left:0px;top:712px;width:96px;height:4px;background:linear-gradient(90deg,#3d3832 0.5%,#3d3832 4.7%,#3d3832 8.9%,#3d3832 13.0%,#3d3832 17.2%,#3d3832 21.4%,#3d3832 25.5%,#3d3832 29.7%,#3d3832 33.9%,#3d3832 38.0%,#3d3832 42.2%,#3d3832 46.4%,#3d3832 50.5%,#3d3832 54.7%,#3d3832 58.9%,#3d3832 63.0%,#3d3832 67.2%,#3d3832 71.4%,#3d3832 75.5%,#3d3832 79.7%,#3d3832 83.9%,#3d3832 88.0%,#3d3832 92.2%,#3b3630 96.4%,#3d3832 99.5%)"></div>
<div style="left:1199px;top:712px;width:81px;height:4px;background:linear-gradient(90deg,#27211d 0.6%,#231d19 5.6%,#231c18 10.5%,#231c18 15.4%,#231c18 20.4%,#231c18 25.3%,#231c18 30.2%,#231c18 35.2%,#231c18 40.1%,#231c18 45.1%,#231c18 50.0%,#231c18 54.9%,#231c18 59.9%,#231c18 64.8%,#231c18 69.8%,#231c18 74.7%,#231c18 79.6%,#231c18 84.6%,#231c18 89.5%,#231c18 94.4%,#231c18 99.4%)"></div>
<div style="left:0px;top:716px;width:96px;height:4px;background:linear-gradient(90deg,#3d3832 0.5%,#3d3832 4.7%,#3d3832 8.9%,#3d3832 13.0%,#3d3832 17.2%,#3d3832 21.4%,#3d3832 25.5%,#3d3832 29.7%,#3d3832 33.9%,#3d3832 38.0%,#3d3832 42.2%,#3d3832 46.4%,#3d3832 50.5%,#3d3832 54.7%,#3d3832 58.9%,#3d3832 63.0%,#3d3832 67.2%,#3d3832 71.4%,#3d3832 75.5%,#3d3832 79.7%,#3d3832 83.9%,#3d3832 88.0%,#3d3832 92.2%,#3b3630 96.4%,#3d3832 99.5%)"></div>
<div style="left:1199px;top:716px;width:81px;height:4px;background:linear-gradient(90deg,#27211d 0.6%,#231e1a 5.6%,#241d19 10.5%,#241d19 15.4%,#241d19 20.4%,#241d19 25.3%,#241d19 30.2%,#241d19 35.2%,#241d19 40.1%,#241d19 45.1%,#241d19 50.0%,#241d19 54.9%,#241d19 59.9%,#241d19 64.8%,#241d19 69.8%,#241d19 74.7%,#241d19 79.6%,#241d19 84.6%,#241d19 89.5%,#241d19 94.4%,#241d19 99.4%)"></div>
<div style="left:0px;top:720px;width:96px;height:4px;background:linear-gradient(90deg,#3d3832 0.5%,#3d3832 4.7%,#3d3832 8.9%,#3d3832 13.0%,#3d3832 17.2%,#3d3832 21.4%,#3d3832 25.5%,#3d3832 29.7%,#3d3832 33.9%,#3d3832 38.0%,#3d3832 42.2%,#3d3832 46.4%,#3d3832 50.5%,#3d3832 54.7%,#3d3832 58.9%,#3d3832 63.0%,#3d3832 67.2%,#3d3832 71.4%,#3d3832 75.5%,#3d3832 79.7%,#3d3832 83.9%,#3d3832 88.0%,#3d3832 92.2%,#3b3630 96.4%,#3d3832 99.5%)"></div>
<div style="left:1199px;top:720px;width:81px;height:4px;background:linear-gradient(90deg,#28231f 0.6%,#25201c 5.6%,#25201c 10.5%,#25201c 15.4%,#25201c 20.4%,#25201c 25.3%,#25201c 30.2%,#25201c 35.2%,#25201c 40.1%,#25201c 45.1%,#25201c 50.0%,#25201c 54.9%,#25201c 59.9%,#25201c 64.8%,#25201c 69.8%,#25201c 74.7%,#25201c 79.6%,#25201c 84.6%,#25201c 89.5%,#25201c 94.4%,#25201c 99.4%)"></div>
<div style="left:0px;top:724px;width:96px;height:4px;background:linear-gradient(90deg,#3d3832 0.5%,#3d3832 4.7%,#3d3832 8.9%,#3d3832 13.0%,#3d3832 17.2%,#3d3832 21.4%,#3d3832 25.5%,#3d3832 29.7%,#3d3832 33.9%,#3d3832 38.0%,#3d3832 42.2%,#3d3832 46.4%,#3d3832 50.5%,#3d3832 54.7%,#3d3832 58.9%,#3d3832 63.0%,#3d3832 67.2%,#3d3832 71.4%,#3d3832 75.5%,#3d3832 79.7%,#3d3832 83.9%,#3d3832 88.0%,#3d3832 92.2%,#3b3630 96.4%,#3d3832 99.5%)"></div>
<div style="left:1199px;top:724px;width:81px;height:4px;background:linear-gradient(90deg,#282420 0.6%,#26211d 5.6%,#27221e 10.5%,#27221e 15.4%,#27221e 20.4%,#27221e 25.3%,#27221e 30.2%,#27221e 35.2%,#27221e 40.1%,#27221e 45.1%,#27221e 50.0%,#27221e 54.9%,#27221e 59.9%,#27221e 64.8%,#27221e 69.8%,#27221e 74.7%,#27221e 79.6%,#27221e 84.6%,#27221e 89.5%,#27221e 94.4%,#27221e 99.4%)"></div>
<div style="left:0px;top:728px;width:96px;height:4px;background:linear-gradient(90deg,#3d3832 0.5%,#3d3832 4.7%,#3d3832 8.9%,#3d3832 13.0%,#3d3832 17.2%,#3d3832 21.4%,#3d3832 25.5%,#3d3832 29.7%,#3d3832 33.9%,#3d3832 38.0%,#3d3832 42.2%,#3d3832 46.4%,#3d3832 50.5%,#3d3832 54.7%,#3d3832 58.9%,#3d3832 63.0%,#3d3832 67.2%,#3d3832 71.4%,#3d3832 75.5%,#3d3832 79.7%,#3d3832 83.9%,#3d3832 88.0%,#3d3832 92.2%,#3b3630 96.4%,#3d3832 99.5%)"></div>
<div style="left:1199px;top:728px;width:81px;height:4px;background:linear-gradient(90deg,#282420 0.6%,#26221e 5.6%,#27231f 10.5%,#27231f 15.4%,#27231f 20.4%,#27231f 25.3%,#27231f 30.2%,#27231f 35.2%,#27231f 40.1%,#27231f 45.1%,#27231f 50.0%,#27231f 54.9%,#27231f 59.9%,#27231f 64.8%,#27231f 69.8%,#27231f 74.7%,#27231f 79.6%,#27231f 84.6%,#27231f 89.5%,#27231f 94.4%,#27231f 99.4%)"></div>
<div style="left:0px;top:732px;width:96px;height:4px;background:linear-gradient(90deg,#3d3832 0.5%,#3d3832 4.7%,#3d3832 8.9%,#3d3832 13.0%,#3d3832 17.2%,#3d3832 21.4%,#3d3832 25.5%,#3d3832 29.7%,#3d3832 33.9%,#3d3832 38.0%,#3d3832 42.2%,#3d3832 46.4%,#3d3832 50.5%,#3d3832 54.7%,#3d3832 58.9%,#3d3832 63.0%,#3d3832 67.2%,#3d3832 71.4%,#3d3832 75.5%,#3d3832 79.7%,#3d3832 83.9%,#3d3832 88.0%,#3d3832 92.2%,#3b3630 96.4%,#3d3832 99.5%)"></div>
<div style="left:1199px;top:732px;width:81px;height:4px;background:linear-gradient(90deg,#282420 0.6%,#26221e 5.6%,#27231f 10.5%,#27231f 15.4%,#27231f 20.4%,#27231f 25.3%,#27231f 30.2%,#27231f 35.2%,#27231f 40.1%,#27231f 45.1%,#27231f 50.0%,#27231f 54.9%,#27231f 59.9%,#27231f 64.8%,#27231f 69.8%,#27231f 74.7%,#27231f 79.6%,#27231f 84.6%,#27231f 89.5%,#27231f 94.4%,#27231f 99.4%)"></div>
<div style="left:0px;top:736px;width:96px;height:4px;background:linear-gradient(90deg,#3d3832 0.5%,#3d3832 4.7%,#3d3832 8.9%,#3d3832 13.0%,#3d3832 17.2%,#3d3832 21.4%,#3d3832 25.5%,#3d3832 29.7%,#3d3832 33.9%,#3d3832 38.0%,#3d3832 42.2%,#3d3832 46.4%,#3d3832 50.5%,#3d3832 54.7%,#3d3832 58.9%,#3d3832 63.0%,#3d3832 67.2%,#3d3832 71.4%,#3d3832 75.5%,#3d3832 79.7%,#3d3832 83.9%,#3d3832 88.0%,#3d3832 92.2%,#3b3630 96.4%,#3d3832 99.5%)"></div>
<div style="left:1199px;top:736px;width:81px;height:4px;background:linear-gradient(90deg,#282420 0.6%,#26221e 5.6%,#27231f 10.5%,#27231f 15.4%,#27231f 20.4%,#27231f 25.3%,#27231f 30.2%,#27231f 35.2%,#27231f 40.1%,#27231f 45.1%,#27231f 50.0%,#27231f 54.9%,#27231f 59.9%,#27231f 64.8%,#27231f 69.8%,#27231f 74.7%,#27231f 79.6%,#27231f 84.6%,#27231f 89.5%,#27231f 94.4%,#27231f 99.4%)"></div>
<div style="left:0px;top:740px;width:96px;height:4px;background:linear-gradient(90deg,#3d3933 0.5%,#3d3832 4.7%,#3d3832 8.9%,#3d3832 13.0%,#3d3832 17.2%,#3d3832 21.4%,#3d3832 25.5%,#3d3832 29.7%,#3d3832 33.9%,#3d3832 38.0%,#3d3832 42.2%,#3d3832 46.4%,#3d3832 50.5%,#3d3832 54.7%,#3d3832 58.9%,#3d3832 63.0%,#3d3832 67.2%,#3d3832 71.4%,#3d3832 75.5%,#3d3832 79.7%,#3d3832 83.9%,#3d3832 88.0%,#3d3832 92.2%,#3b3630 96.4%,#3d3832 99.5%)"></div>
<div style="left:1199px;top:740px;width:81px;height:4px;background:linear-gradient(90deg,#282420 0.6%,#26221e 5.6%,#27231f 10.5%,#27231f 15.4%,#27231f 20.4%,#27231f 25.3%,#27231f 30.2%,#27231f 35.2%,#27231f 40.1%,#27231f 45.1%,#27231f 50.0%,#282420 54.9%,#282420 59.9%,#282420 64.8%,#282420 69.8%,#282420 74.7%,#282420 79.6%,#282420 84.6%,#282420 89.5%,#282420 94.4%,#282420 99.4%)"></div>
<div style="left:0px;top:744px;width:1280px;height:4px;background:linear-gradient(90deg,#3e3a34 0.0%,#3e3933 1.3%,#3d3933 2.5%,#3d3933 3.8%,#3c3832 5.0%,#3b3731 6.3%,#302d28 7.5%,#302d28 8.8%,#2f2c27 10.0%,#2f2c27 11.3%,#2e2b26 12.5%,#2e2a26 13.8%,#2e2a26 15.0%,#2d2a26 16.3%,#2d2a25 17.5%,#2c2925 18.8%,#2b2824 20.0%,#2b2824 21.3%,#2b2824 22.5%,#2b2824 23.8%,#2b2824 25.0%,#2b2824 26.3%,#2c2924 27.5%,#2c2924 28.8%,#2d2a25 30.0%,#2e2a25 31.3%,#2e2a25 32.5%,#2e2a26 33.8%,#2e2b26 35.0%,#2f2b26 36.3%,#302c26 37.5%,#312d26 38.8%,#322e27 40.0%,#332e28 41.3%,#342f29 42.5%,#35312a 43.8%,#37322a 45.0%,#37322a 46.3%,#39342b 47.5%,#3b362d 48.8%,#3e382e 50.0%,#403a2f 51.3%,#423c31 52.5%,#443f32 53.8%,#474033 55.0%,#474033 56.3%,#484133 57.5%,#484133 58.8%,#484234 60.0%,#484234 61.3%,#494334 62.5%,#494334 63.8%,#484133 65.0%,#463f32 66.3%,#443d30 67.5%,#433b2e 68.8%,#40382d 70.0%,#3c3228 71.3%,#372c21 72.5%,#33261b 73.8%,#322319 75.0%,#342419 76.3%,#362419 77.5%,#3b2a20 78.8%,#43372d 80.0%,#4b4337 81.3%,#463e32 82.5%,#3f372b 83.8%,#322c24 85.0%,#26211d 86.3%,#211d19 87.5%,#211d19 88.8%,#211d19 90.0%,#201d19 91.3%,#201d19 92.5%,#201d19 93.8%,#272420 95.0%,#282420 96.3%,#292521 97.5%,#2a2622 98.8%,#2a2622 100.0%)"></div>
<div style="left:0px;top:748px;width:1280px;height:4px;background:linear-gradient(90deg,#3f3b35 0.0%,#3e3a34 1.3%,#3d3933 2.5%,#3d3933 3.8%,#3c3832 5.0%,#3b3731 6.3%,#35312c 7.5%,#35312c 8.8%,#34312b 10.0%,#34312b 11.3%,#33302a 12.5%,#322f2a 13.8%,#322f29 15.0%,#312e29 16.3%,#312e29 17.5%,#312d29 18.8%,#302c28 20.0%,#302c28 21.3%,#302c28 22.5%,#302c28 23.8%,#302c28 25.0%,#302c28 26.3%,#312d28 27.5%,#312d28 28.8%,#312e29 30.0%,#322e29 31.3%,#322f29 32.5%,#332f29 33.8%,#333029 35.0%,#343029 36.3%,#35312a 37.5%,#36312a 38.8%,#37322b 40.0%,#39332c 41.3%,#39342d 42.5%,#3a362e 43.8%,#3c372e 45.0%,#3d382f 46.3%,#3f3930 47.5%,#423b31 48.8%,#443e33 50.0%,#474034 51.3%,#494236 52.5%,#4b4537 53.8%,#4e4739 55.0%,#4e4739 56.3%,#4f4839 57.5%,#4f4839 58.8%,#504939 60.0%,#504939 61.3%,#514a39 62.5%,#514a39 63.8%,#504839 65.0%,#4d4637 66.3%,#4b4335 67.5%,#4a4133 68.8%,#473e31 70.0%,#42382c 71.3%,#3d3125 72.5%,#39291e 73.8%,#38271c 75.0%,#39281c 76.3%,#3b281c 77.5%,#412f23 78.8%,#4a3d31 80.0%,#524a3d 81.3%,#4d4438 82.5%,#453c30 83.8%,#373128 85.0%,#292520 86.3%,#24211c 87.5%,#24211c 88.8%,#24211c 90.0%,#23201c 91.3%,#23201c 92.5%,#23201c 93.8%,#282420 95.0%,#292521 96.3%,#2a2622 97.5%,#2b2723 98.8%,#2c2824 100.0%)"></div>
<div style="left:0px;top:752px;width:1280px;height:4px;background:linear-gradient(90deg,#3f3b35 0.0%,#3e3a34 1.3%,#3d3933 2.5%,#3d3933 3.8%,#3c3832 5.0%,#3b3731 6.3%,#38342e 7.5%,#38342e 8.8%,#37332e 10.0%,#37332e 11.3%,#36322d 12.5%,#35312d 13.8%,#35312c 15.0%,#34302c 16.3%,#34302b 17.5%,#332f2b 18.8%,#322e2a 20.0%,#322e2a 21.3%,#322e2a 22.5%,#322e2a 23.8%,#322e2a 25.0%,#322e2a 26.3%,#332f2a 27.5%,#332f2a 28.8%,#34302b 30.0%,#35302b 31.3%,#35312b 32.5%,#36312c 33.8%,#36322c 35.0%,#37322c 36.3%,#38332d 37.5%,#39342d 38.8%,#3a352e 40.0%,#3c362e 41.3%,#3d372f 42.5%,#3d3930 43.8%,#3f3a30 45.0%,#403b31 46.3%,#423d32 47.5%,#453e34 48.8%,#484136 50.0%,#4b4337 51.3%,#4d4639 52.5%,#4f493a 53.8%,#524b3c 55.0%,#524b3c 56.3%,#534c3c 57.5%,#534c3c 58.8%,#544d3d 60.0%,#544d3d 61.3%,#554d3d 62.5%,#554d3d 63.8%,#544c3c 65.0%,#514a3a 66.3%,#4f4738 67.5%,#4d4436 68.8%,#4b4134 70.0%,#463b2e 71.3%,#403327 72.5%,#3c2c1f 73.8%,#3b291e 75.0%,#3d2a1e 76.3%,#3e2a1e 77.5%,#443125 78.8%,#4e4034 80.0%,#574d40 81.3%,#51483b 82.5%,#493f32 83.8%,#3a332a 85.0%,#2c2721 86.3%,#26221e 87.5%,#26221e 88.8%,#26221e 90.0%,#25211e 91.3%,#25211e 92.5%,#25211e 93.8%,#282420 95.0%,#292521 96.3%,#2a2622 97.5%,#2b2723 98.8%,#2c2824 100.0%)"></div>
<div style="left:0px;top:756px;width:1280px;height:4px;background:linear-gradient(90deg,#3f3b35 0.0%,#3e3a34 1.3%,#3d3933 2.5%,#3d3933 3.8%,#3c3832 5.0%,#3c3832 6.3%,#393630 7.5%,#393630 8.8%,#38352f 10.0%,#38352f 11.3%,#38342e 12.5%,#37332e 13.8%,#37332d 15.0%,#36322d 16.3%,#36322c 17.5%,#35312c 18.8%,#34302b 20.0%,#34302b 21.3%,#34302b 22.5%,#34302b 23.8%,#34302b 25.0%,#34302b 26.3%,#35312b 27.5%,#35312b 28.8%,#36322c 30.0%,#37322c 31.3%,#37332c 32.5%,#38332d 33.8%,#38342d 35.0%,#38342d 36.3%,#39352e 37.5%,#3a362e 38.8%,#3b372f 40.0%,#3d3830 41.3%,#3e3831 42.5%,#3f3a32 43.8%,#413b32 45.0%,#423c33 46.3%,#443e34 47.5%,#474036 48.8%,#4a4338 50.0%,#4d4538 51.3%,#4f483a 52.5%,#524b3b 53.8%,#544d3d 55.0%,#544d3d 56.3%,#554e3d 57.5%,#554e3d 58.8%,#564f3e 60.0%,#564f3e 61.3%,#57503e 62.5%,#57503e 63.8%,#564e3d 65.0%,#544c3b 66.3%,#524939 67.5%,#504638 68.8%,#4d4336 70.0%,#483c30 71.3%,#423528 72.5%,#3d2d20 73.8%,#3c2a1e 75.0%,#3e2b1e 76.3%,#402b1e 77.5%,#463326 78.8%,#514236 80.0%,#595042 81.3%,#544a3c 82.5%,#4b4134 83.8%,#3b352b 85.0%,#2d2822 86.3%,#27231e 87.5%,#27231e 88.8%,#27231e 90.0%,#26221e 91.3%,#26221e 92.5%,#26221e 93.8%,#282420 95.0%,#292521 96.3%,#2a2622 97.5%,#2b2723 98.8%,#2c2824 100.0%)"></div>
<div style="left:0px;top:760px;width:1280px;height:4px;background:linear-gradient(90deg,#3f3b35 0.0%,#3e3a34 1.3%,#3d3933 2.5%,#3d3933 3.8%,#3c3832 5.0%,#3c3832 6.3%,#3a3631 7.5%,#3a3631 8.8%,#393530 10.0%,#393530 11.3%,#38342f 12.5%,#37332f 13.8%,#37332e 15.0%,#36322e 16.3%,#36322d 17.5%,#35322d 18.8%,#34312c 20.0%,#34312c 21.3%,#34312c 22.5%,#34312c 23.8%,#34312c 25.0%,#34312c 26.3%,#35322c 27.5%,#35322c 28.8%,#36322d 30.0%,#37322d 31.3%,#37332d 32.5%,#38332e 33.8%,#38342e 35.0%,#39342e 36.3%,#3a352f 37.5%,#3b362f 38.8%,#3c3730 40.0%,#3e3831 41.3%,#3f3932 42.5%,#403b32 43.8%,#423c32 45.0%,#433d33 46.3%,#453f34 47.5%,#484136 48.8%,#4b4438 50.0%,#4e4639 51.3%,#50493b 52.5%,#534c3c 53.8%,#564e3e 55.0%,#564e3e 56.3%,#574f3e 57.5%,#574f3e 58.8%,#58503f 60.0%,#58503f 61.3%,#59513f 62.5%,#59513f 63.8%,#584f3e 65.0%,#554d3c 66.3%,#534a3a 67.5%,#514738 68.8%,#4e4436 70.0%,#493d31 71.3%,#433529 72.5%,#3e2e21 73.8%,#3d2b1f 75.0%,#3f2c1f 76.3%,#412c1f 77.5%,#473327 78.8%,#524336 80.0%,#5b5143 81.3%,#554b3d 82.5%,#4c4234 83.8%,#3c352c 85.0%,#2e2923 86.3%,#28241f 87.5%,#28241f 88.8%,#28241f 90.0%,#27231f 91.3%,#27231f 92.5%,#27231f 93.8%,#282420 95.0%,#292521 96.3%,#2a2622 97.5%,#2b2723 98.8%,#2c2824 100.0%)"></div>
<div style="left:0px;top:764px;width:1280px;height:4px;background:linear-gradient(90deg,#3f3b35 0.0%,#3e3a34 1.3%,#3d3933 2.5%,#3d3933 3.8%,#3c3832 5.0%,#3c3832 6.3%,#3b3731 7.5%,#3b3731 8.8%,#3a3630 10.0%,#3a3630 11.3%,#39352f 12.5%,#38342f 13.8%,#38342e 15.0%,#37332e 16.3%,#37332d 17.5%,#36322d 18.8%,#35312c 20.0%,#35312c 21.3%,#35312c 22.5%,#35312c 23.8%,#35312c 25.0%,#35312c 26.3%,#36322c 27.5%,#36322c 28.8%,#37332d 30.0%,#38332d 31.3%,#38342d 32.5%,#39342e 33.8%,#39352e 35.0%,#3a352e 36.3%,#3b362f 37.5%,#3c372f 38.8%,#3d3830 40.0%,#3f3931 41.3%,#403a32 42.5%,#413c33 43.8%,#433d33 45.0%,#443e34 46.3%,#464035 47.5%,#494237 48.8%,#4c4539 50.0%,#4f473a 51.3%,#514a3c 52.5%,#544d3d 53.8%,#574f3f 55.0%,#574f3f 56.3%,#58503f 57.5%,#58503f 58.8%,#595140 60.0%,#595140 61.3%,#5a5240 62.5%,#5a5240 63.8%,#59503f 65.0%,#564e3d 66.3%,#544b3b 67.5%,#524839 68.8%,#4f4537 70.0%,#4a3e31 71.3%,#443629 72.5%,#3f2e21 73.8%,#3e2b1f 75.0%,#402c1f 76.3%,#422c1f 77.5%,#483427 78.8%,#534437 80.0%,#5b5244 81.3%,#564c3e 82.5%,#4d4335 83.8%,#3d362c 85.0%,#2e2923 86.3%,#28241f 87.5%,#28241f 88.8%,#28241f 90.0%,#27231f 91.3%,#27231f 92.5%,#27231f 93.8%,#282420 95.0%,#292521 96.3%,#2a2622 97.5%,#2b2723 98.8%,#2c2824 100.0%)"></div>
<div style="left:0px;top:768px;width:1280px;height:4px;background:linear-gradient(90deg,#3f3b35 0.0%,#3e3a34 1.3%,#3d3933 2.5%,#3d3933 3.8%,#3c3832 5.0%,#3c3832 6.3%,#3b3731 7.5%,#3b3731 8.8%,#3a3630 10.0%,#3a3630 11.3%,#39352f 12.5%,#38342f 13.8%,#38342e 15.0%,#37332e 16.3%,#37332d 17.5%,#36322d 18.8%,#35312c 20.0%,#35312c 21.3%,#35312c 22.5%,#35312c 23.8%,#35312c 25.0%,#35312c 26.3%,#36322c 27.5%,#36322c 28.8%,#37332d 30.0%,#38332d 31.3%,#38342d 32.5%,#39342e 33.8%,#39352e 35.0%,#3a352e 36.3%,#3b362f 37.5%,#3c372f 38.8%,#3d3830 40.0%,#3f3931 41.3%,#403a32 42.5%,#413c33 43.8%,#433d33 45.0%,#443e34 46.3%,#464035 47.5%,#494237 48.8%,#4c4539 50.0%,#4f473a 51.3%,#514a3c 52.5%,#544d3d 53.8%,#574f3f 55.0%,#574f3f 56.3%,#58503f 57.5%,#58503f 58.8%,#595140 60.0%,#595140 61.3%,#5a5240 62.5%,#5a5240 63.8%,#59503f 65.0%,#564e3d 66.3%,#544b3b 67.5%,#524839 68.8%,#4f4537 70.0%,#4a3e31 71.3%,#443629 72.5%,#3f2e21 73.8%,#3e2b1f 75.0%,#402c1f 76.3%,#422c1f 77.5%,#483427 78.8%,#534437 80.0%,#5c5244 81.3%,#564c3e 82.5%,#4d4335 83.8%,#3d362c 85.0%,#2e2923 86.3%,#28241f 87.5%,#28241f 88.8%,#28241f 90.0%,#27231f 91.3%,#27231f 92.5%,#27231f 93.8%,#282420 95.0%,#292521 96.3%,#2a2622 97.5%,#2b2723 98.8%,#2c2824 100.0%)"></div>
<div style="left:0px;top:772px;width:1280px;height:4px;background:linear-gradient(90deg,#3f3b35 0.0%,#3e3a34 1.3%,#3d3933 2.5%,#3d3933 3.8%,#3c3832 5.0%,#3c3832 6.3%,#3b3731 7.5%,#3b3731 8.8%,#3a3630 10.0%,#3a3630 11.3%,#39352f 12.5%,#38342f 13.8%,#38342e 15.0%,#37332e 16.3%,#37332d 17.5%,#36322d 18.8%,#35312c 20.0%,#35312c 21.3%,#35312c 22.5%,#35312c 23.8%,#35312c 25.0%,#35312c 26.3%,#36322c 27.5%,#36322c 28.8%,#37332d 30.0%,#38332d 31.3%,#38342d 32.5%,#39342e 33.8%,#39352e 35.0%,#3a352e 36.3%,#3b362f 37.5%,#3c372f 38.8%,#3d3830 40.0%,#3f3931 41.3%,#403a32 42.5%,#413c33 43.8%,#433d33 45.0%,#443e34 46.3%,#464035 47.5%,#494237 48.8%,#4c4539 50.0%,#4f473a 51.3%,#514a3c 52.5%,#544d3d 53.8%,#574f3f 55.0%,#574f3f 56.3%,#58503f 57.5%,#58503f 58.8%,#595140 60.0%,#595140 61.3%,#5a5240 62.5%,#5a5240 63.8%,#59503f 65.0%,#564e3d 66.3%,#544b3b 67.5%,#524839 68.8%,#4f4537 70.0%,#4a3e31 71.3%,#443629 72.5%,#3f2e21 73.8%,#3e2b1f 75.0%,#402c1f 76.3%,#422c1f 77.5%,#483427 78.8%,#534437 80.0%,#5c5244 81.3%,#564c3e 82.5%,#4d4335 83.8%,#3d362c 85.0%,#2e2923 86.3%,#28241f 87.5%,#28241f 88.8%,#28241f 90.0%,#27231f 91.3%,#27231f 92.5%,#27231f 93.8%,#282420 95.0%,#292521 96.3%,#2a2622 97.5%,#2b2723 98.8%,#2c2824 100.0%)"></div>
<div style="left:0px;top:776px;width:1280px;height:4px;background:linear-gradient(90deg,#3f3b35 0.0%,#3e3a34 1.3%,#3d3933 2.5%,#3d3933 3.8%,#3c3832 5.0%,#3c3832 6.3%,#3b3731 7.5%,#3b3731 8.8%,#3a3630 10.0%,#3a3630 11.3%,#39352f 12.5%,#38342f 13.8%,#38342e 15.0%,#37332e 16.3%,#37332d 17.5%,#36322d 18.8%,#35312c 20.0%,#35312c 21.3%,#35312c 22.5%,#35312c 23.8%,#35312c 25.0%,#35312c 26.3%,#36322c 27.5%,#36322c 28.8%,#37332d 30.0%,#38332d 31.3%,#38342d 32.5%,#39342e 33.8%,#39352e 35.0%,#3a352e 36.3%,#3b362f 37.5%,#3c372f 38.8%,#3d3830 40.0%,#3f3931 41.3%,#403a32 42.5%,#413c33 43.8%,#433d33 45.0%,#443e34 46.3%,#464035 47.5%,#494237 48.8%,#4c4539 50.0%,#4f473a 51.3%,#514a3c 52.5%,#544d3d 53.8%,#574f3f 55.0%,#574f3f 56.3%,#58503f 57.5%,#58503f 58.8%,#595140 60.0%,#595140 61.3%,#5a5240 62.5%,#5a5240 63.8%,#59503f 65.0%,#564e3d 66.3%,#544b3b 67.5%,#524839 68.8%,#4f4537 70.0%,#4a3e31 71.3%,#443629 72.5%,#3f2e21 73.8%,#3e2b1f 75.0%,#402c1f 76.3%,#422c1f 77.5%,#483427 78.8%,#534437 80.0%,#5c5244 81.3%,#564c3e 82.5%,#4d4335 83.8%,#3d362c 85.0%,#2e2923 86.3%,#28241f 87.5%,#28241f 88.8%,#28241f 90.0%,#27231f 91.3%,#27231f 92.5%,#27231f 93.8%,#282420 95.0%,#292521 96.3%,#2a2622 97.5%,#2b2723 98.8%,#2c2824 100.0%)"></div>
<div style="left:0px;top:780px;width:1280px;height:4px;background:linear-gradient(90deg,#3f3b35 0.0%,#3e3a34 1.3%,#3d3933 2.5%,#3d3933 3.8%,#3c3832 5.0%,#3c3832 6.3%,#3b3731 7.5%,#3b3731 8.8%,#3a3630 10.0%,#3a3630 11.3%,#39352f 12.5%,#38342f 13.8%,#38342e 15.0%,#37332e 16.3%,#37332d 17.5%,#36322d 18.8%,#35312c 20.0%,#35312c 21.3%,#35312c 22.5%,#35312c 23.8%,#35312c 25.0%,#35312c 26.3%,#36322c 27.5%,#36322c 28.8%,#37332d 30.0%,#38332d 31.3%,#38342d 32.5%,#39342e 33.8%,#39352e 35.0%,#3a352e 36.3%,#3b362f 37.5%,#3c372f 38.8%,#3d3830 40.0%,#3f3931 41.3%,#403a32 42.5%,#413c33 43.8%,#433d33 45.0%,#443e34 46.3%,#464035 47.5%,#494237 48.8%,#4c4539 50.0%,#4f473a 51.3%,#514a3c 52.5%,#544d3d 53.8%,#574f3f 55.0%,#574f3f 56.3%,#58503f 57.5%,#58503f 58.8%,#595140 60.0%,#595140 61.3%,#5a5240 62.5%,#5a5240 63.8%,#59503f 65.0%,#564e3d 66.3%,#544b3b 67.5%,#524839 68.8%,#4f4537 70.0%,#4a3e31 71.3%,#443629 72.5%,#3f2e21 73.8%,#3e2b1f 75.0%,#402c1f 76.3%,#422c1f 77.5%,#483427 78.8%,#534437 80.0%,#5c5244 81.3%,#564c3e 82.5%,#4d4335 83.8%,#3d362c 85.0%,#2e2923 86.3%,#28241f 87.5%,#28241f 88.8%,#28241f 90.0%,#27231f 91.3%,#27231f 92.5%,#27231f 93.8%,#282420 95.0%,#292521 96.3%,#2a2622 97.5%,#2b2723 98.8%,#2c2824 100.0%)"></div>
<div style="left:0px;top:784px;width:1280px;height:4px;background:linear-gradient(90deg,#3f3b35 0.0%,#3e3a34 1.3%,#3d3933 2.5%,#3d3933 3.8%,#3c3832 5.0%,#3c3832 6.3%,#3b3731 7.5%,#3b3731 8.8%,#3a3630 10.0%,#3a3630 11.3%,#39352f 12.5%,#38342f 13.8%,#38342e 15.0%,#37332e 16.3%,#37332d 17.5%,#36322d 18.8%,#35312c 20.0%,#35312c 21.3%,#35312c 22.5%,#35312c 23.8%,#35312c 25.0%,#35312c 26.3%,#36322c 27.5%,#36322c 28.8%,#37332d 30.0%,#38332d 31.3%,#38342d 32.5%,#39342e 33.8%,#39352e 35.0%,#3a352e 36.3%,#3b362f 37.5%,#3c372f 38.8%,#3d3830 40.0%,#3f3931 41.3%,#403a32 42.5%,#413c33 43.8%,#433d33 45.0%,#443e34 46.3%,#464035 47.5%,#494237 48.8%,#4c4539 50.0%,#4f473a 51.3%,#514a3c 52.5%,#544d3d 53.8%,#574f3f 55.0%,#574f3f 56.3%,#58503f 57.5%,#58503f 58.8%,#595140 60.0%,#595140 61.3%,#5a5240 62.5%,#5a5240 63.8%,#59503f 65.0%,#564e3d 66.3%,#544b3b 67.5%,#524839 68.8%,#4f4537 70.0%,#4a3e31 71.3%,#443629 72.5%,#3f2e21 73.8%,#3e2b1f 75.0%,#402c1f 76.3%,#422c1f 77.5%,#483427 78.8%,#534437 80.0%,#5c5244 81.3%,#564c3e 82.5%,#4d4335 83.8%,#3d362c 85.0%,#2e2923 86.3%,#28241f 87.5%,#28241f 88.8%,#28241f 90.0%,#27231f 91.3%,#27231f 92.5%,#27231f 93.8%,#282420 95.0%,#292521 96.3%,#2a2622 97.5%,#2b2723 98.8%,#2c2824 100.0%)"></div>
<div style="left:0px;top:788px;width:1280px;height:4px;background:linear-gradient(90deg,#3f3b35 0.0%,#3e3a34 1.3%,#3d3933 2.5%,#3d3933 3.8%,#3c3832 5.0%,#3c3832 6.3%,#3b3731 7.5%,#3b3731 8.8%,#3a3630 10.0%,#3a3630 11.3%,#39352f 12.5%,#38342f 13.8%,#38342e 15.0%,#37332e 16.3%,#37332d 17.5%,#36322d 18.8%,#35312c 20.0%,#35312c 21.3%,#35312c 22.5%,#35312c 23.8%,#35312c 25.0%,#35312c 26.3%,#36322c 27.5%,#36322c 28.8%,#37332d 30.0%,#38332d 31.3%,#38342d 32.5%,#39342e 33.8%,#39352e 35.0%,#3a352e 36.3%,#3b362f 37.5%,#3c372f 38.8%,#3d3830 40.0%,#3f3931 41.3%,#403a32 42.5%,#413c33 43.8%,#433d33 45.0%,#443e34 46.3%,#464035 47.5%,#494237 48.8%,#4c4539 50.0%,#4f473a 51.3%,#514a3c 52.5%,#544d3d 53.8%,#574f3f 55.0%,#574f3f 56.3%,#58503f 57.5%,#58503f 58.8%,#595140 60.0%,#595140 61.3%,#5a5240 62.5%,#5a5240 63.8%,#59503f 65.0%,#564e3d 66.3%,#544b3b 67.5%,#524839 68.8%,#4f4537 70.0%,#4a3e31 71.3%,#443629 72.5%,#3f2e21 73.8%,#3e2b1f 75.0%,#402c1f 76.3%,#422c1f 77.5%,#483427 78.8%,#534437 80.0%,#5c5244 81.3%,#564c3e 82.5%,#4d4335 83.8%,#3d362c 85.0%,#2e2923 86.3%,#28241f 87.5%,#28241f 88.8%,#28241f 90.0%,#27231f 91.3%,#27231f 92.5%,#27231f 93.8%,#282420 95.0%,#292521 96.3%,#2a2622 97.5%,#2b2723 98.8%,#2c2824 100.0%)"></div>
<div style="left:0px;top:792px;width:1280px;height:4px;background:linear-gradient(90deg,#3f3b35 0.0%,#3e3a34 1.3%,#3d3933 2.5%,#3d3933 3.8%,#3c3832 5.0%,#3c3832 6.3%,#3b3731 7.5%,#3b3731 8.8%,#3a3630 10.0%,#3a3630 11.3%,#39352f 12.5%,#38342f 13.8%,#38342e 15.0%,#37332e 16.3%,#37332d 17.5%,#36322d 18.8%,#35312c 20.0%,#35312c 21.3%,#35312c 22.5%,#35312c 23.8%,#35312c 25.0%,#35312c 26.3%,#36322c 27.5%,#36322c 28.8%,#37332d 30.0%,#38332d 31.3%,#38342d 32.5%,#39342e 33.8%,#39352e 35.0%,#3a352e 36.3%,#3b362f 37.5%,#3c372f 38.8%,#3d3830 40.0%,#3f3931 41.3%,#403a32 42.5%,#413c33 43.8%,#433d33 45.0%,#443e34 46.3%,#464035 47.5%,#494237 48.8%,#4c4539 50.0%,#4f473a 51.3%,#514a3c 52.5%,#544d3d 53.8%,#574f3f 55.0%,#574f3f 56.3%,#58503f 57.5%,#58503f 58.8%,#595140 60.0%,#595140 61.3%,#5a5240 62.5%,#5a5240 63.8%,#59503f 65.0%,#564e3d 66.3%,#544b3b 67.5%,#524839 68.8%,#4f4537 70.0%,#4a3e31 71.3%,#443629 72.5%,#3f2e21 73.8%,#3e2b1f 75.0%,#402c1f 76.3%,#422c1f 77.5%,#483427 78.8%,#534437 80.0%,#5c5244 81.3%,#564c3e 82.5%,#4d4335 83.8%,#3d362c 85.0%,#2e2923 86.3%,#28241f 87.5%,#28241f 88.8%,#28241f 90.0%,#27231f 91.3%,#27231f 92.5%,#27231f 93.8%,#282420 95.0%,#292521 96.3%,#2a2622 97.5%,#2b2723 98.8%,#2c2824 100.0%)"></div>
<div style="left:0px;top:796px;width:1280px;height:4px;background:linear-gradient(90deg,#3f3b35 0.0%,#3e3a34 1.3%,#3d3933 2.5%,#3d3933 3.8%,#3c3832 5.0%,#3c3832 6.3%,#3b3731 7.5%,#3b3731 8.8%,#3a3630 10.0%,#3a3630 11.3%,#39352f 12.5%,#38342f 13.8%,#38342e 15.0%,#37332e 16.3%,#37332d 17.5%,#36322d 18.8%,#35312c 20.0%,#35312c 21.3%,#35312c 22.5%,#35312c 23.8%,#35312c 25.0%,#35312c 26.3%,#36322c 27.5%,#36322c 28.8%,#37332d 30.0%,#38332d 31.3%,#38342d 32.5%,#39342e 33.8%,#39352e 35.0%,#3a352e 36.3%,#3b362f 37.5%,#3c372f 38.8%,#3d3830 40.0%,#3f3931 41.3%,#403a32 42.5%,#413c33 43.8%,#433d33 45.0%,#443e34 46.3%,#464035 47.5%,#494237 48.8%,#4c4539 50.0%,#4f473a 51.3%,#514a3c 52.5%,#544d3d 53.8%,#574f3f 55.0%,#574f3f 56.3%,#58503f 57.5%,#58503f 58.8%,#595140 60.0%,#595140 61.3%,#5a5240 62.5%,#5a5240 63.8%,#59503f 65.0%,#564e3d 66.3%,#544b3b 67.5%,#524839 68.8%,#4f4537 70.0%,#4a3e31 71.3%,#443629 72.5%,#3f2e21 73.8%,#3e2b1f 75.0%,#402c1f 76.3%,#422c1f 77.5%,#483427 78.8%,#534437 80.0%,#5c5244 81.3%,#564c3e 82.5%,#4d4335 83.8%,#3d362c 85.0%,#2e2923 86.3%,#28241f 87.5%,#28241f 88.8%,#28241f 90.0%,#27231f 91.3%,#27231f 92.5%,#27231f 93.8%,#282420 95.0%,#292521 96.3%,#2a2622 97.5%,#2b2723 98.8%,#2c2824 100.0%)"></div></div>
<div id="win">
  <div id="tabs">
    <div class="dot" style="left:12px;background:#fc5b57;border:1px solid #e0443e"></div>
    <div class="dot" style="left:32px;background:#fdbc2e;border:1px solid #dea123"></div>
    <div class="dot" style="left:52px;background:#29c840;border:1px solid #1aab29"></div>
  </div>
  <div id="tb"></div>
</div>

<!-- tab -->
<svg class="a" style="left:94px;top:65px" width="1107" height="38">
  <path d="M72.5 37.5 Q77.5 37.5 77.5 32.5 L77.5 13.5 Q77.5 9.5 81.5 9.5 L258.5 9.5 Q262.5 9.5 262.5 13.5 L262.5 32.5 Q262.5 37.5 267.5 37.5" fill="#f3f2f0" stroke="#8a8886" stroke-width="1.1"/>
  <rect x="78" y="36" width="184" height="2" fill="#f3f2f0"/>
</svg>
<svg class="a" style="left:175px;top:79px" width="18" height="18">
  <rect x="2.5" y="1.5" width="13" height="15" rx="1.5" fill="#1e4547" stroke="#1ef2f4" stroke-width="1.2"/>
  <path d="M1 9 H3 M15 9 H17" stroke="#1ef2f4" stroke-width="1.2"/>
  <text x="9.2" y="14.6" text-anchor="middle" font-family="Liberation Sans" font-weight="bold" font-size="14.5" fill="#14f6f8" stroke="#14f6f8" stroke-width=".6">S</text>
</svg>
<div class="t" style="left:197px;top:83px;font-size:11px;letter-spacing:.3px;color:#111">Edit Style my style</div>
<!-- plus -->
<div class="a" style="left:368px;top:87px;width:13px;height:1px;background:#6a6a6a"></div>
<div class="a" style="left:374px;top:81px;width:1px;height:13px;background:#6a6a6a"></div>
<!-- tab list icon -->
<div class="a" style="left:1175px;top:82px;width:13px;height:1px;background:#6a6a6a"></div>
<div class="a" style="left:1175px;top:86px;width:13px;height:1px;background:#6a6a6a"></div>
<svg class="a" style="left:1177px;top:90px" width="9" height="5"><path d="M0.5 0 L8.5 0 L4.5 4 Z" fill="#6a6a6a"/></svg>

<!-- toolbar buttons -->
<div class="btn" style="left:104px;top:111px;width:26px;height:22px"></div>
<div class="btn" style="left:131px;top:111px;width:26px;height:22px"></div>
<svg class="a" style="left:104px;top:111px" width="54" height="22">
  <path d="M14.5 6.5 L10 11 L14.5 15.5" fill="none" stroke="#1c1c1c" stroke-width="2"/>
  <path d="M38.5 6.5 L43 11 L38.5 15.5" fill="none" stroke="#b0b0b0" stroke-width="2"/>
</svg>
<div class="btn" style="left:167px;top:111px;width:28px;height:22px"></div>
<svg class="a" style="left:167px;top:111px" width="28" height="22">
  <path d="M18.2 7.4 A5.3 5.3 0 1 0 19.3 12.2" fill="none" stroke="#404040" stroke-width="2"/>
  <path d="M20 4.2 L20 9.8 L14.4 9.8 Z" fill="#404040"/>
</svg>
<div class="btn" style="left:205px;top:111px;width:28px;height:22px"></div>
<svg class="a" style="left:205px;top:111px" width="28" height="22" fill="#333">
  <rect x="8" y="6" width="3" height="2"/><rect x="13" y="6" width="3" height="2"/><rect x="18" y="6" width="3" height="2"/>
  <rect x="8" y="10" width="3" height="2"/><rect x="13" y="10" width="3" height="2"/><rect x="18" y="10" width="3" height="2"/>
  <rect x="8" y="14" width="3" height="2"/><rect x="13" y="14" width="3" height="2"/>
</svg>
<!-- url bar -->
<div class="a" style="left:245px;top:111px;width:840px;height:22px;background:#fff;border-radius:4px;box-shadow:0 0.5px 1px rgba(0,0,0,.25)"></div>
<div class="a" style="left:253px;top:116px;width:27px;height:13px;background:#0a84ff;border-radius:1px"></div>
<div class="t" style="left:255px;top:117px;font-size:11px;font-weight:bold;color:#fff">VPN</div>
<div class="a" style="left:285px;top:120px;width:3px;height:3px;border-radius:50%;background:#c8c8c8"></div>
<svg class="a" style="left:293px;top:113px" width="16" height="16">
  <rect x="0" y="5" width="10" height="10" fill="#8f8f8f"/>
  <circle cx="5" cy="2.9" r="2" fill="#8f8f8f"/><rect x="4" y="3" width="2" height="3" fill="#8f8f8f"/>
  <circle cx="12.2" cy="10" r="2" fill="#8f8f8f"/><rect x="9" y="9" width="3" height="2" fill="#8f8f8f"/>
  <circle cx="0.6" cy="10" r="1.7" fill="#fff"/>
  <circle cx="5.5" cy="15.2" r="1.5" fill="#fff"/>
</svg>
<div class="a" style="left:315px;top:115px;width:1px;height:14px;background:#dcdcdc"></div>
<div class="t" style="left:325px;top:116px;font-size:12.5px;color:#b5b5b5">Search or enter an address</div>
<!-- stylus icon -->
<svg class="a" style="left:1096px;top:112px" width="22" height="22">
  <rect x="3.2" y="1.2" width="14.6" height="18.6" rx="1.5" fill="#245052" stroke="#1ef2f4" stroke-width="1.3"/>
  <path d="M1 10 H4" stroke="#1ef2f4" stroke-width="1.3"/>
  <text x="10.5" y="16.5" text-anchor="middle" font-family="Liberation Sans" font-weight="bold" font-size="17" fill="#14f6f8">S</text>
  <rect x="9" y="9" width="11" height="11" fill="#626262"/>
  <path d="M12.3 12.6 L14.6 11 H15.9 V18.5 H14.1 V13.4 L12.3 14.4 Z" fill="#fff"/>
</svg>
<!-- share -->
<div class="btn" style="left:1124px;top:111px;width:29px;height:22px"></div>
<svg class="a" style="left:1124px;top:111px" width="29" height="22">
  <path d="M13 8.5 H10.5 V17.5 H20.5 V8.5 H17" fill="none" stroke="#8c8c8c" stroke-width="1.1"/>
  <path d="M15.5 3.5 V13" stroke="#8c8c8c" stroke-width="1.1"/>
  <path d="M12.8 6.2 L15.5 3.5 L18.2 6.2" fill="none" stroke="#8c8c8c" stroke-width="1.1"/>
</svg>
<!-- download -->
<div class="btn" style="left:1162px;top:111px;width:29px;height:22px"></div>
<svg class="a" style="left:1162px;top:111px" width="29" height="22">
  <circle cx="15" cy="11" r="6.9" fill="none" stroke="#9a9a9a" stroke-width="1.2"/>
  <path d="M15 6.5 V12" stroke="#3c3c3c" stroke-width="1.8"/>
  <path d="M12 11 L15 14.6 L18 11 Z" fill="#3c3c3c"/>
</svg>

<!-- content: divider -->
<div class="a" style="left:365px;top:142px;width:20px;height:603px;background:linear-gradient(90deg,#ededed,#fafafa 40%,#fff)"></div>
<div class="a" style="left:364px;top:142px;width:1px;height:603px;background:repeating-linear-gradient(180deg,#8a8a8a 0 3px,transparent 3px 6px)"></div>

<!-- left panel -->
<h1 style="left:109px;top:159px;font-size:24px">Edit Style</h1>
<div class="a" style="left:109px;top:201px;width:240px;height:19px;border:1px solid #b0b0b0;background:#fff"></div>
<div class="t" style="left:112px;top:205px;font-size:12px;color:#111">my style</div>
<div class="cb" style="left:109px;top:223px"><svg width="10" height="10"><path d="M2 5.3 L4.2 7.6 L8 2.4" fill="none" stroke="#fff" stroke-width="1.7"/></svg></div>
<div class="t" style="left:128px;top:223px;font-size:12px">Enabled</div>

<div class="a" style="left:107px;top:252px;width:46px;height:22px;border-radius:6px;background:#8ec1fc;box-shadow:inset 0 0 0 1px #a3cdfd"></div>
<div class="a" style="left:109px;top:254px;width:42px;height:18px;border-radius:4px;background:#76aaec"></div>
<div class="pb" style="left:110.5px;top:255.5px;width:39px;height:15px;line-height:14px;border:none;border-radius:3px">Save</div>
<div class="pb" style="left:154px;top:254px;width:58px">Beautify</div>
<div class="pb" style="left:216px;top:254px;width:99px">Back to manage</div>

<h2 style="left:109px;top:288px;font-size:18px">Mozilla Format</h2>
<svg class="a" style="left:239px;top:291px" width="14" height="14"><circle cx="7" cy="7" r="6.6" fill="#5f8dcf"/><circle cx="7" cy="7" r="5.4" fill="none" stroke="#dfe9f6" stroke-width="1.1"/><circle cx="7" cy="7" r="4.8" fill="#5d8fd0"/><text x="7.1" y="10.3" text-anchor="middle" font-family="Liberation Sans" font-weight="bold" font-size="9.5" fill="#fff" stroke="#fff" stroke-width=".25">?</text></svg>
<div class="pb" style="left:109px;top:323px;width:49px">Import</div>
<div class="pb" style="left:162px;top:323px;width:50px">Export</div>

<h2 style="left:109px;top:357px;font-size:18px">Options</h2>
<div class="cb" style="left:111px;top:395px"><svg width="10" height="10"><path d="M2 5.3 L4.2 7.6 L8 2.4" fill="none" stroke="#fff" stroke-width="1.7"/></svg></div>
<div class="t" style="left:129px;top:395px;font-size:12px">Word wrap</div>
<div class="cb" style="left:111px;top:413px"><svg width="10" height="10"><path d="M2 5.3 L4.2 7.6 L8 2.4" fill="none" stroke="#fff" stroke-width="1.7"/></svg></div>
<div class="t" style="left:129px;top:413px;font-size:12px">Use smart indentation</div>
<div class="cbu" style="left:111px;top:431px"></div>
<div class="t" style="left:129px;top:431px;font-size:12px">Use tabs with smart indentation</div>

<div class="t" style="left:109px;top:452px;font-size:12px">Tab size</div>
<div class="a" style="left:158px;top:448px;width:40px;height:22px;border:1px solid #b8b8b8;background:#fff"></div>
<div class="t" style="left:172px;top:453px;font-size:12px;color:#111">4</div>

<div class="t" style="left:109px;top:476px;font-size:12px">Keymap</div>
<div class="a" style="left:157px;top:472px;width:94px;height:21px;border:1px solid #c0c0c0;border-radius:4px;background:#fff;box-shadow:0 1px 1px rgba(0,0,0,.1)"></div>
<div class="a" style="left:234px;top:472px;width:17px;height:21px;border-radius:0 4px 4px 0;background:linear-gradient(#5aa0fa,#1e6ff0)"></div>
<svg class="a" style="left:234px;top:472px" width="17" height="21"><path d="M5.5 8.5 L8.5 5.5 L11.5 8.5 M5.5 12.5 L8.5 15.5 L11.5 12.5" fill="none" stroke="#fff" stroke-width="1.4"/></svg>
<div class="t" style="left:166px;top:477px;font-size:12px;color:#111">default</div>
<svg class="a" style="left:255px;top:476px" width="14" height="14"><circle cx="7" cy="7" r="6.6" fill="#5f8dcf"/><circle cx="7" cy="7" r="5.4" fill="none" stroke="#dfe9f6" stroke-width="1.1"/><circle cx="7" cy="7" r="4.8" fill="#5d8fd0"/><text x="7.1" y="10.3" text-anchor="middle" font-family="Liberation Sans" font-weight="bold" font-size="9.5" fill="#fff" stroke="#fff" stroke-width=".25">?</text></svg>

<div class="t" style="left:109px;top:500px;font-size:12px">Theme</div>
<div class="a" style="left:157px;top:496px;width:160px;height:21px;border:1px solid #c0c0c0;border-radius:4px;background:#fff;box-shadow:0 1px 1px rgba(0,0,0,.1)"></div>
<div class="a" style="left:300px;top:496px;width:17px;height:21px;border-radius:0 4px 4px 0;background:linear-gradient(#5aa0fa,#1e6ff0)"></div>
<svg class="a" style="left:300px;top:496px" width="17" height="21"><path d="M5.5 8.5 L8.5 5.5 L11.5 8.5 M5.5 12.5 L8.5 15.5 L11.5 12.5" fill="none" stroke="#fff" stroke-width="1.4"/></svg>
<div class="t" style="left:166px;top:501px;font-size:12px;color:#111">default</div>

<!-- right panel -->
<h2 style="left:382px;top:151px;font-size:18px">Sections</h2>
<svg class="a" style="left:461px;top:154px" width="14" height="14"><circle cx="7" cy="7" r="6.6" fill="#5f8dcf"/><circle cx="7" cy="7" r="5.4" fill="none" stroke="#dfe9f6" stroke-width="1.1"/><circle cx="7" cy="7" r="4.8" fill="#5d8fd0"/><text x="7.1" y="10.3" text-anchor="middle" font-family="Liberation Sans" font-weight="bold" font-size="9.5" fill="#fff" stroke="#fff" stroke-width=".25">?</text></svg>
<div class="t" style="left:409px;top:203px;font-size:12px">Code 1</div>
<div class="a" style="left:409px;top:216px;width:765px;height:302px;border:1px solid #bdbdbd;background:#fff"></div>
<div class="a" style="left:410px;top:217px;width:55px;height:300px;background:#f7f7f7;border-right:1px solid #dddddd"></div>
<div class="a" style="left:465px;top:235px;width:708px;height:14px;background:#e2eeff"></div>
<div class="cm" style="left:416px;top:222px;width:20px;text-align:right;color:#999">1
2
3</div>
<svg class="a" style="left:439px;top:227px" width="9" height="5"><path d="M0.5 0.5 L8 0.5 L4.25 4.5 Z" fill="#888"/></svg>
<div class="cm" style="left:468px;top:222px;color:#000"><span style="color:#170">body</span> {
    color: <span style="color:#219">#333</span>;
}</div>
<svg class="a" style="left:1162px;top:506px" width="11" height="11"><path d="M3 10.5 L10.5 3 M7 10.5 L10.5 7" stroke="#555" stroke-width="1"/></svg>

<div class="t" style="left:409px;top:538px;font-size:12px">Applies to</div>
<svg class="a" style="left:469px;top:536px" width="14" height="14"><circle cx="7" cy="7" r="6.6" fill="#5f8dcf"/><circle cx="7" cy="7" r="5.4" fill="none" stroke="#dfe9f6" stroke-width="1.1"/><circle cx="7" cy="7" r="4.8" fill="#5d8fd0"/><text x="7.1" y="10.3" text-anchor="middle" font-family="Liberation Sans" font-weight="bold" font-size="9.5" fill="#fff" stroke="#fff" stroke-width=".25">?</text></svg>
<div class="t" style="left:490px;top:535px;font-size:12px">Everything</div>
<div class="pb" style="left:563px;top:532px;width:55px">Specify</div>
<div class="pb" style="left:412px;top:556px;width:121px">Add another section</div>
<div class="pb" style="left:540px;top:556px;width:59px">Beautify</div>
</body></html>
